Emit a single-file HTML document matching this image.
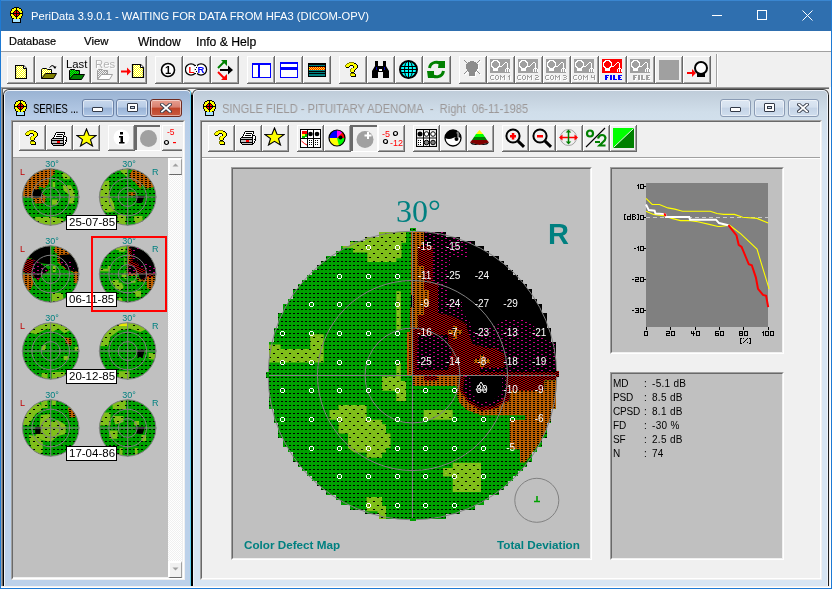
<!DOCTYPE html><html><head><meta charset="utf-8"><style>
*{margin:0;padding:0;box-sizing:border-box}
html,body{width:832px;height:589px;overflow:hidden;background:#f0f0f0;font-family:"Liberation Sans",sans-serif;position:relative}
.a{position:absolute}
.btn{position:absolute;width:28px;height:28px;background:#f0f0f0;border-left:1px solid #fff;border-top:1px solid #fff;box-shadow:inset -1px -1px 0 #a0a0a0, 1px 1px 0 #696969}
.btn svg{position:absolute;left:0;top:0}
.sbtn{position:absolute;width:27px;height:27px;background:#f0f0f0;border-left:1px solid #fff;border-top:1px solid #fff;box-shadow:inset -1px -1px 0 #a0a0a0, 1px 1px 0 #696969}
.t{position:absolute;white-space:nowrap;line-height:1}
svg,.t{will-change:transform}
</style></head><body><div class="a" style="left:0px;top:0px;width:832px;height:31px;background:#2f6faf;"></div><div class="a" style="left:0px;top:0px;width:832px;height:1px;background:#3a86d0;"></div><div class="a" style="left:0px;top:0px;width:1px;height:589px;background:#1e7ad4;"></div><div class="a" style="left:831px;top:0px;width:1px;height:589px;background:#1e7ad4;"></div><div class="a" style="left:0px;top:588px;width:832px;height:1px;background:#1e7ad4;"></div><div class="a" style="left:1px;top:31px;width:830px;height:20px;background:#ffffff;"></div><div class="a" style="left:1px;top:51px;width:830px;height:1px;background:#a0a0a0;"></div><div class="a" style="left:10px;top:7px"><svg width="13" height="16" viewBox="0 0 13 16" shape-rendering="crispEdges"><rect x="4" y="0" width="5" height="1" fill="#000"/><rect x="2" y="1" width="2" height="1" fill="#000"/><rect x="4" y="1" width="2" height="1" fill="#ffff00"/><rect x="6" y="1" width="1" height="1" fill="#000"/><rect x="7" y="1" width="2" height="1" fill="#ffff00"/><rect x="9" y="1" width="2" height="1" fill="#000"/><rect x="1" y="2" width="1" height="1" fill="#000"/><rect x="2" y="2" width="4" height="1" fill="#ffff00"/><rect x="6" y="2" width="1" height="1" fill="#000"/><rect x="7" y="2" width="4" height="1" fill="#ffff00"/><rect x="11" y="2" width="1" height="1" fill="#000"/><rect x="1" y="3" width="1" height="1" fill="#000"/><rect x="2" y="3" width="3" height="1" fill="#ffff00"/><rect x="5" y="3" width="3" height="1" fill="#000"/><rect x="8" y="3" width="3" height="1" fill="#ffff00"/><rect x="11" y="3" width="1" height="1" fill="#000"/><rect x="0" y="4" width="1" height="1" fill="#000"/><rect x="1" y="4" width="3" height="1" fill="#ffff00"/><rect x="4" y="4" width="1" height="1" fill="#000"/><rect x="5" y="4" width="1" height="1" fill="#ff0000"/><rect x="6" y="4" width="1" height="1" fill="#000"/><rect x="7" y="4" width="1" height="1" fill="#ff0000"/><rect x="8" y="4" width="1" height="1" fill="#000"/><rect x="9" y="4" width="3" height="1" fill="#ffff00"/><rect x="12" y="4" width="1" height="1" fill="#000"/><rect x="0" y="5" width="1" height="1" fill="#000"/><rect x="1" y="5" width="2" height="1" fill="#ffff00"/><rect x="3" y="5" width="1" height="1" fill="#000"/><rect x="4" y="5" width="2" height="1" fill="#ff0000"/><rect x="6" y="5" width="1" height="1" fill="#000"/><rect x="7" y="5" width="2" height="1" fill="#ff0000"/><rect x="9" y="5" width="1" height="1" fill="#000"/><rect x="10" y="5" width="2" height="1" fill="#ffff00"/><rect x="12" y="5" width="1" height="1" fill="#000"/><rect x="0" y="6" width="13" height="1" fill="#000"/><rect x="0" y="7" width="1" height="1" fill="#000"/><rect x="1" y="7" width="2" height="1" fill="#ffff00"/><rect x="3" y="7" width="1" height="1" fill="#000"/><rect x="4" y="7" width="2" height="1" fill="#ff0000"/><rect x="6" y="7" width="1" height="1" fill="#000"/><rect x="7" y="7" width="2" height="1" fill="#ff0000"/><rect x="9" y="7" width="1" height="1" fill="#000"/><rect x="10" y="7" width="2" height="1" fill="#ffff00"/><rect x="12" y="7" width="1" height="1" fill="#000"/><rect x="0" y="8" width="1" height="1" fill="#000"/><rect x="1" y="8" width="3" height="1" fill="#ffff00"/><rect x="4" y="8" width="1" height="1" fill="#000"/><rect x="5" y="8" width="1" height="1" fill="#ff0000"/><rect x="6" y="8" width="1" height="1" fill="#000"/><rect x="7" y="8" width="1" height="1" fill="#ff0000"/><rect x="8" y="8" width="1" height="1" fill="#000"/><rect x="9" y="8" width="3" height="1" fill="#ffff00"/><rect x="12" y="8" width="1" height="1" fill="#000"/><rect x="1" y="9" width="1" height="1" fill="#000"/><rect x="2" y="9" width="3" height="1" fill="#ffff00"/><rect x="5" y="9" width="3" height="1" fill="#000"/><rect x="8" y="9" width="3" height="1" fill="#ffff00"/><rect x="11" y="9" width="1" height="1" fill="#000"/><rect x="1" y="10" width="1" height="1" fill="#000"/><rect x="2" y="10" width="4" height="1" fill="#ffff00"/><rect x="6" y="10" width="1" height="1" fill="#000"/><rect x="7" y="10" width="4" height="1" fill="#ffff00"/><rect x="11" y="10" width="1" height="1" fill="#000"/><rect x="2" y="11" width="2" height="1" fill="#000"/><rect x="4" y="11" width="2" height="1" fill="#ffff00"/><rect x="6" y="11" width="1" height="1" fill="#000"/><rect x="7" y="11" width="2" height="1" fill="#ffff00"/><rect x="9" y="11" width="2" height="1" fill="#000"/><rect x="2" y="12" width="1" height="1" fill="#000"/><rect x="3" y="12" width="7" height="1" fill="#a8e4ff"/><rect x="10" y="12" width="1" height="1" fill="#000"/><rect x="2" y="13" width="1" height="1" fill="#000"/><rect x="3" y="13" width="7" height="1" fill="#a8e4ff"/><rect x="10" y="13" width="1" height="1" fill="#000"/><rect x="2" y="14" width="1" height="1" fill="#000"/><rect x="3" y="14" width="7" height="1" fill="#a8e4ff"/><rect x="10" y="14" width="1" height="1" fill="#000"/><rect x="2" y="15" width="9" height="1" fill="#000"/></svg></div><div class="t" style="left:31px;top:10.5px;font-size:11.2px;color:#fff;font-weight:normal;font-family:'Liberation Sans',sans-serif;">PeriData 3.9.0.1 - WAITING FOR DATA FROM HFA3 (DICOM-OPV)</div><div class="a" style="left:712px;top:15px;width:10px;height:1px;background:#fff;"></div><div class="a" style="left:757px;top:10px;width:10px;height:10px;border:1px solid #fff"></div><svg class="a" style="left:802px;top:10px" width="11" height="11"><path d="M0.5 0.5L10.5 10.5M10.5 0.5L0.5 10.5" stroke="#fff" stroke-width="1"/></svg><div class="t" style="left:9px;top:36.3px;font-size:11px;color:#000;font-weight:normal;font-family:'Liberation Sans',sans-serif;-webkit-text-stroke:0.2px #000">Database</div><div class="t" style="left:84px;top:36.3px;font-size:11.4px;color:#000;font-weight:normal;font-family:'Liberation Sans',sans-serif;-webkit-text-stroke:0.2px #000">View</div><div class="t" style="left:137.5px;top:36.3px;font-size:12px;color:#000;font-weight:normal;font-family:'Liberation Sans',sans-serif;-webkit-text-stroke:0.2px #000">Window</div><div class="t" style="left:195.5px;top:36.3px;font-size:12.2px;color:#000;font-weight:normal;font-family:'Liberation Sans',sans-serif;-webkit-text-stroke:0.2px #000">Info &amp; Help</div><div class="a" style="left:1px;top:52px;width:830px;height:36px;background:#f0f0f0;"></div><svg width="0" height="0" style="position:absolute">
<defs>
<pattern id="dy" width="2" height="2" patternUnits="userSpaceOnUse"><rect width="2" height="2" fill="#ffff00"/><rect width="1" height="1" fill="#fff"/><rect x="1" y="1" width="1" height="1" fill="#fff"/></pattern>
<pattern id="dg" width="2" height="2" patternUnits="userSpaceOnUse"><rect width="2" height="2" fill="#00ff00"/><rect width="1" height="1" fill="#008000"/><rect x="1" y="1" width="1" height="1" fill="#008000"/></pattern>
<pattern id="dgr" width="2" height="2" patternUnits="userSpaceOnUse"><rect width="2" height="2" fill="#f0f0f0"/><rect width="1" height="1" fill="#a0a0a0"/><rect x="1" y="1" width="1" height="1" fill="#a0a0a0"/></pattern>
<pattern id="dyr" width="2" height="2" patternUnits="userSpaceOnUse"><rect width="2" height="2" fill="#ffff00"/><rect width="1" height="1" fill="#ff0000"/><rect x="1" y="1" width="1" height="1" fill="#ff0000"/></pattern>
<pattern id="scr" width="2" height="2" patternUnits="userSpaceOnUse"><rect width="2" height="2" fill="#fff"/><rect width="1" height="1" fill="#f0f0f0"/><rect x="1" y="1" width="1" height="1" fill="#f0f0f0"/></pattern>
</defs></svg><div class="a" style="left:7px;top:56px;width:28px;height:28px;background:#f0f0f0;"><div class="a" style="left:0;top:0;width:28px;height:1px;background:#fff"></div><div class="a" style="left:0;top:0;width:1px;height:28px;background:#fff"></div><div class="a" style="left:26px;top:1px;width:1px;height:26px;background:#a0a0a0"></div><div class="a" style="left:1px;top:26px;width:26px;height:1px;background:#a0a0a0"></div><div class="a" style="left:27px;top:0;width:1px;height:28px;background:#696969"></div><div class="a" style="left:0;top:27px;width:28px;height:1px;background:#696969"></div></div><div class="a" style="left:35px;top:56px;width:28px;height:28px;background:#f0f0f0;"><div class="a" style="left:0;top:0;width:28px;height:1px;background:#fff"></div><div class="a" style="left:0;top:0;width:1px;height:28px;background:#fff"></div><div class="a" style="left:26px;top:1px;width:1px;height:26px;background:#a0a0a0"></div><div class="a" style="left:1px;top:26px;width:26px;height:1px;background:#a0a0a0"></div><div class="a" style="left:27px;top:0;width:1px;height:28px;background:#696969"></div><div class="a" style="left:0;top:27px;width:28px;height:1px;background:#696969"></div></div><div class="a" style="left:63px;top:56px;width:28px;height:28px;background:#f0f0f0;"><div class="a" style="left:0;top:0;width:28px;height:1px;background:#fff"></div><div class="a" style="left:0;top:0;width:1px;height:28px;background:#fff"></div><div class="a" style="left:26px;top:1px;width:1px;height:26px;background:#a0a0a0"></div><div class="a" style="left:1px;top:26px;width:26px;height:1px;background:#a0a0a0"></div><div class="a" style="left:27px;top:0;width:1px;height:28px;background:#696969"></div><div class="a" style="left:0;top:27px;width:28px;height:1px;background:#696969"></div></div><div class="a" style="left:91px;top:56px;width:28px;height:28px;background:#f0f0f0;"><div class="a" style="left:0;top:0;width:28px;height:1px;background:#fff"></div><div class="a" style="left:0;top:0;width:1px;height:28px;background:#fff"></div><div class="a" style="left:26px;top:1px;width:1px;height:26px;background:#a0a0a0"></div><div class="a" style="left:1px;top:26px;width:26px;height:1px;background:#a0a0a0"></div><div class="a" style="left:27px;top:0;width:1px;height:28px;background:#696969"></div><div class="a" style="left:0;top:27px;width:28px;height:1px;background:#696969"></div></div><div class="a" style="left:119px;top:56px;width:28px;height:28px;background:#f0f0f0;"><div class="a" style="left:0;top:0;width:28px;height:1px;background:#fff"></div><div class="a" style="left:0;top:0;width:1px;height:28px;background:#fff"></div><div class="a" style="left:26px;top:1px;width:1px;height:26px;background:#a0a0a0"></div><div class="a" style="left:1px;top:26px;width:26px;height:1px;background:#a0a0a0"></div><div class="a" style="left:27px;top:0;width:1px;height:28px;background:#696969"></div><div class="a" style="left:0;top:27px;width:28px;height:1px;background:#696969"></div></div><div class="a" style="left:155px;top:56px;width:28px;height:28px;background:#f0f0f0;"><div class="a" style="left:0;top:0;width:28px;height:1px;background:#fff"></div><div class="a" style="left:0;top:0;width:1px;height:28px;background:#fff"></div><div class="a" style="left:26px;top:1px;width:1px;height:26px;background:#a0a0a0"></div><div class="a" style="left:1px;top:26px;width:26px;height:1px;background:#a0a0a0"></div><div class="a" style="left:27px;top:0;width:1px;height:28px;background:#696969"></div><div class="a" style="left:0;top:27px;width:28px;height:1px;background:#696969"></div></div><div class="a" style="left:183px;top:56px;width:28px;height:28px;background:#f0f0f0;"><div class="a" style="left:0;top:0;width:28px;height:1px;background:#fff"></div><div class="a" style="left:0;top:0;width:1px;height:28px;background:#fff"></div><div class="a" style="left:26px;top:1px;width:1px;height:26px;background:#a0a0a0"></div><div class="a" style="left:1px;top:26px;width:26px;height:1px;background:#a0a0a0"></div><div class="a" style="left:27px;top:0;width:1px;height:28px;background:#696969"></div><div class="a" style="left:0;top:27px;width:28px;height:1px;background:#696969"></div></div><div class="a" style="left:211px;top:56px;width:28px;height:28px;background:#f0f0f0;"><div class="a" style="left:0;top:0;width:28px;height:1px;background:#fff"></div><div class="a" style="left:0;top:0;width:1px;height:28px;background:#fff"></div><div class="a" style="left:26px;top:1px;width:1px;height:26px;background:#a0a0a0"></div><div class="a" style="left:1px;top:26px;width:26px;height:1px;background:#a0a0a0"></div><div class="a" style="left:27px;top:0;width:1px;height:28px;background:#696969"></div><div class="a" style="left:0;top:27px;width:28px;height:1px;background:#696969"></div></div><div class="a" style="left:247px;top:56px;width:28px;height:28px;background:#f0f0f0;"><div class="a" style="left:0;top:0;width:28px;height:1px;background:#fff"></div><div class="a" style="left:0;top:0;width:1px;height:28px;background:#fff"></div><div class="a" style="left:26px;top:1px;width:1px;height:26px;background:#a0a0a0"></div><div class="a" style="left:1px;top:26px;width:26px;height:1px;background:#a0a0a0"></div><div class="a" style="left:27px;top:0;width:1px;height:28px;background:#696969"></div><div class="a" style="left:0;top:27px;width:28px;height:1px;background:#696969"></div></div><div class="a" style="left:275px;top:56px;width:28px;height:28px;background:#f0f0f0;"><div class="a" style="left:0;top:0;width:28px;height:1px;background:#fff"></div><div class="a" style="left:0;top:0;width:1px;height:28px;background:#fff"></div><div class="a" style="left:26px;top:1px;width:1px;height:26px;background:#a0a0a0"></div><div class="a" style="left:1px;top:26px;width:26px;height:1px;background:#a0a0a0"></div><div class="a" style="left:27px;top:0;width:1px;height:28px;background:#696969"></div><div class="a" style="left:0;top:27px;width:28px;height:1px;background:#696969"></div></div><div class="a" style="left:303px;top:56px;width:28px;height:28px;background:#f0f0f0;"><div class="a" style="left:0;top:0;width:28px;height:1px;background:#fff"></div><div class="a" style="left:0;top:0;width:1px;height:28px;background:#fff"></div><div class="a" style="left:26px;top:1px;width:1px;height:26px;background:#a0a0a0"></div><div class="a" style="left:1px;top:26px;width:26px;height:1px;background:#a0a0a0"></div><div class="a" style="left:27px;top:0;width:1px;height:28px;background:#696969"></div><div class="a" style="left:0;top:27px;width:28px;height:1px;background:#696969"></div></div><div class="a" style="left:339px;top:56px;width:28px;height:28px;background:#f0f0f0;"><div class="a" style="left:0;top:0;width:28px;height:1px;background:#fff"></div><div class="a" style="left:0;top:0;width:1px;height:28px;background:#fff"></div><div class="a" style="left:26px;top:1px;width:1px;height:26px;background:#a0a0a0"></div><div class="a" style="left:1px;top:26px;width:26px;height:1px;background:#a0a0a0"></div><div class="a" style="left:27px;top:0;width:1px;height:28px;background:#696969"></div><div class="a" style="left:0;top:27px;width:28px;height:1px;background:#696969"></div></div><div class="a" style="left:367px;top:56px;width:28px;height:28px;background:#f0f0f0;"><div class="a" style="left:0;top:0;width:28px;height:1px;background:#fff"></div><div class="a" style="left:0;top:0;width:1px;height:28px;background:#fff"></div><div class="a" style="left:26px;top:1px;width:1px;height:26px;background:#a0a0a0"></div><div class="a" style="left:1px;top:26px;width:26px;height:1px;background:#a0a0a0"></div><div class="a" style="left:27px;top:0;width:1px;height:28px;background:#696969"></div><div class="a" style="left:0;top:27px;width:28px;height:1px;background:#696969"></div></div><div class="a" style="left:395px;top:56px;width:28px;height:28px;background:#f0f0f0;"><div class="a" style="left:0;top:0;width:28px;height:1px;background:#fff"></div><div class="a" style="left:0;top:0;width:1px;height:28px;background:#fff"></div><div class="a" style="left:26px;top:1px;width:1px;height:26px;background:#a0a0a0"></div><div class="a" style="left:1px;top:26px;width:26px;height:1px;background:#a0a0a0"></div><div class="a" style="left:27px;top:0;width:1px;height:28px;background:#696969"></div><div class="a" style="left:0;top:27px;width:28px;height:1px;background:#696969"></div></div><div class="a" style="left:423px;top:56px;width:28px;height:28px;background:#f0f0f0;"><div class="a" style="left:0;top:0;width:28px;height:1px;background:#fff"></div><div class="a" style="left:0;top:0;width:1px;height:28px;background:#fff"></div><div class="a" style="left:26px;top:1px;width:1px;height:26px;background:#a0a0a0"></div><div class="a" style="left:1px;top:26px;width:26px;height:1px;background:#a0a0a0"></div><div class="a" style="left:27px;top:0;width:1px;height:28px;background:#696969"></div><div class="a" style="left:0;top:27px;width:28px;height:1px;background:#696969"></div></div><div class="a" style="left:459px;top:56px;width:28px;height:28px;background:#f0f0f0;"><div class="a" style="left:0;top:0;width:28px;height:1px;background:#fff"></div><div class="a" style="left:0;top:0;width:1px;height:28px;background:#fff"></div><div class="a" style="left:26px;top:1px;width:1px;height:26px;background:#a0a0a0"></div><div class="a" style="left:1px;top:26px;width:26px;height:1px;background:#a0a0a0"></div><div class="a" style="left:27px;top:0;width:1px;height:28px;background:#696969"></div><div class="a" style="left:0;top:27px;width:28px;height:1px;background:#696969"></div></div><div class="a" style="left:487px;top:56px;width:28px;height:28px;background:#f0f0f0;"><div class="a" style="left:0;top:0;width:28px;height:1px;background:#fff"></div><div class="a" style="left:0;top:0;width:1px;height:28px;background:#fff"></div><div class="a" style="left:26px;top:1px;width:1px;height:26px;background:#a0a0a0"></div><div class="a" style="left:1px;top:26px;width:26px;height:1px;background:#a0a0a0"></div><div class="a" style="left:27px;top:0;width:1px;height:28px;background:#696969"></div><div class="a" style="left:0;top:27px;width:28px;height:1px;background:#696969"></div></div><div class="a" style="left:515px;top:56px;width:28px;height:28px;background:#f0f0f0;"><div class="a" style="left:0;top:0;width:28px;height:1px;background:#fff"></div><div class="a" style="left:0;top:0;width:1px;height:28px;background:#fff"></div><div class="a" style="left:26px;top:1px;width:1px;height:26px;background:#a0a0a0"></div><div class="a" style="left:1px;top:26px;width:26px;height:1px;background:#a0a0a0"></div><div class="a" style="left:27px;top:0;width:1px;height:28px;background:#696969"></div><div class="a" style="left:0;top:27px;width:28px;height:1px;background:#696969"></div></div><div class="a" style="left:543px;top:56px;width:28px;height:28px;background:#f0f0f0;"><div class="a" style="left:0;top:0;width:28px;height:1px;background:#fff"></div><div class="a" style="left:0;top:0;width:1px;height:28px;background:#fff"></div><div class="a" style="left:26px;top:1px;width:1px;height:26px;background:#a0a0a0"></div><div class="a" style="left:1px;top:26px;width:26px;height:1px;background:#a0a0a0"></div><div class="a" style="left:27px;top:0;width:1px;height:28px;background:#696969"></div><div class="a" style="left:0;top:27px;width:28px;height:1px;background:#696969"></div></div><div class="a" style="left:571px;top:56px;width:28px;height:28px;background:#f0f0f0;"><div class="a" style="left:0;top:0;width:28px;height:1px;background:#fff"></div><div class="a" style="left:0;top:0;width:1px;height:28px;background:#fff"></div><div class="a" style="left:26px;top:1px;width:1px;height:26px;background:#a0a0a0"></div><div class="a" style="left:1px;top:26px;width:26px;height:1px;background:#a0a0a0"></div><div class="a" style="left:27px;top:0;width:1px;height:28px;background:#696969"></div><div class="a" style="left:0;top:27px;width:28px;height:1px;background:#696969"></div></div><div class="a" style="left:599px;top:56px;width:28px;height:28px;background:#f0f0f0;"><div class="a" style="left:0;top:0;width:28px;height:1px;background:#fff"></div><div class="a" style="left:0;top:0;width:1px;height:28px;background:#fff"></div><div class="a" style="left:26px;top:1px;width:1px;height:26px;background:#a0a0a0"></div><div class="a" style="left:1px;top:26px;width:26px;height:1px;background:#a0a0a0"></div><div class="a" style="left:27px;top:0;width:1px;height:28px;background:#696969"></div><div class="a" style="left:0;top:27px;width:28px;height:1px;background:#696969"></div></div><div class="a" style="left:627px;top:56px;width:28px;height:28px;background:#f0f0f0;"><div class="a" style="left:0;top:0;width:28px;height:1px;background:#fff"></div><div class="a" style="left:0;top:0;width:1px;height:28px;background:#fff"></div><div class="a" style="left:26px;top:1px;width:1px;height:26px;background:#a0a0a0"></div><div class="a" style="left:1px;top:26px;width:26px;height:1px;background:#a0a0a0"></div><div class="a" style="left:27px;top:0;width:1px;height:28px;background:#696969"></div><div class="a" style="left:0;top:27px;width:28px;height:1px;background:#696969"></div></div><div class="a" style="left:655px;top:56px;width:28px;height:28px;background:#f0f0f0;"><div class="a" style="left:0;top:0;width:28px;height:1px;background:#fff"></div><div class="a" style="left:0;top:0;width:1px;height:28px;background:#fff"></div><div class="a" style="left:26px;top:1px;width:1px;height:26px;background:#a0a0a0"></div><div class="a" style="left:1px;top:26px;width:26px;height:1px;background:#a0a0a0"></div><div class="a" style="left:27px;top:0;width:1px;height:28px;background:#696969"></div><div class="a" style="left:0;top:27px;width:28px;height:1px;background:#696969"></div></div><div class="a" style="left:683px;top:56px;width:28px;height:28px;background:#f0f0f0;"><div class="a" style="left:0;top:0;width:28px;height:1px;background:#fff"></div><div class="a" style="left:0;top:0;width:1px;height:28px;background:#fff"></div><div class="a" style="left:26px;top:1px;width:1px;height:26px;background:#a0a0a0"></div><div class="a" style="left:1px;top:26px;width:26px;height:1px;background:#a0a0a0"></div><div class="a" style="left:27px;top:0;width:1px;height:28px;background:#696969"></div><div class="a" style="left:0;top:27px;width:28px;height:1px;background:#696969"></div></div><div class="a" style="left:716px;top:54px;width:1px;height:33px;background:#a0a0a0;"></div><div class="a" style="left:717px;top:54px;width:1px;height:33px;background:#fff;"></div><svg class="a" style="left:15px;top:65px;" width="12" height="14" viewBox="0 0 12 14"><path d="M0.5 0.5h8l3 3v10h-11z" fill="url(#dy)" stroke="#000" stroke-width="1.2"/><path d="M8.5 0.5v3h3" fill="#fff" stroke="#000" stroke-width="1"/></svg><svg class="a" style="left:40px;top:64px;" width="18" height="16" viewBox="0 0 18 16"><path d="M1.5 14.5V5.5L2.5 4.5H6.5L7.5 5.5H11.5V9.5" fill="url(#dy)" stroke="#000"/><path d="M1.5 14.5L5.5 9.5H16.5L13.5 14.5Z" fill="#808000" stroke="#000"/><path d="M9.5 3.5Q12 0 14.5 2.5" fill="none" stroke="#000"/><path d="M13 2.5h3.5l-1.5 2.5z" fill="#000"/></svg><div class="t" style="left:65.5px;top:58.8px;font-size:11.3px;color:#000;font-weight:normal;font-family:'Liberation Sans',sans-serif;">Last</div><svg class="a" style="left:68px;top:69px;" width="17" height="12" viewBox="0 0 17 12"><path d="M1.5 10.5V1.5L2.5 0.5H6.5L7.5 1.5H11.5V5.5" fill="url(#dg)" stroke="#000"/><path d="M1.5 10.5L5.5 5.5H16.5L13.5 10.5Z" fill="#008000" stroke="#000"/></svg><div class="t" style="left:95px;top:58.8px;font-size:11.3px;color:#b4b4b4;font-weight:normal;font-family:'Liberation Sans',sans-serif;text-shadow:1px 1px 0 #fff">Res</div><svg class="a" style="left:96px;top:69px;" width="17" height="12" viewBox="0 0 17 12"><path d="M1.5 10.5V1.5L2.5 0.5H6.5L7.5 1.5H11.5V5.5" fill="url(#dgr)" stroke="#a0a0a0"/><path d="M1.5 10.5L5.5 5.5H16.5L13.5 10.5Z" fill="#fff" stroke="#a0a0a0"/></svg><svg class="a" style="left:121px;top:64px;" width="24" height="15" viewBox="0 0 24 15"><path d="M0 7.5h7" stroke="#ff0000" stroke-width="2"/><path d="M6 3.5l4 4-4 4z" fill="#ff0000"/><path d="M11.5 0.5h8l3 3v10h-11z" fill="url(#dy)" stroke="#000" stroke-width="1.2"/><path d="M19.5 0.5v3h3" fill="#fff" stroke="#000" stroke-width="1"/></svg><svg class="a" style="left:160px;top:62px;" width="16" height="16" viewBox="0 0 16 16"><circle cx="8" cy="8" r="6.5" fill="#fff" stroke="#000" stroke-width="1.6"/><text x="8" y="12.3" font-family="Liberation Sans" font-weight="bold" font-size="11" text-anchor="middle" fill="#000">1</text></svg><svg class="a" style="left:185px;top:62px;" width="23" height="16" viewBox="0 0 23 16"><circle cx="6" cy="7.5" r="5.6" fill="#fff" stroke="#000" stroke-width="1.3"/><circle cx="16" cy="7.5" r="5.6" fill="#fff" stroke="#000" stroke-width="1.3"/><rect x="10" y="3" width="2" height="9" fill="#fff"/><path d="M10.5 3v1M11.5 5v1M10.5 7v1M11.5 9v1M10.5 11v1" stroke="#000" stroke-width="1"/><text x="6.3" y="10.6" font-family="Liberation Sans" font-weight="bold" font-size="9.5" text-anchor="middle" fill="#ff0000">L</text><text x="16" y="10.6" font-family="Liberation Sans" font-weight="bold" font-size="9.5" text-anchor="middle" fill="#0000ff">R</text></svg><svg class="a" style="left:216px;top:59px;" width="18" height="22" viewBox="0 0 18 22"><path d="M2 9L9 2" stroke="#008000" stroke-width="2"/><path d="M5 1h6v6z" fill="#008000"/><path d="M2 13L9 20" stroke="#ff0000" stroke-width="2"/><path d="M5 21h6v-6z" fill="#ff0000"/><path d="M4 11h10" stroke="#000" stroke-width="2"/><path d="M12 6.5l5 4.5-5 4.5z" fill="#000"/></svg><svg class="a" style="left:252px;top:63px;shape-rendering="crispEdges"" width="19" height="15" viewBox="0 0 19 15"><rect x="0.5" y="0.5" width="6" height="14" fill="#fff" stroke="#0000ff"/><rect x="0" y="0" width="7" height="2" fill="#0000ff"/><rect x="7.5" y="0.5" width="11" height="14" fill="#fff" stroke="#0000ff"/><rect x="7" y="0" width="12" height="2" fill="#0000ff"/></svg><svg class="a" style="left:280px;top:62px;shape-rendering="crispEdges"" width="18" height="16" viewBox="0 0 18 16"><rect x="0.5" y="0.5" width="17" height="5" fill="#fff" stroke="#0000ff"/><rect x="0" y="0" width="18" height="2" fill="#0000ff"/><rect x="0.5" y="6.5" width="17" height="9" fill="#fff" stroke="#0000ff"/><rect x="0" y="6" width="18" height="2" fill="#0000ff"/></svg><svg class="a" style="left:308px;top:63px;shape-rendering="crispEdges"" width="18" height="14" viewBox="0 0 18 14"><rect x="0" y="0" width="18" height="14" fill="#000"/><rect x="1" y="2" width="16" height="11" fill="#008080"/><rect x="1" y="4" width="16" height="3" fill="url(#dyr)"/><rect x="1" y="8" width="16" height="1" fill="#000"/><rect x="1" y="10" width="16" height="1" fill="#000"/><rect x="1" y="3" width="16" height="1" fill="#000"/></svg><svg class="a" style="left:372px;top:61px;shape-rendering="crispEdges"" width="17" height="17" viewBox="0 0 17 17"><path d="M3 0h3v5h5v-5h3v5l3 5v7h-6v-6h-5v6h-6v-7l3-5z" fill="#000"/><rect x="4" y="6" width="1" height="3" fill="#0000c0"/><rect x="12" y="6" width="1" height="3" fill="#0000c0"/><rect x="7" y="8" width="3" height="2" fill="#fff"/></svg><svg class="a" style="left:399px;top:60px;" width="19" height="19" viewBox="0 0 19 19"><circle cx="9.5" cy="9.5" r="8.5" fill="#00ffff" stroke="#000" stroke-width="2"/><path d="M2 6.5h15M1 9.5h17M2 12.5h15M9.5 1v17" stroke="#000" stroke-width="1"/><ellipse cx="9.5" cy="9.5" rx="4" ry="8.5" fill="none" stroke="#000" stroke-width="1"/></svg><svg class="a" style="left:426px;top:60px;" width="21" height="19" viewBox="0 0 21 19"><path d="M3.5 8A7 7 0 0 1 16 5" fill="none" stroke="#008000" stroke-width="3"/><path d="M13 1h6v7h-7z" fill="#008000"/><path d="M17.5 11A7 7 0 0 1 5 14" fill="none" stroke="#008000" stroke-width="3"/><path d="M1 11h7v7h-6z" fill="#008000"/></svg><svg class="a" style="left:465px;top:61px;shape-rendering:crispEdges" width="17" height="17" viewBox="0 0 17 17"><rect x="0" y="0" width="1" height="1" fill="#ffffff"/><rect x="15" y="0" width="1" height="1" fill="#ffffff"/><rect x="1" y="1" width="1" height="1" fill="#ffffff"/><rect x="6" y="1" width="4" height="1" fill="#ffffff"/><rect x="14" y="1" width="1" height="1" fill="#ffffff"/><rect x="2" y="2" width="1" height="1" fill="#ffffff"/><rect x="4" y="2" width="8" height="1" fill="#ffffff"/><rect x="13" y="2" width="1" height="1" fill="#ffffff"/><rect x="3" y="3" width="10" height="1" fill="#ffffff"/><rect x="2" y="4" width="12" height="1" fill="#ffffff"/><rect x="2" y="5" width="12" height="1" fill="#ffffff"/><rect x="2" y="6" width="12" height="1" fill="#ffffff"/><rect x="2" y="7" width="12" height="1" fill="#ffffff"/><rect x="2" y="8" width="12" height="1" fill="#ffffff"/><rect x="3" y="9" width="10" height="1" fill="#ffffff"/><rect x="3" y="10" width="10" height="1" fill="#ffffff"/><rect x="2" y="11" width="1" height="1" fill="#ffffff"/><rect x="4" y="11" width="8" height="1" fill="#ffffff"/><rect x="13" y="11" width="1" height="1" fill="#ffffff"/><rect x="1" y="12" width="1" height="1" fill="#ffffff"/><rect x="5" y="12" width="6" height="1" fill="#ffffff"/><rect x="14" y="12" width="1" height="1" fill="#ffffff"/><rect x="0" y="13" width="1" height="1" fill="#ffffff"/><rect x="5" y="13" width="6" height="1" fill="#ffffff"/><rect x="15" y="13" width="1" height="1" fill="#ffffff"/><rect x="5" y="14" width="6" height="1" fill="#ffffff"/><rect x="5" y="15" width="6" height="1" fill="#ffffff"/></svg><svg class="a" style="left:464px;top:60px;shape-rendering:crispEdges" width="16" height="16" viewBox="0 0 16 16"><rect x="0" y="0" width="1" height="1" fill="#8c8c8c"/><rect x="15" y="0" width="1" height="1" fill="#8c8c8c"/><rect x="1" y="1" width="1" height="1" fill="#8c8c8c"/><rect x="6" y="1" width="4" height="1" fill="#8c8c8c"/><rect x="14" y="1" width="1" height="1" fill="#8c8c8c"/><rect x="2" y="2" width="1" height="1" fill="#8c8c8c"/><rect x="4" y="2" width="8" height="1" fill="#8c8c8c"/><rect x="13" y="2" width="1" height="1" fill="#8c8c8c"/><rect x="3" y="3" width="10" height="1" fill="#8c8c8c"/><rect x="2" y="4" width="12" height="1" fill="#8c8c8c"/><rect x="2" y="5" width="12" height="1" fill="#8c8c8c"/><rect x="2" y="6" width="12" height="1" fill="#8c8c8c"/><rect x="2" y="7" width="12" height="1" fill="#8c8c8c"/><rect x="2" y="8" width="12" height="1" fill="#8c8c8c"/><rect x="3" y="9" width="10" height="1" fill="#8c8c8c"/><rect x="3" y="10" width="10" height="1" fill="#8c8c8c"/><rect x="2" y="11" width="1" height="1" fill="#8c8c8c"/><rect x="4" y="11" width="8" height="1" fill="#8c8c8c"/><rect x="13" y="11" width="1" height="1" fill="#8c8c8c"/><rect x="1" y="12" width="1" height="1" fill="#8c8c8c"/><rect x="5" y="12" width="6" height="1" fill="#8c8c8c"/><rect x="14" y="12" width="1" height="1" fill="#8c8c8c"/><rect x="0" y="13" width="1" height="1" fill="#8c8c8c"/><rect x="5" y="13" width="6" height="1" fill="#8c8c8c"/><rect x="15" y="13" width="1" height="1" fill="#8c8c8c"/><rect x="5" y="14" width="6" height="1" fill="#8c8c8c"/><rect x="5" y="15" width="6" height="1" fill="#8c8c8c"/></svg><svg class="a" style="left:490px;top:59px;shape-rendering:crispEdges" width="20" height="14" viewBox="0 0 20 14"><rect x="0" y="0" width="20" height="1" fill="#a0a0a0"/><rect x="0" y="1" width="3" height="1" fill="#a0a0a0"/><rect x="3" y="1" width="5" height="1" fill="#ffffff"/><rect x="8" y="1" width="12" height="1" fill="#a0a0a0"/><rect x="0" y="2" width="2" height="1" fill="#a0a0a0"/><rect x="2" y="2" width="2" height="1" fill="#ffffff"/><rect x="4" y="2" width="3" height="1" fill="#a0a0a0"/><rect x="7" y="2" width="2" height="1" fill="#ffffff"/><rect x="9" y="2" width="11" height="1" fill="#a0a0a0"/><rect x="0" y="3" width="1" height="1" fill="#a0a0a0"/><rect x="1" y="3" width="2" height="1" fill="#ffffff"/><rect x="3" y="3" width="5" height="1" fill="#a0a0a0"/><rect x="8" y="3" width="2" height="1" fill="#ffffff"/><rect x="10" y="3" width="5" height="1" fill="#a0a0a0"/><rect x="15" y="3" width="2" height="1" fill="#ffffff"/><rect x="17" y="3" width="3" height="1" fill="#a0a0a0"/><rect x="0" y="4" width="1" height="1" fill="#a0a0a0"/><rect x="1" y="4" width="1" height="1" fill="#ffffff"/><rect x="2" y="4" width="7" height="1" fill="#a0a0a0"/><rect x="9" y="4" width="1" height="1" fill="#ffffff"/><rect x="10" y="4" width="4" height="1" fill="#a0a0a0"/><rect x="14" y="4" width="1" height="1" fill="#ffffff"/><rect x="15" y="4" width="2" height="1" fill="#a0a0a0"/><rect x="17" y="4" width="1" height="1" fill="#ffffff"/><rect x="18" y="4" width="2" height="1" fill="#a0a0a0"/><rect x="0" y="5" width="1" height="1" fill="#a0a0a0"/><rect x="1" y="5" width="1" height="1" fill="#ffffff"/><rect x="2" y="5" width="7" height="1" fill="#a0a0a0"/><rect x="9" y="5" width="1" height="1" fill="#ffffff"/><rect x="10" y="5" width="3" height="1" fill="#a0a0a0"/><rect x="13" y="5" width="1" height="1" fill="#ffffff"/><rect x="14" y="5" width="3" height="1" fill="#a0a0a0"/><rect x="17" y="5" width="1" height="1" fill="#ffffff"/><rect x="18" y="5" width="2" height="1" fill="#a0a0a0"/><rect x="0" y="6" width="1" height="1" fill="#a0a0a0"/><rect x="1" y="6" width="1" height="1" fill="#ffffff"/><rect x="2" y="6" width="7" height="1" fill="#a0a0a0"/><rect x="9" y="6" width="1" height="1" fill="#ffffff"/><rect x="10" y="6" width="2" height="1" fill="#a0a0a0"/><rect x="12" y="6" width="1" height="1" fill="#ffffff"/><rect x="13" y="6" width="4" height="1" fill="#a0a0a0"/><rect x="17" y="6" width="1" height="1" fill="#ffffff"/><rect x="18" y="6" width="2" height="1" fill="#a0a0a0"/><rect x="0" y="7" width="1" height="1" fill="#a0a0a0"/><rect x="1" y="7" width="2" height="1" fill="#ffffff"/><rect x="3" y="7" width="5" height="1" fill="#a0a0a0"/><rect x="8" y="7" width="4" height="1" fill="#ffffff"/><rect x="12" y="7" width="5" height="1" fill="#a0a0a0"/><rect x="17" y="7" width="1" height="1" fill="#ffffff"/><rect x="18" y="7" width="2" height="1" fill="#a0a0a0"/><rect x="0" y="8" width="2" height="1" fill="#a0a0a0"/><rect x="2" y="8" width="2" height="1" fill="#ffffff"/><rect x="4" y="8" width="3" height="1" fill="#a0a0a0"/><rect x="7" y="8" width="2" height="1" fill="#ffffff"/><rect x="9" y="8" width="8" height="1" fill="#a0a0a0"/><rect x="17" y="8" width="1" height="1" fill="#ffffff"/><rect x="18" y="8" width="2" height="1" fill="#a0a0a0"/><rect x="0" y="9" width="3" height="1" fill="#a0a0a0"/><rect x="3" y="9" width="5" height="1" fill="#ffffff"/><rect x="8" y="9" width="8" height="1" fill="#a0a0a0"/><rect x="16" y="9" width="3" height="1" fill="#ffffff"/><rect x="19" y="9" width="1" height="1" fill="#a0a0a0"/><rect x="0" y="10" width="3" height="1" fill="#a0a0a0"/><rect x="3" y="10" width="5" height="1" fill="#ffffff"/><rect x="8" y="10" width="7" height="1" fill="#a0a0a0"/><rect x="15" y="10" width="1" height="1" fill="#ffffff"/><rect x="16" y="10" width="1" height="1" fill="#a0a0a0"/><rect x="17" y="10" width="1" height="1" fill="#ffffff"/><rect x="18" y="10" width="1" height="1" fill="#a0a0a0"/><rect x="19" y="10" width="1" height="1" fill="#ffffff"/><rect x="0" y="11" width="3" height="1" fill="#a0a0a0"/><rect x="3" y="11" width="5" height="1" fill="#ffffff"/><rect x="8" y="11" width="7" height="1" fill="#a0a0a0"/><rect x="15" y="11" width="1" height="1" fill="#ffffff"/><rect x="16" y="11" width="1" height="1" fill="#a0a0a0"/><rect x="17" y="11" width="1" height="1" fill="#ffffff"/><rect x="18" y="11" width="1" height="1" fill="#a0a0a0"/><rect x="19" y="11" width="1" height="1" fill="#ffffff"/><rect x="0" y="12" width="15" height="1" fill="#a0a0a0"/><rect x="15" y="12" width="1" height="1" fill="#ffffff"/><rect x="16" y="12" width="1" height="1" fill="#a0a0a0"/><rect x="17" y="12" width="1" height="1" fill="#ffffff"/><rect x="18" y="12" width="1" height="1" fill="#a0a0a0"/><rect x="19" y="12" width="1" height="1" fill="#ffffff"/><rect x="0" y="13" width="20" height="1" fill="#a0a0a0"/></svg><svg class="a" style="left:491px;top:76px;shape-rendering:crispEdges" width="21" height="5" viewBox="0 0 21 5"><rect x="1" y="0" width="3" height="1" fill="#ffffff"/><rect x="6" y="0" width="2" height="1" fill="#ffffff"/><rect x="10" y="0" width="1" height="1" fill="#ffffff"/><rect x="14" y="0" width="1" height="1" fill="#ffffff"/><rect x="19" y="0" width="1" height="1" fill="#ffffff"/><rect x="0" y="1" width="1" height="1" fill="#ffffff"/><rect x="5" y="1" width="1" height="1" fill="#ffffff"/><rect x="8" y="1" width="1" height="1" fill="#ffffff"/><rect x="10" y="1" width="2" height="1" fill="#ffffff"/><rect x="13" y="1" width="2" height="1" fill="#ffffff"/><rect x="18" y="1" width="2" height="1" fill="#ffffff"/><rect x="0" y="2" width="1" height="1" fill="#ffffff"/><rect x="5" y="2" width="1" height="1" fill="#ffffff"/><rect x="8" y="2" width="1" height="1" fill="#ffffff"/><rect x="10" y="2" width="1" height="1" fill="#ffffff"/><rect x="12" y="2" width="1" height="1" fill="#ffffff"/><rect x="14" y="2" width="1" height="1" fill="#ffffff"/><rect x="19" y="2" width="1" height="1" fill="#ffffff"/><rect x="0" y="3" width="1" height="1" fill="#ffffff"/><rect x="5" y="3" width="1" height="1" fill="#ffffff"/><rect x="8" y="3" width="1" height="1" fill="#ffffff"/><rect x="10" y="3" width="1" height="1" fill="#ffffff"/><rect x="14" y="3" width="1" height="1" fill="#ffffff"/><rect x="19" y="3" width="1" height="1" fill="#ffffff"/><rect x="1" y="4" width="3" height="1" fill="#ffffff"/><rect x="6" y="4" width="2" height="1" fill="#ffffff"/><rect x="10" y="4" width="1" height="1" fill="#ffffff"/><rect x="14" y="4" width="1" height="1" fill="#ffffff"/><rect x="19" y="4" width="1" height="1" fill="#ffffff"/></svg><svg class="a" style="left:490px;top:75px;shape-rendering:crispEdges" width="21" height="5" viewBox="0 0 21 5"><rect x="1" y="0" width="3" height="1" fill="#a0a0a0"/><rect x="6" y="0" width="2" height="1" fill="#a0a0a0"/><rect x="10" y="0" width="1" height="1" fill="#a0a0a0"/><rect x="14" y="0" width="1" height="1" fill="#a0a0a0"/><rect x="19" y="0" width="1" height="1" fill="#a0a0a0"/><rect x="0" y="1" width="1" height="1" fill="#a0a0a0"/><rect x="5" y="1" width="1" height="1" fill="#a0a0a0"/><rect x="8" y="1" width="1" height="1" fill="#a0a0a0"/><rect x="10" y="1" width="2" height="1" fill="#a0a0a0"/><rect x="13" y="1" width="2" height="1" fill="#a0a0a0"/><rect x="18" y="1" width="2" height="1" fill="#a0a0a0"/><rect x="0" y="2" width="1" height="1" fill="#a0a0a0"/><rect x="5" y="2" width="1" height="1" fill="#a0a0a0"/><rect x="8" y="2" width="1" height="1" fill="#a0a0a0"/><rect x="10" y="2" width="1" height="1" fill="#a0a0a0"/><rect x="12" y="2" width="1" height="1" fill="#a0a0a0"/><rect x="14" y="2" width="1" height="1" fill="#a0a0a0"/><rect x="19" y="2" width="1" height="1" fill="#a0a0a0"/><rect x="0" y="3" width="1" height="1" fill="#a0a0a0"/><rect x="5" y="3" width="1" height="1" fill="#a0a0a0"/><rect x="8" y="3" width="1" height="1" fill="#a0a0a0"/><rect x="10" y="3" width="1" height="1" fill="#a0a0a0"/><rect x="14" y="3" width="1" height="1" fill="#a0a0a0"/><rect x="19" y="3" width="1" height="1" fill="#a0a0a0"/><rect x="1" y="4" width="3" height="1" fill="#a0a0a0"/><rect x="6" y="4" width="2" height="1" fill="#a0a0a0"/><rect x="10" y="4" width="1" height="1" fill="#a0a0a0"/><rect x="14" y="4" width="1" height="1" fill="#a0a0a0"/><rect x="19" y="4" width="1" height="1" fill="#a0a0a0"/></svg><svg class="a" style="left:518px;top:59px;shape-rendering:crispEdges" width="20" height="14" viewBox="0 0 20 14"><rect x="0" y="0" width="20" height="1" fill="#a0a0a0"/><rect x="0" y="1" width="3" height="1" fill="#a0a0a0"/><rect x="3" y="1" width="5" height="1" fill="#ffffff"/><rect x="8" y="1" width="12" height="1" fill="#a0a0a0"/><rect x="0" y="2" width="2" height="1" fill="#a0a0a0"/><rect x="2" y="2" width="2" height="1" fill="#ffffff"/><rect x="4" y="2" width="3" height="1" fill="#a0a0a0"/><rect x="7" y="2" width="2" height="1" fill="#ffffff"/><rect x="9" y="2" width="11" height="1" fill="#a0a0a0"/><rect x="0" y="3" width="1" height="1" fill="#a0a0a0"/><rect x="1" y="3" width="2" height="1" fill="#ffffff"/><rect x="3" y="3" width="5" height="1" fill="#a0a0a0"/><rect x="8" y="3" width="2" height="1" fill="#ffffff"/><rect x="10" y="3" width="5" height="1" fill="#a0a0a0"/><rect x="15" y="3" width="2" height="1" fill="#ffffff"/><rect x="17" y="3" width="3" height="1" fill="#a0a0a0"/><rect x="0" y="4" width="1" height="1" fill="#a0a0a0"/><rect x="1" y="4" width="1" height="1" fill="#ffffff"/><rect x="2" y="4" width="7" height="1" fill="#a0a0a0"/><rect x="9" y="4" width="1" height="1" fill="#ffffff"/><rect x="10" y="4" width="4" height="1" fill="#a0a0a0"/><rect x="14" y="4" width="1" height="1" fill="#ffffff"/><rect x="15" y="4" width="2" height="1" fill="#a0a0a0"/><rect x="17" y="4" width="1" height="1" fill="#ffffff"/><rect x="18" y="4" width="2" height="1" fill="#a0a0a0"/><rect x="0" y="5" width="1" height="1" fill="#a0a0a0"/><rect x="1" y="5" width="1" height="1" fill="#ffffff"/><rect x="2" y="5" width="7" height="1" fill="#a0a0a0"/><rect x="9" y="5" width="1" height="1" fill="#ffffff"/><rect x="10" y="5" width="3" height="1" fill="#a0a0a0"/><rect x="13" y="5" width="1" height="1" fill="#ffffff"/><rect x="14" y="5" width="3" height="1" fill="#a0a0a0"/><rect x="17" y="5" width="1" height="1" fill="#ffffff"/><rect x="18" y="5" width="2" height="1" fill="#a0a0a0"/><rect x="0" y="6" width="1" height="1" fill="#a0a0a0"/><rect x="1" y="6" width="1" height="1" fill="#ffffff"/><rect x="2" y="6" width="7" height="1" fill="#a0a0a0"/><rect x="9" y="6" width="1" height="1" fill="#ffffff"/><rect x="10" y="6" width="2" height="1" fill="#a0a0a0"/><rect x="12" y="6" width="1" height="1" fill="#ffffff"/><rect x="13" y="6" width="4" height="1" fill="#a0a0a0"/><rect x="17" y="6" width="1" height="1" fill="#ffffff"/><rect x="18" y="6" width="2" height="1" fill="#a0a0a0"/><rect x="0" y="7" width="1" height="1" fill="#a0a0a0"/><rect x="1" y="7" width="2" height="1" fill="#ffffff"/><rect x="3" y="7" width="5" height="1" fill="#a0a0a0"/><rect x="8" y="7" width="4" height="1" fill="#ffffff"/><rect x="12" y="7" width="5" height="1" fill="#a0a0a0"/><rect x="17" y="7" width="1" height="1" fill="#ffffff"/><rect x="18" y="7" width="2" height="1" fill="#a0a0a0"/><rect x="0" y="8" width="2" height="1" fill="#a0a0a0"/><rect x="2" y="8" width="2" height="1" fill="#ffffff"/><rect x="4" y="8" width="3" height="1" fill="#a0a0a0"/><rect x="7" y="8" width="2" height="1" fill="#ffffff"/><rect x="9" y="8" width="8" height="1" fill="#a0a0a0"/><rect x="17" y="8" width="1" height="1" fill="#ffffff"/><rect x="18" y="8" width="2" height="1" fill="#a0a0a0"/><rect x="0" y="9" width="3" height="1" fill="#a0a0a0"/><rect x="3" y="9" width="5" height="1" fill="#ffffff"/><rect x="8" y="9" width="8" height="1" fill="#a0a0a0"/><rect x="16" y="9" width="3" height="1" fill="#ffffff"/><rect x="19" y="9" width="1" height="1" fill="#a0a0a0"/><rect x="0" y="10" width="3" height="1" fill="#a0a0a0"/><rect x="3" y="10" width="5" height="1" fill="#ffffff"/><rect x="8" y="10" width="7" height="1" fill="#a0a0a0"/><rect x="15" y="10" width="1" height="1" fill="#ffffff"/><rect x="16" y="10" width="1" height="1" fill="#a0a0a0"/><rect x="17" y="10" width="1" height="1" fill="#ffffff"/><rect x="18" y="10" width="1" height="1" fill="#a0a0a0"/><rect x="19" y="10" width="1" height="1" fill="#ffffff"/><rect x="0" y="11" width="3" height="1" fill="#a0a0a0"/><rect x="3" y="11" width="5" height="1" fill="#ffffff"/><rect x="8" y="11" width="7" height="1" fill="#a0a0a0"/><rect x="15" y="11" width="1" height="1" fill="#ffffff"/><rect x="16" y="11" width="1" height="1" fill="#a0a0a0"/><rect x="17" y="11" width="1" height="1" fill="#ffffff"/><rect x="18" y="11" width="1" height="1" fill="#a0a0a0"/><rect x="19" y="11" width="1" height="1" fill="#ffffff"/><rect x="0" y="12" width="15" height="1" fill="#a0a0a0"/><rect x="15" y="12" width="1" height="1" fill="#ffffff"/><rect x="16" y="12" width="1" height="1" fill="#a0a0a0"/><rect x="17" y="12" width="1" height="1" fill="#ffffff"/><rect x="18" y="12" width="1" height="1" fill="#a0a0a0"/><rect x="19" y="12" width="1" height="1" fill="#ffffff"/><rect x="0" y="13" width="20" height="1" fill="#a0a0a0"/></svg><svg class="a" style="left:518px;top:76px;shape-rendering:crispEdges" width="23" height="5" viewBox="0 0 23 5"><rect x="1" y="0" width="3" height="1" fill="#ffffff"/><rect x="6" y="0" width="2" height="1" fill="#ffffff"/><rect x="10" y="0" width="1" height="1" fill="#ffffff"/><rect x="14" y="0" width="1" height="1" fill="#ffffff"/><rect x="18" y="0" width="3" height="1" fill="#ffffff"/><rect x="0" y="1" width="1" height="1" fill="#ffffff"/><rect x="5" y="1" width="1" height="1" fill="#ffffff"/><rect x="8" y="1" width="1" height="1" fill="#ffffff"/><rect x="10" y="1" width="2" height="1" fill="#ffffff"/><rect x="13" y="1" width="2" height="1" fill="#ffffff"/><rect x="21" y="1" width="1" height="1" fill="#ffffff"/><rect x="0" y="2" width="1" height="1" fill="#ffffff"/><rect x="5" y="2" width="1" height="1" fill="#ffffff"/><rect x="8" y="2" width="1" height="1" fill="#ffffff"/><rect x="10" y="2" width="1" height="1" fill="#ffffff"/><rect x="12" y="2" width="1" height="1" fill="#ffffff"/><rect x="14" y="2" width="1" height="1" fill="#ffffff"/><rect x="19" y="2" width="2" height="1" fill="#ffffff"/><rect x="0" y="3" width="1" height="1" fill="#ffffff"/><rect x="5" y="3" width="1" height="1" fill="#ffffff"/><rect x="8" y="3" width="1" height="1" fill="#ffffff"/><rect x="10" y="3" width="1" height="1" fill="#ffffff"/><rect x="14" y="3" width="1" height="1" fill="#ffffff"/><rect x="18" y="3" width="1" height="1" fill="#ffffff"/><rect x="1" y="4" width="3" height="1" fill="#ffffff"/><rect x="6" y="4" width="2" height="1" fill="#ffffff"/><rect x="10" y="4" width="1" height="1" fill="#ffffff"/><rect x="14" y="4" width="1" height="1" fill="#ffffff"/><rect x="18" y="4" width="4" height="1" fill="#ffffff"/></svg><svg class="a" style="left:517px;top:75px;shape-rendering:crispEdges" width="23" height="5" viewBox="0 0 23 5"><rect x="1" y="0" width="3" height="1" fill="#a0a0a0"/><rect x="6" y="0" width="2" height="1" fill="#a0a0a0"/><rect x="10" y="0" width="1" height="1" fill="#a0a0a0"/><rect x="14" y="0" width="1" height="1" fill="#a0a0a0"/><rect x="18" y="0" width="3" height="1" fill="#a0a0a0"/><rect x="0" y="1" width="1" height="1" fill="#a0a0a0"/><rect x="5" y="1" width="1" height="1" fill="#a0a0a0"/><rect x="8" y="1" width="1" height="1" fill="#a0a0a0"/><rect x="10" y="1" width="2" height="1" fill="#a0a0a0"/><rect x="13" y="1" width="2" height="1" fill="#a0a0a0"/><rect x="21" y="1" width="1" height="1" fill="#a0a0a0"/><rect x="0" y="2" width="1" height="1" fill="#a0a0a0"/><rect x="5" y="2" width="1" height="1" fill="#a0a0a0"/><rect x="8" y="2" width="1" height="1" fill="#a0a0a0"/><rect x="10" y="2" width="1" height="1" fill="#a0a0a0"/><rect x="12" y="2" width="1" height="1" fill="#a0a0a0"/><rect x="14" y="2" width="1" height="1" fill="#a0a0a0"/><rect x="19" y="2" width="2" height="1" fill="#a0a0a0"/><rect x="0" y="3" width="1" height="1" fill="#a0a0a0"/><rect x="5" y="3" width="1" height="1" fill="#a0a0a0"/><rect x="8" y="3" width="1" height="1" fill="#a0a0a0"/><rect x="10" y="3" width="1" height="1" fill="#a0a0a0"/><rect x="14" y="3" width="1" height="1" fill="#a0a0a0"/><rect x="18" y="3" width="1" height="1" fill="#a0a0a0"/><rect x="1" y="4" width="3" height="1" fill="#a0a0a0"/><rect x="6" y="4" width="2" height="1" fill="#a0a0a0"/><rect x="10" y="4" width="1" height="1" fill="#a0a0a0"/><rect x="14" y="4" width="1" height="1" fill="#a0a0a0"/><rect x="18" y="4" width="4" height="1" fill="#a0a0a0"/></svg><svg class="a" style="left:546px;top:59px;shape-rendering:crispEdges" width="20" height="14" viewBox="0 0 20 14"><rect x="0" y="0" width="20" height="1" fill="#a0a0a0"/><rect x="0" y="1" width="3" height="1" fill="#a0a0a0"/><rect x="3" y="1" width="5" height="1" fill="#ffffff"/><rect x="8" y="1" width="12" height="1" fill="#a0a0a0"/><rect x="0" y="2" width="2" height="1" fill="#a0a0a0"/><rect x="2" y="2" width="2" height="1" fill="#ffffff"/><rect x="4" y="2" width="3" height="1" fill="#a0a0a0"/><rect x="7" y="2" width="2" height="1" fill="#ffffff"/><rect x="9" y="2" width="11" height="1" fill="#a0a0a0"/><rect x="0" y="3" width="1" height="1" fill="#a0a0a0"/><rect x="1" y="3" width="2" height="1" fill="#ffffff"/><rect x="3" y="3" width="5" height="1" fill="#a0a0a0"/><rect x="8" y="3" width="2" height="1" fill="#ffffff"/><rect x="10" y="3" width="5" height="1" fill="#a0a0a0"/><rect x="15" y="3" width="2" height="1" fill="#ffffff"/><rect x="17" y="3" width="3" height="1" fill="#a0a0a0"/><rect x="0" y="4" width="1" height="1" fill="#a0a0a0"/><rect x="1" y="4" width="1" height="1" fill="#ffffff"/><rect x="2" y="4" width="7" height="1" fill="#a0a0a0"/><rect x="9" y="4" width="1" height="1" fill="#ffffff"/><rect x="10" y="4" width="4" height="1" fill="#a0a0a0"/><rect x="14" y="4" width="1" height="1" fill="#ffffff"/><rect x="15" y="4" width="2" height="1" fill="#a0a0a0"/><rect x="17" y="4" width="1" height="1" fill="#ffffff"/><rect x="18" y="4" width="2" height="1" fill="#a0a0a0"/><rect x="0" y="5" width="1" height="1" fill="#a0a0a0"/><rect x="1" y="5" width="1" height="1" fill="#ffffff"/><rect x="2" y="5" width="7" height="1" fill="#a0a0a0"/><rect x="9" y="5" width="1" height="1" fill="#ffffff"/><rect x="10" y="5" width="3" height="1" fill="#a0a0a0"/><rect x="13" y="5" width="1" height="1" fill="#ffffff"/><rect x="14" y="5" width="3" height="1" fill="#a0a0a0"/><rect x="17" y="5" width="1" height="1" fill="#ffffff"/><rect x="18" y="5" width="2" height="1" fill="#a0a0a0"/><rect x="0" y="6" width="1" height="1" fill="#a0a0a0"/><rect x="1" y="6" width="1" height="1" fill="#ffffff"/><rect x="2" y="6" width="7" height="1" fill="#a0a0a0"/><rect x="9" y="6" width="1" height="1" fill="#ffffff"/><rect x="10" y="6" width="2" height="1" fill="#a0a0a0"/><rect x="12" y="6" width="1" height="1" fill="#ffffff"/><rect x="13" y="6" width="4" height="1" fill="#a0a0a0"/><rect x="17" y="6" width="1" height="1" fill="#ffffff"/><rect x="18" y="6" width="2" height="1" fill="#a0a0a0"/><rect x="0" y="7" width="1" height="1" fill="#a0a0a0"/><rect x="1" y="7" width="2" height="1" fill="#ffffff"/><rect x="3" y="7" width="5" height="1" fill="#a0a0a0"/><rect x="8" y="7" width="4" height="1" fill="#ffffff"/><rect x="12" y="7" width="5" height="1" fill="#a0a0a0"/><rect x="17" y="7" width="1" height="1" fill="#ffffff"/><rect x="18" y="7" width="2" height="1" fill="#a0a0a0"/><rect x="0" y="8" width="2" height="1" fill="#a0a0a0"/><rect x="2" y="8" width="2" height="1" fill="#ffffff"/><rect x="4" y="8" width="3" height="1" fill="#a0a0a0"/><rect x="7" y="8" width="2" height="1" fill="#ffffff"/><rect x="9" y="8" width="8" height="1" fill="#a0a0a0"/><rect x="17" y="8" width="1" height="1" fill="#ffffff"/><rect x="18" y="8" width="2" height="1" fill="#a0a0a0"/><rect x="0" y="9" width="3" height="1" fill="#a0a0a0"/><rect x="3" y="9" width="5" height="1" fill="#ffffff"/><rect x="8" y="9" width="8" height="1" fill="#a0a0a0"/><rect x="16" y="9" width="3" height="1" fill="#ffffff"/><rect x="19" y="9" width="1" height="1" fill="#a0a0a0"/><rect x="0" y="10" width="3" height="1" fill="#a0a0a0"/><rect x="3" y="10" width="5" height="1" fill="#ffffff"/><rect x="8" y="10" width="7" height="1" fill="#a0a0a0"/><rect x="15" y="10" width="1" height="1" fill="#ffffff"/><rect x="16" y="10" width="1" height="1" fill="#a0a0a0"/><rect x="17" y="10" width="1" height="1" fill="#ffffff"/><rect x="18" y="10" width="1" height="1" fill="#a0a0a0"/><rect x="19" y="10" width="1" height="1" fill="#ffffff"/><rect x="0" y="11" width="3" height="1" fill="#a0a0a0"/><rect x="3" y="11" width="5" height="1" fill="#ffffff"/><rect x="8" y="11" width="7" height="1" fill="#a0a0a0"/><rect x="15" y="11" width="1" height="1" fill="#ffffff"/><rect x="16" y="11" width="1" height="1" fill="#a0a0a0"/><rect x="17" y="11" width="1" height="1" fill="#ffffff"/><rect x="18" y="11" width="1" height="1" fill="#a0a0a0"/><rect x="19" y="11" width="1" height="1" fill="#ffffff"/><rect x="0" y="12" width="15" height="1" fill="#a0a0a0"/><rect x="15" y="12" width="1" height="1" fill="#ffffff"/><rect x="16" y="12" width="1" height="1" fill="#a0a0a0"/><rect x="17" y="12" width="1" height="1" fill="#ffffff"/><rect x="18" y="12" width="1" height="1" fill="#a0a0a0"/><rect x="19" y="12" width="1" height="1" fill="#ffffff"/><rect x="0" y="13" width="20" height="1" fill="#a0a0a0"/></svg><svg class="a" style="left:546px;top:76px;shape-rendering:crispEdges" width="23" height="5" viewBox="0 0 23 5"><rect x="1" y="0" width="3" height="1" fill="#ffffff"/><rect x="6" y="0" width="2" height="1" fill="#ffffff"/><rect x="10" y="0" width="1" height="1" fill="#ffffff"/><rect x="14" y="0" width="1" height="1" fill="#ffffff"/><rect x="18" y="0" width="3" height="1" fill="#ffffff"/><rect x="0" y="1" width="1" height="1" fill="#ffffff"/><rect x="5" y="1" width="1" height="1" fill="#ffffff"/><rect x="8" y="1" width="1" height="1" fill="#ffffff"/><rect x="10" y="1" width="2" height="1" fill="#ffffff"/><rect x="13" y="1" width="2" height="1" fill="#ffffff"/><rect x="21" y="1" width="1" height="1" fill="#ffffff"/><rect x="0" y="2" width="1" height="1" fill="#ffffff"/><rect x="5" y="2" width="1" height="1" fill="#ffffff"/><rect x="8" y="2" width="1" height="1" fill="#ffffff"/><rect x="10" y="2" width="1" height="1" fill="#ffffff"/><rect x="12" y="2" width="1" height="1" fill="#ffffff"/><rect x="14" y="2" width="1" height="1" fill="#ffffff"/><rect x="19" y="2" width="2" height="1" fill="#ffffff"/><rect x="0" y="3" width="1" height="1" fill="#ffffff"/><rect x="5" y="3" width="1" height="1" fill="#ffffff"/><rect x="8" y="3" width="1" height="1" fill="#ffffff"/><rect x="10" y="3" width="1" height="1" fill="#ffffff"/><rect x="14" y="3" width="1" height="1" fill="#ffffff"/><rect x="21" y="3" width="1" height="1" fill="#ffffff"/><rect x="1" y="4" width="3" height="1" fill="#ffffff"/><rect x="6" y="4" width="2" height="1" fill="#ffffff"/><rect x="10" y="4" width="1" height="1" fill="#ffffff"/><rect x="14" y="4" width="1" height="1" fill="#ffffff"/><rect x="18" y="4" width="3" height="1" fill="#ffffff"/></svg><svg class="a" style="left:545px;top:75px;shape-rendering:crispEdges" width="23" height="5" viewBox="0 0 23 5"><rect x="1" y="0" width="3" height="1" fill="#a0a0a0"/><rect x="6" y="0" width="2" height="1" fill="#a0a0a0"/><rect x="10" y="0" width="1" height="1" fill="#a0a0a0"/><rect x="14" y="0" width="1" height="1" fill="#a0a0a0"/><rect x="18" y="0" width="3" height="1" fill="#a0a0a0"/><rect x="0" y="1" width="1" height="1" fill="#a0a0a0"/><rect x="5" y="1" width="1" height="1" fill="#a0a0a0"/><rect x="8" y="1" width="1" height="1" fill="#a0a0a0"/><rect x="10" y="1" width="2" height="1" fill="#a0a0a0"/><rect x="13" y="1" width="2" height="1" fill="#a0a0a0"/><rect x="21" y="1" width="1" height="1" fill="#a0a0a0"/><rect x="0" y="2" width="1" height="1" fill="#a0a0a0"/><rect x="5" y="2" width="1" height="1" fill="#a0a0a0"/><rect x="8" y="2" width="1" height="1" fill="#a0a0a0"/><rect x="10" y="2" width="1" height="1" fill="#a0a0a0"/><rect x="12" y="2" width="1" height="1" fill="#a0a0a0"/><rect x="14" y="2" width="1" height="1" fill="#a0a0a0"/><rect x="19" y="2" width="2" height="1" fill="#a0a0a0"/><rect x="0" y="3" width="1" height="1" fill="#a0a0a0"/><rect x="5" y="3" width="1" height="1" fill="#a0a0a0"/><rect x="8" y="3" width="1" height="1" fill="#a0a0a0"/><rect x="10" y="3" width="1" height="1" fill="#a0a0a0"/><rect x="14" y="3" width="1" height="1" fill="#a0a0a0"/><rect x="21" y="3" width="1" height="1" fill="#a0a0a0"/><rect x="1" y="4" width="3" height="1" fill="#a0a0a0"/><rect x="6" y="4" width="2" height="1" fill="#a0a0a0"/><rect x="10" y="4" width="1" height="1" fill="#a0a0a0"/><rect x="14" y="4" width="1" height="1" fill="#a0a0a0"/><rect x="18" y="4" width="3" height="1" fill="#a0a0a0"/></svg><svg class="a" style="left:574px;top:59px;shape-rendering:crispEdges" width="20" height="14" viewBox="0 0 20 14"><rect x="0" y="0" width="20" height="1" fill="#a0a0a0"/><rect x="0" y="1" width="3" height="1" fill="#a0a0a0"/><rect x="3" y="1" width="5" height="1" fill="#ffffff"/><rect x="8" y="1" width="12" height="1" fill="#a0a0a0"/><rect x="0" y="2" width="2" height="1" fill="#a0a0a0"/><rect x="2" y="2" width="2" height="1" fill="#ffffff"/><rect x="4" y="2" width="3" height="1" fill="#a0a0a0"/><rect x="7" y="2" width="2" height="1" fill="#ffffff"/><rect x="9" y="2" width="11" height="1" fill="#a0a0a0"/><rect x="0" y="3" width="1" height="1" fill="#a0a0a0"/><rect x="1" y="3" width="2" height="1" fill="#ffffff"/><rect x="3" y="3" width="5" height="1" fill="#a0a0a0"/><rect x="8" y="3" width="2" height="1" fill="#ffffff"/><rect x="10" y="3" width="5" height="1" fill="#a0a0a0"/><rect x="15" y="3" width="2" height="1" fill="#ffffff"/><rect x="17" y="3" width="3" height="1" fill="#a0a0a0"/><rect x="0" y="4" width="1" height="1" fill="#a0a0a0"/><rect x="1" y="4" width="1" height="1" fill="#ffffff"/><rect x="2" y="4" width="7" height="1" fill="#a0a0a0"/><rect x="9" y="4" width="1" height="1" fill="#ffffff"/><rect x="10" y="4" width="4" height="1" fill="#a0a0a0"/><rect x="14" y="4" width="1" height="1" fill="#ffffff"/><rect x="15" y="4" width="2" height="1" fill="#a0a0a0"/><rect x="17" y="4" width="1" height="1" fill="#ffffff"/><rect x="18" y="4" width="2" height="1" fill="#a0a0a0"/><rect x="0" y="5" width="1" height="1" fill="#a0a0a0"/><rect x="1" y="5" width="1" height="1" fill="#ffffff"/><rect x="2" y="5" width="7" height="1" fill="#a0a0a0"/><rect x="9" y="5" width="1" height="1" fill="#ffffff"/><rect x="10" y="5" width="3" height="1" fill="#a0a0a0"/><rect x="13" y="5" width="1" height="1" fill="#ffffff"/><rect x="14" y="5" width="3" height="1" fill="#a0a0a0"/><rect x="17" y="5" width="1" height="1" fill="#ffffff"/><rect x="18" y="5" width="2" height="1" fill="#a0a0a0"/><rect x="0" y="6" width="1" height="1" fill="#a0a0a0"/><rect x="1" y="6" width="1" height="1" fill="#ffffff"/><rect x="2" y="6" width="7" height="1" fill="#a0a0a0"/><rect x="9" y="6" width="1" height="1" fill="#ffffff"/><rect x="10" y="6" width="2" height="1" fill="#a0a0a0"/><rect x="12" y="6" width="1" height="1" fill="#ffffff"/><rect x="13" y="6" width="4" height="1" fill="#a0a0a0"/><rect x="17" y="6" width="1" height="1" fill="#ffffff"/><rect x="18" y="6" width="2" height="1" fill="#a0a0a0"/><rect x="0" y="7" width="1" height="1" fill="#a0a0a0"/><rect x="1" y="7" width="2" height="1" fill="#ffffff"/><rect x="3" y="7" width="5" height="1" fill="#a0a0a0"/><rect x="8" y="7" width="4" height="1" fill="#ffffff"/><rect x="12" y="7" width="5" height="1" fill="#a0a0a0"/><rect x="17" y="7" width="1" height="1" fill="#ffffff"/><rect x="18" y="7" width="2" height="1" fill="#a0a0a0"/><rect x="0" y="8" width="2" height="1" fill="#a0a0a0"/><rect x="2" y="8" width="2" height="1" fill="#ffffff"/><rect x="4" y="8" width="3" height="1" fill="#a0a0a0"/><rect x="7" y="8" width="2" height="1" fill="#ffffff"/><rect x="9" y="8" width="8" height="1" fill="#a0a0a0"/><rect x="17" y="8" width="1" height="1" fill="#ffffff"/><rect x="18" y="8" width="2" height="1" fill="#a0a0a0"/><rect x="0" y="9" width="3" height="1" fill="#a0a0a0"/><rect x="3" y="9" width="5" height="1" fill="#ffffff"/><rect x="8" y="9" width="8" height="1" fill="#a0a0a0"/><rect x="16" y="9" width="3" height="1" fill="#ffffff"/><rect x="19" y="9" width="1" height="1" fill="#a0a0a0"/><rect x="0" y="10" width="3" height="1" fill="#a0a0a0"/><rect x="3" y="10" width="5" height="1" fill="#ffffff"/><rect x="8" y="10" width="7" height="1" fill="#a0a0a0"/><rect x="15" y="10" width="1" height="1" fill="#ffffff"/><rect x="16" y="10" width="1" height="1" fill="#a0a0a0"/><rect x="17" y="10" width="1" height="1" fill="#ffffff"/><rect x="18" y="10" width="1" height="1" fill="#a0a0a0"/><rect x="19" y="10" width="1" height="1" fill="#ffffff"/><rect x="0" y="11" width="3" height="1" fill="#a0a0a0"/><rect x="3" y="11" width="5" height="1" fill="#ffffff"/><rect x="8" y="11" width="7" height="1" fill="#a0a0a0"/><rect x="15" y="11" width="1" height="1" fill="#ffffff"/><rect x="16" y="11" width="1" height="1" fill="#a0a0a0"/><rect x="17" y="11" width="1" height="1" fill="#ffffff"/><rect x="18" y="11" width="1" height="1" fill="#a0a0a0"/><rect x="19" y="11" width="1" height="1" fill="#ffffff"/><rect x="0" y="12" width="15" height="1" fill="#a0a0a0"/><rect x="15" y="12" width="1" height="1" fill="#ffffff"/><rect x="16" y="12" width="1" height="1" fill="#a0a0a0"/><rect x="17" y="12" width="1" height="1" fill="#ffffff"/><rect x="18" y="12" width="1" height="1" fill="#a0a0a0"/><rect x="19" y="12" width="1" height="1" fill="#ffffff"/><rect x="0" y="13" width="20" height="1" fill="#a0a0a0"/></svg><svg class="a" style="left:574px;top:76px;shape-rendering:crispEdges" width="23" height="5" viewBox="0 0 23 5"><rect x="1" y="0" width="3" height="1" fill="#ffffff"/><rect x="6" y="0" width="2" height="1" fill="#ffffff"/><rect x="10" y="0" width="1" height="1" fill="#ffffff"/><rect x="14" y="0" width="1" height="1" fill="#ffffff"/><rect x="18" y="0" width="1" height="1" fill="#ffffff"/><rect x="21" y="0" width="1" height="1" fill="#ffffff"/><rect x="0" y="1" width="1" height="1" fill="#ffffff"/><rect x="5" y="1" width="1" height="1" fill="#ffffff"/><rect x="8" y="1" width="1" height="1" fill="#ffffff"/><rect x="10" y="1" width="2" height="1" fill="#ffffff"/><rect x="13" y="1" width="2" height="1" fill="#ffffff"/><rect x="18" y="1" width="1" height="1" fill="#ffffff"/><rect x="21" y="1" width="1" height="1" fill="#ffffff"/><rect x="0" y="2" width="1" height="1" fill="#ffffff"/><rect x="5" y="2" width="1" height="1" fill="#ffffff"/><rect x="8" y="2" width="1" height="1" fill="#ffffff"/><rect x="10" y="2" width="1" height="1" fill="#ffffff"/><rect x="12" y="2" width="1" height="1" fill="#ffffff"/><rect x="14" y="2" width="1" height="1" fill="#ffffff"/><rect x="18" y="2" width="4" height="1" fill="#ffffff"/><rect x="0" y="3" width="1" height="1" fill="#ffffff"/><rect x="5" y="3" width="1" height="1" fill="#ffffff"/><rect x="8" y="3" width="1" height="1" fill="#ffffff"/><rect x="10" y="3" width="1" height="1" fill="#ffffff"/><rect x="14" y="3" width="1" height="1" fill="#ffffff"/><rect x="21" y="3" width="1" height="1" fill="#ffffff"/><rect x="1" y="4" width="3" height="1" fill="#ffffff"/><rect x="6" y="4" width="2" height="1" fill="#ffffff"/><rect x="10" y="4" width="1" height="1" fill="#ffffff"/><rect x="14" y="4" width="1" height="1" fill="#ffffff"/><rect x="21" y="4" width="1" height="1" fill="#ffffff"/></svg><svg class="a" style="left:573px;top:75px;shape-rendering:crispEdges" width="23" height="5" viewBox="0 0 23 5"><rect x="1" y="0" width="3" height="1" fill="#a0a0a0"/><rect x="6" y="0" width="2" height="1" fill="#a0a0a0"/><rect x="10" y="0" width="1" height="1" fill="#a0a0a0"/><rect x="14" y="0" width="1" height="1" fill="#a0a0a0"/><rect x="18" y="0" width="1" height="1" fill="#a0a0a0"/><rect x="21" y="0" width="1" height="1" fill="#a0a0a0"/><rect x="0" y="1" width="1" height="1" fill="#a0a0a0"/><rect x="5" y="1" width="1" height="1" fill="#a0a0a0"/><rect x="8" y="1" width="1" height="1" fill="#a0a0a0"/><rect x="10" y="1" width="2" height="1" fill="#a0a0a0"/><rect x="13" y="1" width="2" height="1" fill="#a0a0a0"/><rect x="18" y="1" width="1" height="1" fill="#a0a0a0"/><rect x="21" y="1" width="1" height="1" fill="#a0a0a0"/><rect x="0" y="2" width="1" height="1" fill="#a0a0a0"/><rect x="5" y="2" width="1" height="1" fill="#a0a0a0"/><rect x="8" y="2" width="1" height="1" fill="#a0a0a0"/><rect x="10" y="2" width="1" height="1" fill="#a0a0a0"/><rect x="12" y="2" width="1" height="1" fill="#a0a0a0"/><rect x="14" y="2" width="1" height="1" fill="#a0a0a0"/><rect x="18" y="2" width="4" height="1" fill="#a0a0a0"/><rect x="0" y="3" width="1" height="1" fill="#a0a0a0"/><rect x="5" y="3" width="1" height="1" fill="#a0a0a0"/><rect x="8" y="3" width="1" height="1" fill="#a0a0a0"/><rect x="10" y="3" width="1" height="1" fill="#a0a0a0"/><rect x="14" y="3" width="1" height="1" fill="#a0a0a0"/><rect x="21" y="3" width="1" height="1" fill="#a0a0a0"/><rect x="1" y="4" width="3" height="1" fill="#a0a0a0"/><rect x="6" y="4" width="2" height="1" fill="#a0a0a0"/><rect x="10" y="4" width="1" height="1" fill="#a0a0a0"/><rect x="14" y="4" width="1" height="1" fill="#a0a0a0"/><rect x="21" y="4" width="1" height="1" fill="#a0a0a0"/></svg><svg class="a" style="left:602px;top:59px;shape-rendering:crispEdges" width="20" height="14" viewBox="0 0 20 14"><rect x="0" y="0" width="20" height="1" fill="#ff0000"/><rect x="0" y="1" width="3" height="1" fill="#ff0000"/><rect x="3" y="1" width="5" height="1" fill="#ffffff"/><rect x="8" y="1" width="12" height="1" fill="#ff0000"/><rect x="0" y="2" width="2" height="1" fill="#ff0000"/><rect x="2" y="2" width="2" height="1" fill="#ffffff"/><rect x="4" y="2" width="3" height="1" fill="#ff0000"/><rect x="7" y="2" width="2" height="1" fill="#ffffff"/><rect x="9" y="2" width="11" height="1" fill="#ff0000"/><rect x="0" y="3" width="1" height="1" fill="#ff0000"/><rect x="1" y="3" width="2" height="1" fill="#ffffff"/><rect x="3" y="3" width="5" height="1" fill="#ff0000"/><rect x="8" y="3" width="2" height="1" fill="#ffffff"/><rect x="10" y="3" width="5" height="1" fill="#ff0000"/><rect x="15" y="3" width="2" height="1" fill="#ffffff"/><rect x="17" y="3" width="3" height="1" fill="#ff0000"/><rect x="0" y="4" width="1" height="1" fill="#ff0000"/><rect x="1" y="4" width="1" height="1" fill="#ffffff"/><rect x="2" y="4" width="7" height="1" fill="#ff0000"/><rect x="9" y="4" width="1" height="1" fill="#ffffff"/><rect x="10" y="4" width="4" height="1" fill="#ff0000"/><rect x="14" y="4" width="1" height="1" fill="#ffffff"/><rect x="15" y="4" width="2" height="1" fill="#ff0000"/><rect x="17" y="4" width="1" height="1" fill="#ffffff"/><rect x="18" y="4" width="2" height="1" fill="#ff0000"/><rect x="0" y="5" width="1" height="1" fill="#ff0000"/><rect x="1" y="5" width="1" height="1" fill="#ffffff"/><rect x="2" y="5" width="7" height="1" fill="#ff0000"/><rect x="9" y="5" width="1" height="1" fill="#ffffff"/><rect x="10" y="5" width="3" height="1" fill="#ff0000"/><rect x="13" y="5" width="1" height="1" fill="#ffffff"/><rect x="14" y="5" width="3" height="1" fill="#ff0000"/><rect x="17" y="5" width="1" height="1" fill="#ffffff"/><rect x="18" y="5" width="2" height="1" fill="#ff0000"/><rect x="0" y="6" width="1" height="1" fill="#ff0000"/><rect x="1" y="6" width="1" height="1" fill="#ffffff"/><rect x="2" y="6" width="7" height="1" fill="#ff0000"/><rect x="9" y="6" width="1" height="1" fill="#ffffff"/><rect x="10" y="6" width="2" height="1" fill="#ff0000"/><rect x="12" y="6" width="1" height="1" fill="#ffffff"/><rect x="13" y="6" width="4" height="1" fill="#ff0000"/><rect x="17" y="6" width="1" height="1" fill="#ffffff"/><rect x="18" y="6" width="2" height="1" fill="#ff0000"/><rect x="0" y="7" width="1" height="1" fill="#ff0000"/><rect x="1" y="7" width="2" height="1" fill="#ffffff"/><rect x="3" y="7" width="5" height="1" fill="#ff0000"/><rect x="8" y="7" width="4" height="1" fill="#ffffff"/><rect x="12" y="7" width="5" height="1" fill="#ff0000"/><rect x="17" y="7" width="1" height="1" fill="#ffffff"/><rect x="18" y="7" width="2" height="1" fill="#ff0000"/><rect x="0" y="8" width="2" height="1" fill="#ff0000"/><rect x="2" y="8" width="2" height="1" fill="#ffffff"/><rect x="4" y="8" width="3" height="1" fill="#ff0000"/><rect x="7" y="8" width="2" height="1" fill="#ffffff"/><rect x="9" y="8" width="8" height="1" fill="#ff0000"/><rect x="17" y="8" width="1" height="1" fill="#ffffff"/><rect x="18" y="8" width="2" height="1" fill="#ff0000"/><rect x="0" y="9" width="3" height="1" fill="#ff0000"/><rect x="3" y="9" width="5" height="1" fill="#ffffff"/><rect x="8" y="9" width="8" height="1" fill="#ff0000"/><rect x="16" y="9" width="3" height="1" fill="#ffffff"/><rect x="19" y="9" width="1" height="1" fill="#ff0000"/><rect x="0" y="10" width="3" height="1" fill="#ff0000"/><rect x="3" y="10" width="5" height="1" fill="#ffffff"/><rect x="8" y="10" width="7" height="1" fill="#ff0000"/><rect x="15" y="10" width="1" height="1" fill="#ffffff"/><rect x="16" y="10" width="1" height="1" fill="#ff0000"/><rect x="17" y="10" width="1" height="1" fill="#ffffff"/><rect x="18" y="10" width="1" height="1" fill="#ff0000"/><rect x="19" y="10" width="1" height="1" fill="#ffffff"/><rect x="0" y="11" width="3" height="1" fill="#ff0000"/><rect x="3" y="11" width="5" height="1" fill="#ffffff"/><rect x="8" y="11" width="7" height="1" fill="#ff0000"/><rect x="15" y="11" width="1" height="1" fill="#ffffff"/><rect x="16" y="11" width="1" height="1" fill="#ff0000"/><rect x="17" y="11" width="1" height="1" fill="#ffffff"/><rect x="18" y="11" width="1" height="1" fill="#ff0000"/><rect x="19" y="11" width="1" height="1" fill="#ffffff"/><rect x="0" y="12" width="15" height="1" fill="#ff0000"/><rect x="15" y="12" width="1" height="1" fill="#ffffff"/><rect x="16" y="12" width="1" height="1" fill="#ff0000"/><rect x="17" y="12" width="1" height="1" fill="#ffffff"/><rect x="18" y="12" width="1" height="1" fill="#ff0000"/><rect x="19" y="12" width="1" height="1" fill="#ffffff"/><rect x="0" y="13" width="20" height="1" fill="#ff0000"/></svg><svg class="a" style="left:605px;top:75px;shape-rendering:crispEdges" width="18" height="5" viewBox="0 0 18 5"><rect x="0" y="0" width="4" height="1" fill="#0000ff"/><rect x="5" y="0" width="2" height="1" fill="#0000ff"/><rect x="8" y="0" width="2" height="1" fill="#0000ff"/><rect x="13" y="0" width="4" height="1" fill="#0000ff"/><rect x="0" y="1" width="2" height="1" fill="#0000ff"/><rect x="5" y="1" width="2" height="1" fill="#0000ff"/><rect x="8" y="1" width="2" height="1" fill="#0000ff"/><rect x="13" y="1" width="2" height="1" fill="#0000ff"/><rect x="0" y="2" width="3" height="1" fill="#0000ff"/><rect x="5" y="2" width="2" height="1" fill="#0000ff"/><rect x="8" y="2" width="2" height="1" fill="#0000ff"/><rect x="13" y="2" width="3" height="1" fill="#0000ff"/><rect x="0" y="3" width="2" height="1" fill="#0000ff"/><rect x="5" y="3" width="2" height="1" fill="#0000ff"/><rect x="8" y="3" width="2" height="1" fill="#0000ff"/><rect x="13" y="3" width="2" height="1" fill="#0000ff"/><rect x="0" y="4" width="2" height="1" fill="#0000ff"/><rect x="5" y="4" width="2" height="1" fill="#0000ff"/><rect x="8" y="4" width="4" height="1" fill="#0000ff"/><rect x="13" y="4" width="4" height="1" fill="#0000ff"/></svg><svg class="a" style="left:630px;top:59px;shape-rendering:crispEdges" width="20" height="14" viewBox="0 0 20 14"><rect x="0" y="0" width="20" height="1" fill="#a0a0a0"/><rect x="0" y="1" width="3" height="1" fill="#a0a0a0"/><rect x="3" y="1" width="5" height="1" fill="#ffffff"/><rect x="8" y="1" width="12" height="1" fill="#a0a0a0"/><rect x="0" y="2" width="2" height="1" fill="#a0a0a0"/><rect x="2" y="2" width="2" height="1" fill="#ffffff"/><rect x="4" y="2" width="3" height="1" fill="#a0a0a0"/><rect x="7" y="2" width="2" height="1" fill="#ffffff"/><rect x="9" y="2" width="11" height="1" fill="#a0a0a0"/><rect x="0" y="3" width="1" height="1" fill="#a0a0a0"/><rect x="1" y="3" width="2" height="1" fill="#ffffff"/><rect x="3" y="3" width="5" height="1" fill="#a0a0a0"/><rect x="8" y="3" width="2" height="1" fill="#ffffff"/><rect x="10" y="3" width="5" height="1" fill="#a0a0a0"/><rect x="15" y="3" width="2" height="1" fill="#ffffff"/><rect x="17" y="3" width="3" height="1" fill="#a0a0a0"/><rect x="0" y="4" width="1" height="1" fill="#a0a0a0"/><rect x="1" y="4" width="1" height="1" fill="#ffffff"/><rect x="2" y="4" width="7" height="1" fill="#a0a0a0"/><rect x="9" y="4" width="1" height="1" fill="#ffffff"/><rect x="10" y="4" width="4" height="1" fill="#a0a0a0"/><rect x="14" y="4" width="1" height="1" fill="#ffffff"/><rect x="15" y="4" width="2" height="1" fill="#a0a0a0"/><rect x="17" y="4" width="1" height="1" fill="#ffffff"/><rect x="18" y="4" width="2" height="1" fill="#a0a0a0"/><rect x="0" y="5" width="1" height="1" fill="#a0a0a0"/><rect x="1" y="5" width="1" height="1" fill="#ffffff"/><rect x="2" y="5" width="7" height="1" fill="#a0a0a0"/><rect x="9" y="5" width="1" height="1" fill="#ffffff"/><rect x="10" y="5" width="3" height="1" fill="#a0a0a0"/><rect x="13" y="5" width="1" height="1" fill="#ffffff"/><rect x="14" y="5" width="3" height="1" fill="#a0a0a0"/><rect x="17" y="5" width="1" height="1" fill="#ffffff"/><rect x="18" y="5" width="2" height="1" fill="#a0a0a0"/><rect x="0" y="6" width="1" height="1" fill="#a0a0a0"/><rect x="1" y="6" width="1" height="1" fill="#ffffff"/><rect x="2" y="6" width="7" height="1" fill="#a0a0a0"/><rect x="9" y="6" width="1" height="1" fill="#ffffff"/><rect x="10" y="6" width="2" height="1" fill="#a0a0a0"/><rect x="12" y="6" width="1" height="1" fill="#ffffff"/><rect x="13" y="6" width="4" height="1" fill="#a0a0a0"/><rect x="17" y="6" width="1" height="1" fill="#ffffff"/><rect x="18" y="6" width="2" height="1" fill="#a0a0a0"/><rect x="0" y="7" width="1" height="1" fill="#a0a0a0"/><rect x="1" y="7" width="2" height="1" fill="#ffffff"/><rect x="3" y="7" width="5" height="1" fill="#a0a0a0"/><rect x="8" y="7" width="4" height="1" fill="#ffffff"/><rect x="12" y="7" width="5" height="1" fill="#a0a0a0"/><rect x="17" y="7" width="1" height="1" fill="#ffffff"/><rect x="18" y="7" width="2" height="1" fill="#a0a0a0"/><rect x="0" y="8" width="2" height="1" fill="#a0a0a0"/><rect x="2" y="8" width="2" height="1" fill="#ffffff"/><rect x="4" y="8" width="3" height="1" fill="#a0a0a0"/><rect x="7" y="8" width="2" height="1" fill="#ffffff"/><rect x="9" y="8" width="8" height="1" fill="#a0a0a0"/><rect x="17" y="8" width="1" height="1" fill="#ffffff"/><rect x="18" y="8" width="2" height="1" fill="#a0a0a0"/><rect x="0" y="9" width="3" height="1" fill="#a0a0a0"/><rect x="3" y="9" width="5" height="1" fill="#ffffff"/><rect x="8" y="9" width="8" height="1" fill="#a0a0a0"/><rect x="16" y="9" width="3" height="1" fill="#ffffff"/><rect x="19" y="9" width="1" height="1" fill="#a0a0a0"/><rect x="0" y="10" width="3" height="1" fill="#a0a0a0"/><rect x="3" y="10" width="5" height="1" fill="#ffffff"/><rect x="8" y="10" width="7" height="1" fill="#a0a0a0"/><rect x="15" y="10" width="1" height="1" fill="#ffffff"/><rect x="16" y="10" width="1" height="1" fill="#a0a0a0"/><rect x="17" y="10" width="1" height="1" fill="#ffffff"/><rect x="18" y="10" width="1" height="1" fill="#a0a0a0"/><rect x="19" y="10" width="1" height="1" fill="#ffffff"/><rect x="0" y="11" width="3" height="1" fill="#a0a0a0"/><rect x="3" y="11" width="5" height="1" fill="#ffffff"/><rect x="8" y="11" width="7" height="1" fill="#a0a0a0"/><rect x="15" y="11" width="1" height="1" fill="#ffffff"/><rect x="16" y="11" width="1" height="1" fill="#a0a0a0"/><rect x="17" y="11" width="1" height="1" fill="#ffffff"/><rect x="18" y="11" width="1" height="1" fill="#a0a0a0"/><rect x="19" y="11" width="1" height="1" fill="#ffffff"/><rect x="0" y="12" width="15" height="1" fill="#a0a0a0"/><rect x="15" y="12" width="1" height="1" fill="#ffffff"/><rect x="16" y="12" width="1" height="1" fill="#a0a0a0"/><rect x="17" y="12" width="1" height="1" fill="#ffffff"/><rect x="18" y="12" width="1" height="1" fill="#a0a0a0"/><rect x="19" y="12" width="1" height="1" fill="#ffffff"/><rect x="0" y="13" width="20" height="1" fill="#a0a0a0"/></svg><svg class="a" style="left:634px;top:76px;shape-rendering:crispEdges" width="18" height="5" viewBox="0 0 18 5"><rect x="0" y="0" width="4" height="1" fill="#ffffff"/><rect x="5" y="0" width="2" height="1" fill="#ffffff"/><rect x="8" y="0" width="2" height="1" fill="#ffffff"/><rect x="13" y="0" width="4" height="1" fill="#ffffff"/><rect x="0" y="1" width="2" height="1" fill="#ffffff"/><rect x="5" y="1" width="2" height="1" fill="#ffffff"/><rect x="8" y="1" width="2" height="1" fill="#ffffff"/><rect x="13" y="1" width="2" height="1" fill="#ffffff"/><rect x="0" y="2" width="3" height="1" fill="#ffffff"/><rect x="5" y="2" width="2" height="1" fill="#ffffff"/><rect x="8" y="2" width="2" height="1" fill="#ffffff"/><rect x="13" y="2" width="3" height="1" fill="#ffffff"/><rect x="0" y="3" width="2" height="1" fill="#ffffff"/><rect x="5" y="3" width="2" height="1" fill="#ffffff"/><rect x="8" y="3" width="2" height="1" fill="#ffffff"/><rect x="13" y="3" width="2" height="1" fill="#ffffff"/><rect x="0" y="4" width="2" height="1" fill="#ffffff"/><rect x="5" y="4" width="2" height="1" fill="#ffffff"/><rect x="8" y="4" width="4" height="1" fill="#ffffff"/><rect x="13" y="4" width="4" height="1" fill="#ffffff"/></svg><svg class="a" style="left:633px;top:75px;shape-rendering:crispEdges" width="18" height="5" viewBox="0 0 18 5"><rect x="0" y="0" width="4" height="1" fill="#a0a0a0"/><rect x="5" y="0" width="2" height="1" fill="#a0a0a0"/><rect x="8" y="0" width="2" height="1" fill="#a0a0a0"/><rect x="13" y="0" width="4" height="1" fill="#a0a0a0"/><rect x="0" y="1" width="2" height="1" fill="#a0a0a0"/><rect x="5" y="1" width="2" height="1" fill="#a0a0a0"/><rect x="8" y="1" width="2" height="1" fill="#a0a0a0"/><rect x="13" y="1" width="2" height="1" fill="#a0a0a0"/><rect x="0" y="2" width="3" height="1" fill="#a0a0a0"/><rect x="5" y="2" width="2" height="1" fill="#a0a0a0"/><rect x="8" y="2" width="2" height="1" fill="#a0a0a0"/><rect x="13" y="2" width="3" height="1" fill="#a0a0a0"/><rect x="0" y="3" width="2" height="1" fill="#a0a0a0"/><rect x="5" y="3" width="2" height="1" fill="#a0a0a0"/><rect x="8" y="3" width="2" height="1" fill="#a0a0a0"/><rect x="13" y="3" width="2" height="1" fill="#a0a0a0"/><rect x="0" y="4" width="2" height="1" fill="#a0a0a0"/><rect x="5" y="4" width="2" height="1" fill="#a0a0a0"/><rect x="8" y="4" width="4" height="1" fill="#a0a0a0"/><rect x="13" y="4" width="4" height="1" fill="#a0a0a0"/></svg><div class="a" style="left:659px;top:60px;width:20px;height:20px;background:#a0a0a0;"></div><svg class="a" style="left:687px;top:60px;" width="22" height="20" viewBox="0 0 22 20"><path d="M0 13h6" stroke="#ff0000" stroke-width="2"/><path d="M5 9l4 4-4 4z" fill="#ff0000"/><circle cx="14" cy="8" r="6" fill="#fff" stroke="#000" stroke-width="2"/><rect x="10" y="13" width="8" height="4" fill="#000"/></svg><div class="a" style="left:1px;top:87px;width:830px;height:1px;background:#a0a0a0;"></div><div class="a" style="left:1px;top:88px;width:830px;height:1px;background:#696969;"></div><div class="a" style="left:1px;top:87px;width:1px;height:501px;background:#a0a0a0;"></div><div class="a" style="left:2px;top:88px;width:1px;height:500px;background:#696969;"></div><div class="a" style="left:1px;top:586px;width:830px;height:1px;background:#f0f0f0;"></div><div class="a" style="left:1px;top:587px;width:830px;height:1px;background:#ffffff;"></div><div class="a" style="left:829px;top:87px;width:1px;height:500px;background:#f0f0f0;"></div><div class="a" style="left:830px;top:87px;width:1px;height:501px;background:#ffffff;"></div><div class="a" style="left:3px;top:89px;width:189px;height:497px;overflow:hidden"><div class="a" style="left:0;top:0;width:189px;height:507px;background:#404040;border-radius:6px 6px 0 0"></div><div class="a" style="left:1px;top:1px;width:187px;height:507px;background:#eef3fa;border-radius:5px 5px 0 0"></div><div class="a" style="left:2px;top:2px;width:185px;height:507px;background:linear-gradient(180deg,#9ab3d3 0px,#b8cde8 26px,#bcd1ea 60px,#bcd1ea 500px);border-radius:4px 4px 0 0"></div></div><div class="a" style="left:11px;top:120px;width:174px;height:460px;background:#f0f0f0;border-top:1px solid #a0a0a0;border-left:1px solid #a0a0a0;border-right:1px solid #f0f0f0;border-bottom:1px solid #f0f0f0"></div><div class="a" style="left:12px;top:121px;width:172px;height:458px;border-top:1px solid #696969;border-left:1px solid #696969;border-right:1px solid #fff;border-bottom:1px solid #fff"></div><div class="a" style="left:192px;top:89px;width:637px;height:497px;overflow:hidden"><div class="a" style="left:0;top:0;width:637px;height:507px;background:#404040;border-radius:6px 6px 0 0"></div><div class="a" style="left:1px;top:1px;width:635px;height:507px;background:#eef3fa;border-radius:5px 5px 0 0"></div><div class="a" style="left:2px;top:2px;width:633px;height:507px;background:linear-gradient(180deg,#bfccd9 0px,#d0deea 21px,#d7e5f3 60px,#d7e5f3 500px);border-radius:4px 4px 0 0"></div></div><div class="a" style="left:200px;top:120px;width:622px;height:460px;background:#f0f0f0;border-top:1px solid #a0a0a0;border-left:1px solid #a0a0a0;border-right:1px solid #f0f0f0;border-bottom:1px solid #f0f0f0"></div><div class="a" style="left:201px;top:121px;width:620px;height:458px;border-top:1px solid #696969;border-left:1px solid #696969;border-right:1px solid #fff;border-bottom:1px solid #fff"></div><div class="a" style="left:190px;top:91px;width:1px;height:495px;background:#60d0f0;"></div><div class="a" style="left:191px;top:95px;width:2px;height:491px;background:#000;"></div><div class="a" style="left:3px;top:95px;width:1px;height:491px;background:#000;"></div><div class="a" style="left:828px;top:95px;width:1px;height:491px;background:#202020;"></div><div class="a" style="left:14px;top:100px"><svg width="13" height="16" viewBox="0 0 13 16" shape-rendering="crispEdges"><rect x="4" y="0" width="5" height="1" fill="#000"/><rect x="2" y="1" width="2" height="1" fill="#000"/><rect x="4" y="1" width="2" height="1" fill="#ffff00"/><rect x="6" y="1" width="1" height="1" fill="#000"/><rect x="7" y="1" width="2" height="1" fill="#ffff00"/><rect x="9" y="1" width="2" height="1" fill="#000"/><rect x="1" y="2" width="1" height="1" fill="#000"/><rect x="2" y="2" width="4" height="1" fill="#ffff00"/><rect x="6" y="2" width="1" height="1" fill="#000"/><rect x="7" y="2" width="4" height="1" fill="#ffff00"/><rect x="11" y="2" width="1" height="1" fill="#000"/><rect x="1" y="3" width="1" height="1" fill="#000"/><rect x="2" y="3" width="3" height="1" fill="#ffff00"/><rect x="5" y="3" width="3" height="1" fill="#000"/><rect x="8" y="3" width="3" height="1" fill="#ffff00"/><rect x="11" y="3" width="1" height="1" fill="#000"/><rect x="0" y="4" width="1" height="1" fill="#000"/><rect x="1" y="4" width="3" height="1" fill="#ffff00"/><rect x="4" y="4" width="1" height="1" fill="#000"/><rect x="5" y="4" width="1" height="1" fill="#ff0000"/><rect x="6" y="4" width="1" height="1" fill="#000"/><rect x="7" y="4" width="1" height="1" fill="#ff0000"/><rect x="8" y="4" width="1" height="1" fill="#000"/><rect x="9" y="4" width="3" height="1" fill="#ffff00"/><rect x="12" y="4" width="1" height="1" fill="#000"/><rect x="0" y="5" width="1" height="1" fill="#000"/><rect x="1" y="5" width="2" height="1" fill="#ffff00"/><rect x="3" y="5" width="1" height="1" fill="#000"/><rect x="4" y="5" width="2" height="1" fill="#ff0000"/><rect x="6" y="5" width="1" height="1" fill="#000"/><rect x="7" y="5" width="2" height="1" fill="#ff0000"/><rect x="9" y="5" width="1" height="1" fill="#000"/><rect x="10" y="5" width="2" height="1" fill="#ffff00"/><rect x="12" y="5" width="1" height="1" fill="#000"/><rect x="0" y="6" width="13" height="1" fill="#000"/><rect x="0" y="7" width="1" height="1" fill="#000"/><rect x="1" y="7" width="2" height="1" fill="#ffff00"/><rect x="3" y="7" width="1" height="1" fill="#000"/><rect x="4" y="7" width="2" height="1" fill="#ff0000"/><rect x="6" y="7" width="1" height="1" fill="#000"/><rect x="7" y="7" width="2" height="1" fill="#ff0000"/><rect x="9" y="7" width="1" height="1" fill="#000"/><rect x="10" y="7" width="2" height="1" fill="#ffff00"/><rect x="12" y="7" width="1" height="1" fill="#000"/><rect x="0" y="8" width="1" height="1" fill="#000"/><rect x="1" y="8" width="3" height="1" fill="#ffff00"/><rect x="4" y="8" width="1" height="1" fill="#000"/><rect x="5" y="8" width="1" height="1" fill="#ff0000"/><rect x="6" y="8" width="1" height="1" fill="#000"/><rect x="7" y="8" width="1" height="1" fill="#ff0000"/><rect x="8" y="8" width="1" height="1" fill="#000"/><rect x="9" y="8" width="3" height="1" fill="#ffff00"/><rect x="12" y="8" width="1" height="1" fill="#000"/><rect x="1" y="9" width="1" height="1" fill="#000"/><rect x="2" y="9" width="3" height="1" fill="#ffff00"/><rect x="5" y="9" width="3" height="1" fill="#000"/><rect x="8" y="9" width="3" height="1" fill="#ffff00"/><rect x="11" y="9" width="1" height="1" fill="#000"/><rect x="1" y="10" width="1" height="1" fill="#000"/><rect x="2" y="10" width="4" height="1" fill="#ffff00"/><rect x="6" y="10" width="1" height="1" fill="#000"/><rect x="7" y="10" width="4" height="1" fill="#ffff00"/><rect x="11" y="10" width="1" height="1" fill="#000"/><rect x="2" y="11" width="2" height="1" fill="#000"/><rect x="4" y="11" width="2" height="1" fill="#ffff00"/><rect x="6" y="11" width="1" height="1" fill="#000"/><rect x="7" y="11" width="2" height="1" fill="#ffff00"/><rect x="9" y="11" width="2" height="1" fill="#000"/><rect x="2" y="12" width="1" height="1" fill="#000"/><rect x="3" y="12" width="7" height="1" fill="#a8e4ff"/><rect x="10" y="12" width="1" height="1" fill="#000"/><rect x="2" y="13" width="1" height="1" fill="#000"/><rect x="3" y="13" width="7" height="1" fill="#a8e4ff"/><rect x="10" y="13" width="1" height="1" fill="#000"/><rect x="2" y="14" width="1" height="1" fill="#000"/><rect x="3" y="14" width="7" height="1" fill="#a8e4ff"/><rect x="10" y="14" width="1" height="1" fill="#000"/><rect x="2" y="15" width="9" height="1" fill="#000"/></svg></div><div class="t" style="left:33px;top:103px;font-size:12px;color:#000;font-weight:normal;font-family:'Liberation Sans',sans-serif;transform:scaleX(0.79);transform-origin:0 0">SERIES ...</div><div class="a" style="left:82px;top:99px;width:32px;height:18px;background:linear-gradient(180deg,#c8d8ec 0%,#b8cce6 45%,#98b2d6 50%,#b0c8e6 100%);border:1px solid #6c82a6;border-radius:3px;box-shadow:inset 0 0 0 1px rgba(255,255,255,0.5)"></div><div class="a" style="left:92.0px;top:107.0px;width:11px;height:5px;background:#fff;border:1px solid #333a48;border-radius:1px"></div><div class="a" style="left:116px;top:99px;width:32px;height:18px;background:linear-gradient(180deg,#c8d8ec 0%,#b8cce6 45%,#98b2d6 50%,#b0c8e6 100%);border:1px solid #6c82a6;border-radius:3px;box-shadow:inset 0 0 0 1px rgba(255,255,255,0.5)"></div><div class="a" style="left:126.5px;top:103.0px;width:11px;height:9px;background:#fff;border:1px solid #333a48;border-radius:1px"></div><div class="a" style="left:129.5px;top:106.0px;width:5px;height:3px;background:#cfdae8;border:1px solid #333a48"></div><div class="a" style="left:150px;top:99px;width:32px;height:18px;background:linear-gradient(180deg,#e8a090 0%,#d88070 45%,#c04428 50%,#c85a40 100%);border:1px solid #6e2a20;border-radius:3px;box-shadow:inset 0 0 0 1px rgba(255,255,255,0.5)"></div><svg class="a" style="left:160px;top:103px;" width="12" height="10" viewBox="0 0 12 10"><path d="M2 1.5L10 8.5M10 1.5L2 8.5" stroke="#333a48" stroke-width="3.6" stroke-linecap="square"/><path d="M2 1.5L10 8.5M10 1.5L2 8.5" stroke="#fff" stroke-width="1.8" stroke-linecap="square"/></svg><div class="a" style="left:203px;top:100px"><svg width="13" height="16" viewBox="0 0 13 16" shape-rendering="crispEdges"><rect x="4" y="0" width="5" height="1" fill="#000"/><rect x="2" y="1" width="2" height="1" fill="#000"/><rect x="4" y="1" width="2" height="1" fill="#ffff00"/><rect x="6" y="1" width="1" height="1" fill="#000"/><rect x="7" y="1" width="2" height="1" fill="#ffff00"/><rect x="9" y="1" width="2" height="1" fill="#000"/><rect x="1" y="2" width="1" height="1" fill="#000"/><rect x="2" y="2" width="4" height="1" fill="#ffff00"/><rect x="6" y="2" width="1" height="1" fill="#000"/><rect x="7" y="2" width="4" height="1" fill="#ffff00"/><rect x="11" y="2" width="1" height="1" fill="#000"/><rect x="1" y="3" width="1" height="1" fill="#000"/><rect x="2" y="3" width="3" height="1" fill="#ffff00"/><rect x="5" y="3" width="3" height="1" fill="#000"/><rect x="8" y="3" width="3" height="1" fill="#ffff00"/><rect x="11" y="3" width="1" height="1" fill="#000"/><rect x="0" y="4" width="1" height="1" fill="#000"/><rect x="1" y="4" width="3" height="1" fill="#ffff00"/><rect x="4" y="4" width="1" height="1" fill="#000"/><rect x="5" y="4" width="1" height="1" fill="#ff0000"/><rect x="6" y="4" width="1" height="1" fill="#000"/><rect x="7" y="4" width="1" height="1" fill="#ff0000"/><rect x="8" y="4" width="1" height="1" fill="#000"/><rect x="9" y="4" width="3" height="1" fill="#ffff00"/><rect x="12" y="4" width="1" height="1" fill="#000"/><rect x="0" y="5" width="1" height="1" fill="#000"/><rect x="1" y="5" width="2" height="1" fill="#ffff00"/><rect x="3" y="5" width="1" height="1" fill="#000"/><rect x="4" y="5" width="2" height="1" fill="#ff0000"/><rect x="6" y="5" width="1" height="1" fill="#000"/><rect x="7" y="5" width="2" height="1" fill="#ff0000"/><rect x="9" y="5" width="1" height="1" fill="#000"/><rect x="10" y="5" width="2" height="1" fill="#ffff00"/><rect x="12" y="5" width="1" height="1" fill="#000"/><rect x="0" y="6" width="13" height="1" fill="#000"/><rect x="0" y="7" width="1" height="1" fill="#000"/><rect x="1" y="7" width="2" height="1" fill="#ffff00"/><rect x="3" y="7" width="1" height="1" fill="#000"/><rect x="4" y="7" width="2" height="1" fill="#ff0000"/><rect x="6" y="7" width="1" height="1" fill="#000"/><rect x="7" y="7" width="2" height="1" fill="#ff0000"/><rect x="9" y="7" width="1" height="1" fill="#000"/><rect x="10" y="7" width="2" height="1" fill="#ffff00"/><rect x="12" y="7" width="1" height="1" fill="#000"/><rect x="0" y="8" width="1" height="1" fill="#000"/><rect x="1" y="8" width="3" height="1" fill="#ffff00"/><rect x="4" y="8" width="1" height="1" fill="#000"/><rect x="5" y="8" width="1" height="1" fill="#ff0000"/><rect x="6" y="8" width="1" height="1" fill="#000"/><rect x="7" y="8" width="1" height="1" fill="#ff0000"/><rect x="8" y="8" width="1" height="1" fill="#000"/><rect x="9" y="8" width="3" height="1" fill="#ffff00"/><rect x="12" y="8" width="1" height="1" fill="#000"/><rect x="1" y="9" width="1" height="1" fill="#000"/><rect x="2" y="9" width="3" height="1" fill="#ffff00"/><rect x="5" y="9" width="3" height="1" fill="#000"/><rect x="8" y="9" width="3" height="1" fill="#ffff00"/><rect x="11" y="9" width="1" height="1" fill="#000"/><rect x="1" y="10" width="1" height="1" fill="#000"/><rect x="2" y="10" width="4" height="1" fill="#ffff00"/><rect x="6" y="10" width="1" height="1" fill="#000"/><rect x="7" y="10" width="4" height="1" fill="#ffff00"/><rect x="11" y="10" width="1" height="1" fill="#000"/><rect x="2" y="11" width="2" height="1" fill="#000"/><rect x="4" y="11" width="2" height="1" fill="#ffff00"/><rect x="6" y="11" width="1" height="1" fill="#000"/><rect x="7" y="11" width="2" height="1" fill="#ffff00"/><rect x="9" y="11" width="2" height="1" fill="#000"/><rect x="2" y="12" width="1" height="1" fill="#000"/><rect x="3" y="12" width="7" height="1" fill="#a8e4ff"/><rect x="10" y="12" width="1" height="1" fill="#000"/><rect x="2" y="13" width="1" height="1" fill="#000"/><rect x="3" y="13" width="7" height="1" fill="#a8e4ff"/><rect x="10" y="13" width="1" height="1" fill="#000"/><rect x="2" y="14" width="1" height="1" fill="#000"/><rect x="3" y="14" width="7" height="1" fill="#a8e4ff"/><rect x="10" y="14" width="1" height="1" fill="#000"/><rect x="2" y="15" width="9" height="1" fill="#000"/></svg></div><div class="t" style="left:222.3px;top:103px;font-size:12px;color:#9c9898;font-weight:normal;font-family:'Liberation Sans',sans-serif;transform:scaleX(0.93);transform-origin:0 0">SINGLE FIELD - PITUITARY ADENOMA&nbsp; - &nbsp;Right&nbsp; 06-11-1985</div><div class="a" style="left:720px;top:99px;width:31px;height:18px;background:linear-gradient(180deg,#dde7f3 0%,#d4e0ee 45%,#c4d3e6 50%,#d0deee 100%);border:1px solid #8a9bb4;border-radius:3px;box-shadow:inset 0 0 0 1px rgba(255,255,255,0.5)"></div><div class="a" style="left:729.5px;top:107.0px;width:11px;height:5px;background:#fff;border:1px solid #333a48;border-radius:1px"></div><div class="a" style="left:754px;top:99px;width:31px;height:18px;background:linear-gradient(180deg,#dde7f3 0%,#d4e0ee 45%,#c4d3e6 50%,#d0deee 100%);border:1px solid #8a9bb4;border-radius:3px;box-shadow:inset 0 0 0 1px rgba(255,255,255,0.5)"></div><div class="a" style="left:764.0px;top:103.0px;width:11px;height:9px;background:#fff;border:1px solid #333a48;border-radius:1px"></div><div class="a" style="left:767.0px;top:106.0px;width:5px;height:3px;background:#cfdae8;border:1px solid #333a48"></div><div class="a" style="left:788px;top:99px;width:31px;height:18px;background:linear-gradient(180deg,#dde7f3 0%,#d4e0ee 45%,#c4d3e6 50%,#d0deee 100%);border:1px solid #8a9bb4;border-radius:3px;box-shadow:inset 0 0 0 1px rgba(255,255,255,0.5)"></div><svg class="a" style="left:797px;top:103px;" width="12" height="10" viewBox="0 0 12 10"><path d="M2 1.5L10 8.5M10 1.5L2 8.5" stroke="#333a48" stroke-width="3.6" stroke-linecap="square"/><path d="M2 1.5L10 8.5M10 1.5L2 8.5" stroke="#fff" stroke-width="1.8" stroke-linecap="square"/></svg><svg class="a" style="left:345px;top:62px;shape-rendering:crispEdges" width="13" height="15" viewBox="0 0 13 15"><rect x="4" y="0" width="5" height="1" fill="#808000"/><rect x="2" y="1" width="2" height="1" fill="#808000"/><rect x="4" y="1" width="5" height="1" fill="#ffff00"/><rect x="9" y="1" width="2" height="1" fill="#000"/><rect x="1" y="2" width="1" height="1" fill="#808000"/><rect x="2" y="2" width="9" height="1" fill="#ffff00"/><rect x="11" y="2" width="1" height="1" fill="#000"/><rect x="0" y="3" width="1" height="1" fill="#808000"/><rect x="1" y="3" width="4" height="1" fill="#ffff00"/><rect x="5" y="3" width="3" height="1" fill="#000"/><rect x="8" y="3" width="4" height="1" fill="#ffff00"/><rect x="12" y="3" width="1" height="1" fill="#000"/><rect x="0" y="4" width="1" height="1" fill="#808000"/><rect x="1" y="4" width="3" height="1" fill="#ffff00"/><rect x="4" y="4" width="1" height="1" fill="#000"/><rect x="8" y="4" width="1" height="1" fill="#000"/><rect x="9" y="4" width="3" height="1" fill="#ffff00"/><rect x="12" y="4" width="1" height="1" fill="#000"/><rect x="1" y="5" width="3" height="1" fill="#000"/><rect x="8" y="5" width="1" height="1" fill="#000"/><rect x="9" y="5" width="3" height="1" fill="#ffff00"/><rect x="12" y="5" width="1" height="1" fill="#000"/><rect x="6" y="6" width="1" height="1" fill="#808000"/><rect x="7" y="6" width="4" height="1" fill="#ffff00"/><rect x="11" y="6" width="1" height="1" fill="#000"/><rect x="5" y="7" width="1" height="1" fill="#808000"/><rect x="6" y="7" width="4" height="1" fill="#ffff00"/><rect x="10" y="7" width="1" height="1" fill="#000"/><rect x="5" y="8" width="1" height="1" fill="#808000"/><rect x="6" y="8" width="3" height="1" fill="#ffff00"/><rect x="9" y="8" width="1" height="1" fill="#000"/><rect x="5" y="9" width="1" height="1" fill="#808000"/><rect x="6" y="9" width="3" height="1" fill="#ffff00"/><rect x="9" y="9" width="1" height="1" fill="#000"/><rect x="6" y="10" width="3" height="1" fill="#000"/><rect x="5" y="11" width="4" height="1" fill="#808000"/><rect x="9" y="11" width="1" height="1" fill="#000"/><rect x="5" y="12" width="1" height="1" fill="#808000"/><rect x="6" y="12" width="4" height="1" fill="#ffff00"/><rect x="10" y="12" width="1" height="1" fill="#000"/><rect x="5" y="13" width="1" height="1" fill="#808000"/><rect x="6" y="13" width="4" height="1" fill="#ffff00"/><rect x="10" y="13" width="1" height="1" fill="#000"/><rect x="6" y="14" width="5" height="1" fill="#000"/></svg><div class="a" style="left:13px;top:122px;width:170px;height:35px;background:#f0f0f0;"></div><div class="a" style="left:13px;top:157px;width:170px;height:1px;background:#a0a0a0;"></div><div class="a" style="left:19px;top:125px;width:27px;height:26px;background:#f0f0f0;"><div class="a" style="left:0;top:0;width:27px;height:1px;background:#fff"></div><div class="a" style="left:0;top:0;width:1px;height:26px;background:#fff"></div><div class="a" style="left:25px;top:1px;width:1px;height:24px;background:#a0a0a0"></div><div class="a" style="left:1px;top:24px;width:25px;height:1px;background:#a0a0a0"></div><div class="a" style="left:26px;top:0;width:1px;height:26px;background:#696969"></div><div class="a" style="left:0;top:25px;width:27px;height:1px;background:#696969"></div></div><div class="a" style="left:46px;top:125px;width:27px;height:26px;background:#f0f0f0;"><div class="a" style="left:0;top:0;width:27px;height:1px;background:#fff"></div><div class="a" style="left:0;top:0;width:1px;height:26px;background:#fff"></div><div class="a" style="left:25px;top:1px;width:1px;height:24px;background:#a0a0a0"></div><div class="a" style="left:1px;top:24px;width:25px;height:1px;background:#a0a0a0"></div><div class="a" style="left:26px;top:0;width:1px;height:26px;background:#696969"></div><div class="a" style="left:0;top:25px;width:27px;height:1px;background:#696969"></div></div><div class="a" style="left:73px;top:125px;width:27px;height:26px;background:#f0f0f0;"><div class="a" style="left:0;top:0;width:27px;height:1px;background:#fff"></div><div class="a" style="left:0;top:0;width:1px;height:26px;background:#fff"></div><div class="a" style="left:25px;top:1px;width:1px;height:24px;background:#a0a0a0"></div><div class="a" style="left:1px;top:24px;width:25px;height:1px;background:#a0a0a0"></div><div class="a" style="left:26px;top:0;width:1px;height:26px;background:#696969"></div><div class="a" style="left:0;top:25px;width:27px;height:1px;background:#696969"></div></div><div class="a" style="left:108px;top:125px;width:27px;height:26px;background:#f0f0f0;"><div class="a" style="left:0;top:0;width:27px;height:1px;background:#fff"></div><div class="a" style="left:0;top:0;width:1px;height:26px;background:#fff"></div><div class="a" style="left:25px;top:1px;width:1px;height:24px;background:#a0a0a0"></div><div class="a" style="left:1px;top:24px;width:25px;height:1px;background:#a0a0a0"></div><div class="a" style="left:26px;top:0;width:1px;height:26px;background:#696969"></div><div class="a" style="left:0;top:25px;width:27px;height:1px;background:#696969"></div></div><div class="a" style="left:135px;top:125px;width:26px;height:26px;background:#f0f0f0"><div class="a" style="left:0;top:0;width:26px;height:2px;background:#696969"></div><div class="a" style="left:0;top:0;width:2px;height:26px;background:#696969"></div><div class="a" style="left:25px;top:0;width:1px;height:26px;background:#fff"></div><div class="a" style="left:0;top:25px;width:26px;height:1px;background:#fff"></div></div><div class="a" style="left:162px;top:125px;width:20px;height:26px;overflow:hidden"><div class="a" style="left:0px;top:0px;width:27px;height:26px;background:#f0f0f0;"><div class="a" style="left:0;top:0;width:27px;height:1px;background:#fff"></div><div class="a" style="left:0;top:0;width:1px;height:26px;background:#fff"></div><div class="a" style="left:25px;top:1px;width:1px;height:24px;background:#a0a0a0"></div><div class="a" style="left:1px;top:24px;width:25px;height:1px;background:#a0a0a0"></div><div class="a" style="left:26px;top:0;width:1px;height:26px;background:#696969"></div><div class="a" style="left:0;top:25px;width:27px;height:1px;background:#696969"></div></div></div><svg class="a" style="left:25px;top:130px;shape-rendering:crispEdges" width="13" height="15" viewBox="0 0 13 15"><rect x="4" y="0" width="5" height="1" fill="#808000"/><rect x="2" y="1" width="2" height="1" fill="#808000"/><rect x="4" y="1" width="5" height="1" fill="#ffff00"/><rect x="9" y="1" width="2" height="1" fill="#000"/><rect x="1" y="2" width="1" height="1" fill="#808000"/><rect x="2" y="2" width="9" height="1" fill="#ffff00"/><rect x="11" y="2" width="1" height="1" fill="#000"/><rect x="0" y="3" width="1" height="1" fill="#808000"/><rect x="1" y="3" width="4" height="1" fill="#ffff00"/><rect x="5" y="3" width="3" height="1" fill="#000"/><rect x="8" y="3" width="4" height="1" fill="#ffff00"/><rect x="12" y="3" width="1" height="1" fill="#000"/><rect x="0" y="4" width="1" height="1" fill="#808000"/><rect x="1" y="4" width="3" height="1" fill="#ffff00"/><rect x="4" y="4" width="1" height="1" fill="#000"/><rect x="8" y="4" width="1" height="1" fill="#000"/><rect x="9" y="4" width="3" height="1" fill="#ffff00"/><rect x="12" y="4" width="1" height="1" fill="#000"/><rect x="1" y="5" width="3" height="1" fill="#000"/><rect x="8" y="5" width="1" height="1" fill="#000"/><rect x="9" y="5" width="3" height="1" fill="#ffff00"/><rect x="12" y="5" width="1" height="1" fill="#000"/><rect x="6" y="6" width="1" height="1" fill="#808000"/><rect x="7" y="6" width="4" height="1" fill="#ffff00"/><rect x="11" y="6" width="1" height="1" fill="#000"/><rect x="5" y="7" width="1" height="1" fill="#808000"/><rect x="6" y="7" width="4" height="1" fill="#ffff00"/><rect x="10" y="7" width="1" height="1" fill="#000"/><rect x="5" y="8" width="1" height="1" fill="#808000"/><rect x="6" y="8" width="3" height="1" fill="#ffff00"/><rect x="9" y="8" width="1" height="1" fill="#000"/><rect x="5" y="9" width="1" height="1" fill="#808000"/><rect x="6" y="9" width="3" height="1" fill="#ffff00"/><rect x="9" y="9" width="1" height="1" fill="#000"/><rect x="6" y="10" width="3" height="1" fill="#000"/><rect x="5" y="11" width="4" height="1" fill="#808000"/><rect x="9" y="11" width="1" height="1" fill="#000"/><rect x="5" y="12" width="1" height="1" fill="#808000"/><rect x="6" y="12" width="4" height="1" fill="#ffff00"/><rect x="10" y="12" width="1" height="1" fill="#000"/><rect x="5" y="13" width="1" height="1" fill="#808000"/><rect x="6" y="13" width="4" height="1" fill="#ffff00"/><rect x="10" y="13" width="1" height="1" fill="#000"/><rect x="6" y="14" width="5" height="1" fill="#000"/></svg><svg class="a" style="left:51px;top:132px;shape-rendering:crispEdges" width="16" height="14" viewBox="0 0 16 14"><rect x="5" y="0" width="9" height="1" fill="#000"/><rect x="4" y="1" width="1" height="1" fill="#000"/><rect x="5" y="1" width="8" height="1" fill="#fff"/><rect x="13" y="1" width="1" height="1" fill="#000"/><rect x="4" y="2" width="1" height="1" fill="#000"/><rect x="5" y="2" width="1" height="1" fill="#fff"/><rect x="6" y="2" width="6" height="1" fill="#000"/><rect x="12" y="2" width="1" height="1" fill="#fff"/><rect x="13" y="2" width="1" height="1" fill="#000"/><rect x="3" y="3" width="1" height="1" fill="#000"/><rect x="4" y="3" width="8" height="1" fill="#fff"/><rect x="12" y="3" width="1" height="1" fill="#000"/><rect x="3" y="4" width="1" height="1" fill="#000"/><rect x="4" y="4" width="1" height="1" fill="#fff"/><rect x="5" y="4" width="6" height="1" fill="#000"/><rect x="11" y="4" width="1" height="1" fill="#fff"/><rect x="12" y="4" width="3" height="1" fill="#000"/><rect x="2" y="5" width="1" height="1" fill="#000"/><rect x="3" y="5" width="9" height="1" fill="#fff"/><rect x="12" y="5" width="1" height="1" fill="#000"/><rect x="13" y="5" width="2" height="1" fill="#fff"/><rect x="15" y="5" width="1" height="1" fill="#000"/><rect x="1" y="6" width="12" height="1" fill="#000"/><rect x="13" y="6" width="2" height="1" fill="#fff"/><rect x="15" y="6" width="1" height="1" fill="#000"/><rect x="0" y="7" width="1" height="1" fill="#000"/><rect x="1" y="7" width="11" height="1" fill="#c0c0c0"/><rect x="12" y="7" width="1" height="1" fill="#000"/><rect x="13" y="7" width="2" height="1" fill="#fff"/><rect x="15" y="7" width="1" height="1" fill="#000"/><rect x="0" y="8" width="13" height="1" fill="#000"/><rect x="13" y="8" width="1" height="1" fill="#fff"/><rect x="14" y="8" width="2" height="1" fill="#000"/><rect x="0" y="9" width="1" height="1" fill="#000"/><rect x="1" y="9" width="5" height="1" fill="#c0c0c0"/><rect x="6" y="9" width="3" height="1" fill="#ff0000"/><rect x="9" y="9" width="3" height="1" fill="#c0c0c0"/><rect x="12" y="9" width="1" height="1" fill="#000"/><rect x="13" y="9" width="2" height="1" fill="#fff"/><rect x="15" y="9" width="1" height="1" fill="#000"/><rect x="0" y="10" width="1" height="1" fill="#000"/><rect x="1" y="10" width="5" height="1" fill="#c0c0c0"/><rect x="6" y="10" width="3" height="1" fill="#ff0000"/><rect x="9" y="10" width="3" height="1" fill="#c0c0c0"/><rect x="12" y="10" width="1" height="1" fill="#000"/><rect x="13" y="10" width="1" height="1" fill="#fff"/><rect x="14" y="10" width="1" height="1" fill="#000"/><rect x="0" y="11" width="13" height="1" fill="#000"/><rect x="13" y="11" width="1" height="1" fill="#fff"/><rect x="14" y="11" width="1" height="1" fill="#000"/><rect x="1" y="12" width="1" height="1" fill="#000"/><rect x="2" y="12" width="10" height="1" fill="#c0c0c0"/><rect x="12" y="12" width="2" height="1" fill="#000"/><rect x="2" y="13" width="11" height="1" fill="#000"/></svg><svg class="a" style="left:76px;top:128px;" width="21" height="19" viewBox="0 0 21 19"><path d="M10.5 1L13 7.3L20 7.5L14.5 11.6L16.5 18L10.5 14.3L4.5 18L6.5 11.6L1 7.5L8 7.3z" fill="#ffff00" stroke="#000" stroke-width="1.1"/></svg><svg class="a" style="left:113px;top:129px;" width="17" height="17" viewBox="0 0 17 17"><circle cx="8.5" cy="8.5" r="8" fill="#fff"/><rect x="7" y="3" width="3" height="2.5" fill="#000"/><path d="M6 7h4v6h1.5v1.5h-5.5v-1.5h1.5v-4.5h-1.5z" fill="#000"/></svg><svg class="a" style="left:139px;top:129px;" width="19" height="19" viewBox="0 0 19 19"><circle cx="9.5" cy="9.5" r="8.5" fill="#a0a0a0"/></svg><div class="t" style="left:167px;top:128px;font-size:8.5px;color:#ff0000;font-weight:normal;font-family:'Liberation Sans',sans-serif;">-5</div><svg class="a" style="left:163px;top:139px;" width="18" height="8" viewBox="0 0 18 8"><circle cx="3.5" cy="3.5" r="2" fill="none" stroke="#000" stroke-width="1.2"/><rect x="10" y="3" width="3" height="1.2" fill="#ff0000"/></svg><div class="a" style="left:13px;top:158px;width:155px;height:419px;background:#c0c0c0;"></div><svg class="a" style="left:168px;top:158px;" width="14" height="419" viewBox="0 0 14 419"><rect width="14" height="419" fill="url(#scr)"/></svg><div class="a" style="left:168px;top:158px;width:14px;height:17px;background:#f0f0f0;border-left:2px solid #fff;border-top:2px solid #fff;border-right:1px solid #a0a0a0;border-bottom:1px solid #696969"></div><div class="a" style="left:168px;top:561px;width:14px;height:17px;background:#f0f0f0;border-left:2px solid #fff;border-top:2px solid #fff;border-right:1px solid #a0a0a0;border-bottom:1px solid #696969"></div><svg class="a" style="left:172px;top:163px;" width="7" height="4" viewBox="0 0 7 4"><path d="M3.5 0.5L6.5 3.5H0.5z" fill="#a0a0a0"/></svg><svg class="a" style="left:172px;top:567px;" width="7" height="4" viewBox="0 0 7 4"><path d="M3.5 3.5L6.5 0.5H0.5z" fill="#a0a0a0"/></svg><div class="a" style="left:182px;top:122px;width:1px;height:456px;background:#f0f0f0;"></div><div class="a" style="left:202px;top:122px;width:618px;height:35px;background:#f0f0f0;"></div><div class="a" style="left:202px;top:157px;width:618px;height:1px;background:#a0a0a0;"></div><div class="a" style="left:202px;top:158px;width:618px;height:1px;background:#ffffff;"></div><div class="a" style="left:208px;top:125px;width:27px;height:27px;background:#f0f0f0;"><div class="a" style="left:0;top:0;width:27px;height:1px;background:#fff"></div><div class="a" style="left:0;top:0;width:1px;height:27px;background:#fff"></div><div class="a" style="left:25px;top:1px;width:1px;height:25px;background:#a0a0a0"></div><div class="a" style="left:1px;top:25px;width:25px;height:1px;background:#a0a0a0"></div><div class="a" style="left:26px;top:0;width:1px;height:27px;background:#696969"></div><div class="a" style="left:0;top:26px;width:27px;height:1px;background:#696969"></div></div><div class="a" style="left:235px;top:125px;width:27px;height:27px;background:#f0f0f0;"><div class="a" style="left:0;top:0;width:27px;height:1px;background:#fff"></div><div class="a" style="left:0;top:0;width:1px;height:27px;background:#fff"></div><div class="a" style="left:25px;top:1px;width:1px;height:25px;background:#a0a0a0"></div><div class="a" style="left:1px;top:25px;width:25px;height:1px;background:#a0a0a0"></div><div class="a" style="left:26px;top:0;width:1px;height:27px;background:#696969"></div><div class="a" style="left:0;top:26px;width:27px;height:1px;background:#696969"></div></div><div class="a" style="left:262px;top:125px;width:27px;height:27px;background:#f0f0f0;"><div class="a" style="left:0;top:0;width:27px;height:1px;background:#fff"></div><div class="a" style="left:0;top:0;width:1px;height:27px;background:#fff"></div><div class="a" style="left:25px;top:1px;width:1px;height:25px;background:#a0a0a0"></div><div class="a" style="left:1px;top:25px;width:25px;height:1px;background:#a0a0a0"></div><div class="a" style="left:26px;top:0;width:1px;height:27px;background:#696969"></div><div class="a" style="left:0;top:26px;width:27px;height:1px;background:#696969"></div></div><div class="a" style="left:297px;top:125px;width:27px;height:27px;background:#f0f0f0;"><div class="a" style="left:0;top:0;width:27px;height:1px;background:#fff"></div><div class="a" style="left:0;top:0;width:1px;height:27px;background:#fff"></div><div class="a" style="left:25px;top:1px;width:1px;height:25px;background:#a0a0a0"></div><div class="a" style="left:1px;top:25px;width:25px;height:1px;background:#a0a0a0"></div><div class="a" style="left:26px;top:0;width:1px;height:27px;background:#696969"></div><div class="a" style="left:0;top:26px;width:27px;height:1px;background:#696969"></div></div><div class="a" style="left:324px;top:125px;width:27px;height:27px;background:#f0f0f0;"><div class="a" style="left:0;top:0;width:27px;height:1px;background:#fff"></div><div class="a" style="left:0;top:0;width:1px;height:27px;background:#fff"></div><div class="a" style="left:25px;top:1px;width:1px;height:25px;background:#a0a0a0"></div><div class="a" style="left:1px;top:25px;width:25px;height:1px;background:#a0a0a0"></div><div class="a" style="left:26px;top:0;width:1px;height:27px;background:#696969"></div><div class="a" style="left:0;top:26px;width:27px;height:1px;background:#696969"></div></div><div class="a" style="left:351px;top:125px;width:27px;height:27px;background:#f0f0f0"><div class="a" style="left:0;top:0;width:27px;height:2px;background:#696969"></div><div class="a" style="left:0;top:0;width:2px;height:27px;background:#696969"></div><div class="a" style="left:26px;top:0;width:1px;height:27px;background:#fff"></div><div class="a" style="left:0;top:26px;width:27px;height:1px;background:#fff"></div></div><div class="a" style="left:378px;top:125px;width:27px;height:27px;background:#f0f0f0;"><div class="a" style="left:0;top:0;width:27px;height:1px;background:#fff"></div><div class="a" style="left:0;top:0;width:1px;height:27px;background:#fff"></div><div class="a" style="left:25px;top:1px;width:1px;height:25px;background:#a0a0a0"></div><div class="a" style="left:1px;top:25px;width:25px;height:1px;background:#a0a0a0"></div><div class="a" style="left:26px;top:0;width:1px;height:27px;background:#696969"></div><div class="a" style="left:0;top:26px;width:27px;height:1px;background:#696969"></div></div><div class="a" style="left:413px;top:125px;width:27px;height:27px;background:#f0f0f0;"><div class="a" style="left:0;top:0;width:27px;height:1px;background:#fff"></div><div class="a" style="left:0;top:0;width:1px;height:27px;background:#fff"></div><div class="a" style="left:25px;top:1px;width:1px;height:25px;background:#a0a0a0"></div><div class="a" style="left:1px;top:25px;width:25px;height:1px;background:#a0a0a0"></div><div class="a" style="left:26px;top:0;width:1px;height:27px;background:#696969"></div><div class="a" style="left:0;top:26px;width:27px;height:1px;background:#696969"></div></div><div class="a" style="left:440px;top:125px;width:27px;height:27px;background:#f0f0f0;"><div class="a" style="left:0;top:0;width:27px;height:1px;background:#fff"></div><div class="a" style="left:0;top:0;width:1px;height:27px;background:#fff"></div><div class="a" style="left:25px;top:1px;width:1px;height:25px;background:#a0a0a0"></div><div class="a" style="left:1px;top:25px;width:25px;height:1px;background:#a0a0a0"></div><div class="a" style="left:26px;top:0;width:1px;height:27px;background:#696969"></div><div class="a" style="left:0;top:26px;width:27px;height:1px;background:#696969"></div></div><div class="a" style="left:467px;top:125px;width:27px;height:27px;background:#f0f0f0;"><div class="a" style="left:0;top:0;width:27px;height:1px;background:#fff"></div><div class="a" style="left:0;top:0;width:1px;height:27px;background:#fff"></div><div class="a" style="left:25px;top:1px;width:1px;height:25px;background:#a0a0a0"></div><div class="a" style="left:1px;top:25px;width:25px;height:1px;background:#a0a0a0"></div><div class="a" style="left:26px;top:0;width:1px;height:27px;background:#696969"></div><div class="a" style="left:0;top:26px;width:27px;height:1px;background:#696969"></div></div><div class="a" style="left:502px;top:125px;width:27px;height:27px;background:#f0f0f0;"><div class="a" style="left:0;top:0;width:27px;height:1px;background:#fff"></div><div class="a" style="left:0;top:0;width:1px;height:27px;background:#fff"></div><div class="a" style="left:25px;top:1px;width:1px;height:25px;background:#a0a0a0"></div><div class="a" style="left:1px;top:25px;width:25px;height:1px;background:#a0a0a0"></div><div class="a" style="left:26px;top:0;width:1px;height:27px;background:#696969"></div><div class="a" style="left:0;top:26px;width:27px;height:1px;background:#696969"></div></div><div class="a" style="left:529px;top:125px;width:27px;height:27px;background:#f0f0f0;"><div class="a" style="left:0;top:0;width:27px;height:1px;background:#fff"></div><div class="a" style="left:0;top:0;width:1px;height:27px;background:#fff"></div><div class="a" style="left:25px;top:1px;width:1px;height:25px;background:#a0a0a0"></div><div class="a" style="left:1px;top:25px;width:25px;height:1px;background:#a0a0a0"></div><div class="a" style="left:26px;top:0;width:1px;height:27px;background:#696969"></div><div class="a" style="left:0;top:26px;width:27px;height:1px;background:#696969"></div></div><div class="a" style="left:556px;top:125px;width:27px;height:27px;background:#f0f0f0;"><div class="a" style="left:0;top:0;width:27px;height:1px;background:#fff"></div><div class="a" style="left:0;top:0;width:1px;height:27px;background:#fff"></div><div class="a" style="left:25px;top:1px;width:1px;height:25px;background:#a0a0a0"></div><div class="a" style="left:1px;top:25px;width:25px;height:1px;background:#a0a0a0"></div><div class="a" style="left:26px;top:0;width:1px;height:27px;background:#696969"></div><div class="a" style="left:0;top:26px;width:27px;height:1px;background:#696969"></div></div><div class="a" style="left:583px;top:125px;width:27px;height:27px;background:#f0f0f0;"><div class="a" style="left:0;top:0;width:27px;height:1px;background:#fff"></div><div class="a" style="left:0;top:0;width:1px;height:27px;background:#fff"></div><div class="a" style="left:25px;top:1px;width:1px;height:25px;background:#a0a0a0"></div><div class="a" style="left:1px;top:25px;width:25px;height:1px;background:#a0a0a0"></div><div class="a" style="left:26px;top:0;width:1px;height:27px;background:#696969"></div><div class="a" style="left:0;top:26px;width:27px;height:1px;background:#696969"></div></div><div class="a" style="left:610px;top:125px;width:27px;height:27px;background:#f0f0f0;"><div class="a" style="left:0;top:0;width:27px;height:1px;background:#fff"></div><div class="a" style="left:0;top:0;width:1px;height:27px;background:#fff"></div><div class="a" style="left:25px;top:1px;width:1px;height:25px;background:#a0a0a0"></div><div class="a" style="left:1px;top:25px;width:25px;height:1px;background:#a0a0a0"></div><div class="a" style="left:26px;top:0;width:1px;height:27px;background:#696969"></div><div class="a" style="left:0;top:26px;width:27px;height:1px;background:#696969"></div></div><svg class="a" style="left:214px;top:130px;shape-rendering:crispEdges" width="13" height="15" viewBox="0 0 13 15"><rect x="4" y="0" width="5" height="1" fill="#808000"/><rect x="2" y="1" width="2" height="1" fill="#808000"/><rect x="4" y="1" width="5" height="1" fill="#ffff00"/><rect x="9" y="1" width="2" height="1" fill="#000"/><rect x="1" y="2" width="1" height="1" fill="#808000"/><rect x="2" y="2" width="9" height="1" fill="#ffff00"/><rect x="11" y="2" width="1" height="1" fill="#000"/><rect x="0" y="3" width="1" height="1" fill="#808000"/><rect x="1" y="3" width="4" height="1" fill="#ffff00"/><rect x="5" y="3" width="3" height="1" fill="#000"/><rect x="8" y="3" width="4" height="1" fill="#ffff00"/><rect x="12" y="3" width="1" height="1" fill="#000"/><rect x="0" y="4" width="1" height="1" fill="#808000"/><rect x="1" y="4" width="3" height="1" fill="#ffff00"/><rect x="4" y="4" width="1" height="1" fill="#000"/><rect x="8" y="4" width="1" height="1" fill="#000"/><rect x="9" y="4" width="3" height="1" fill="#ffff00"/><rect x="12" y="4" width="1" height="1" fill="#000"/><rect x="1" y="5" width="3" height="1" fill="#000"/><rect x="8" y="5" width="1" height="1" fill="#000"/><rect x="9" y="5" width="3" height="1" fill="#ffff00"/><rect x="12" y="5" width="1" height="1" fill="#000"/><rect x="6" y="6" width="1" height="1" fill="#808000"/><rect x="7" y="6" width="4" height="1" fill="#ffff00"/><rect x="11" y="6" width="1" height="1" fill="#000"/><rect x="5" y="7" width="1" height="1" fill="#808000"/><rect x="6" y="7" width="4" height="1" fill="#ffff00"/><rect x="10" y="7" width="1" height="1" fill="#000"/><rect x="5" y="8" width="1" height="1" fill="#808000"/><rect x="6" y="8" width="3" height="1" fill="#ffff00"/><rect x="9" y="8" width="1" height="1" fill="#000"/><rect x="5" y="9" width="1" height="1" fill="#808000"/><rect x="6" y="9" width="3" height="1" fill="#ffff00"/><rect x="9" y="9" width="1" height="1" fill="#000"/><rect x="6" y="10" width="3" height="1" fill="#000"/><rect x="5" y="11" width="4" height="1" fill="#808000"/><rect x="9" y="11" width="1" height="1" fill="#000"/><rect x="5" y="12" width="1" height="1" fill="#808000"/><rect x="6" y="12" width="4" height="1" fill="#ffff00"/><rect x="10" y="12" width="1" height="1" fill="#000"/><rect x="5" y="13" width="1" height="1" fill="#808000"/><rect x="6" y="13" width="4" height="1" fill="#ffff00"/><rect x="10" y="13" width="1" height="1" fill="#000"/><rect x="6" y="14" width="5" height="1" fill="#000"/></svg><svg class="a" style="left:240px;top:131px;shape-rendering:crispEdges" width="16" height="14" viewBox="0 0 16 14"><rect x="5" y="0" width="9" height="1" fill="#000"/><rect x="4" y="1" width="1" height="1" fill="#000"/><rect x="5" y="1" width="8" height="1" fill="#fff"/><rect x="13" y="1" width="1" height="1" fill="#000"/><rect x="4" y="2" width="1" height="1" fill="#000"/><rect x="5" y="2" width="1" height="1" fill="#fff"/><rect x="6" y="2" width="6" height="1" fill="#000"/><rect x="12" y="2" width="1" height="1" fill="#fff"/><rect x="13" y="2" width="1" height="1" fill="#000"/><rect x="3" y="3" width="1" height="1" fill="#000"/><rect x="4" y="3" width="8" height="1" fill="#fff"/><rect x="12" y="3" width="1" height="1" fill="#000"/><rect x="3" y="4" width="1" height="1" fill="#000"/><rect x="4" y="4" width="1" height="1" fill="#fff"/><rect x="5" y="4" width="6" height="1" fill="#000"/><rect x="11" y="4" width="1" height="1" fill="#fff"/><rect x="12" y="4" width="3" height="1" fill="#000"/><rect x="2" y="5" width="1" height="1" fill="#000"/><rect x="3" y="5" width="9" height="1" fill="#fff"/><rect x="12" y="5" width="1" height="1" fill="#000"/><rect x="13" y="5" width="2" height="1" fill="#fff"/><rect x="15" y="5" width="1" height="1" fill="#000"/><rect x="1" y="6" width="12" height="1" fill="#000"/><rect x="13" y="6" width="2" height="1" fill="#fff"/><rect x="15" y="6" width="1" height="1" fill="#000"/><rect x="0" y="7" width="1" height="1" fill="#000"/><rect x="1" y="7" width="11" height="1" fill="#c0c0c0"/><rect x="12" y="7" width="1" height="1" fill="#000"/><rect x="13" y="7" width="2" height="1" fill="#fff"/><rect x="15" y="7" width="1" height="1" fill="#000"/><rect x="0" y="8" width="13" height="1" fill="#000"/><rect x="13" y="8" width="1" height="1" fill="#fff"/><rect x="14" y="8" width="2" height="1" fill="#000"/><rect x="0" y="9" width="1" height="1" fill="#000"/><rect x="1" y="9" width="5" height="1" fill="#c0c0c0"/><rect x="6" y="9" width="3" height="1" fill="#ff0000"/><rect x="9" y="9" width="3" height="1" fill="#c0c0c0"/><rect x="12" y="9" width="1" height="1" fill="#000"/><rect x="13" y="9" width="2" height="1" fill="#fff"/><rect x="15" y="9" width="1" height="1" fill="#000"/><rect x="0" y="10" width="1" height="1" fill="#000"/><rect x="1" y="10" width="5" height="1" fill="#c0c0c0"/><rect x="6" y="10" width="3" height="1" fill="#ff0000"/><rect x="9" y="10" width="3" height="1" fill="#c0c0c0"/><rect x="12" y="10" width="1" height="1" fill="#000"/><rect x="13" y="10" width="1" height="1" fill="#fff"/><rect x="14" y="10" width="1" height="1" fill="#000"/><rect x="0" y="11" width="13" height="1" fill="#000"/><rect x="13" y="11" width="1" height="1" fill="#fff"/><rect x="14" y="11" width="1" height="1" fill="#000"/><rect x="1" y="12" width="1" height="1" fill="#000"/><rect x="2" y="12" width="10" height="1" fill="#c0c0c0"/><rect x="12" y="12" width="2" height="1" fill="#000"/><rect x="2" y="13" width="11" height="1" fill="#000"/></svg><svg class="a" style="left:264px;top:127px;" width="21" height="19" viewBox="0 0 21 19"><path d="M10.5 1L13 7.3L20 7.5L14.5 11.6L16.5 18L10.5 14.3L4.5 18L6.5 11.6L1 7.5L8 7.3z" fill="#ffff00" stroke="#000" stroke-width="1.1"/></svg><svg class="a" style="left:300px;top:129px;shape-rendering="crispEdges"" width="21" height="19" viewBox="0 0 21 19"><rect x="0.5" y="0.5" width="20" height="18" fill="#fff" stroke="#000"/><path d="M7.5 0v19M13.5 0v19M0 9.5h21" stroke="#000"/><rect x="2" y="2" width="5" height="3" fill="#ff0000"/><rect x="2" y="5" width="3" height="2" fill="#ffff00"/><rect x="5" y="5" width="2" height="3" fill="#00c000"/><rect x="2" y="7" width="3" height="2" fill="#00c000"/><circle cx="10.5" cy="5" r="2.3" fill="#000"/><circle cx="17" cy="5" r="2.3" fill="#000"/><path d="M1.5 12q3 3 5.5 4" stroke="#ff0000" fill="none"/><path d="M9 11.5h4M9 13.5h4M9 15.5h4M15 11.5h4M15 13.5h4M15 15.5h4" stroke="#000" stroke-dasharray="1 1"/></svg><svg class="a" style="left:328px;top:129px;" width="18" height="18" viewBox="0 0 18 18"><circle cx="9" cy="9" r="8" fill="#ffff00"/><path d="M9 9L1 9A8 8 0 0 1 9 1z" fill="#0000ff"/><path d="M9 9L9 1A8 8 0 0 1 14.6 3.3z" fill="#ff00ff"/><path d="M9 9L14.6 3.3A8 8 0 0 1 17 9z" fill="#ff0000"/><path d="M9 9L17 9A8 8 0 0 1 11 16.7z" fill="#00ff00"/><circle cx="12.5" cy="8.5" r="2" fill="#000"/><circle cx="9" cy="9" r="8" fill="none" stroke="#000" stroke-width="1.2"/></svg><svg class="a" style="left:356px;top:130px;" width="19" height="19" viewBox="0 0 19 19"><circle cx="9" cy="9.5" r="8.5" fill="#a0a0a0"/><path d="M12 2v7M8.5 5.5h7" stroke="#fff" stroke-width="2"/></svg><div class="t" style="left:382px;top:130px;font-size:9px;color:#ff0000;font-weight:normal;font-family:'Liberation Sans',sans-serif;">-5</div><div class="t" style="left:390px;top:139px;font-size:9px;color:#ff0000;font-weight:normal;font-family:'Liberation Sans',sans-serif;">-12</div><svg class="a" style="left:382px;top:130px;" width="18" height="15" viewBox="0 0 18 15"><circle cx="13.5" cy="3.5" r="2" fill="none" stroke="#000" stroke-width="1.2"/><circle cx="3.5" cy="11.5" r="2" fill="none" stroke="#000" stroke-width="1.2"/></svg><svg class="a" style="left:416px;top:129px;shape-rendering="crispEdges"" width="21" height="18" viewBox="0 0 21 18"><rect x="0.5" y="0.5" width="20" height="17" fill="#fff" stroke="#000" stroke-width="1.2"/><path d="M7.5 0v18M13.5 0v18M0 9h21" stroke="#000"/><circle cx="4" cy="5" r="2.5" fill="#000"/><circle cx="10.5" cy="5" r="2.3" fill="none" stroke="#000"/><circle cx="17" cy="5" r="2.3" fill="none" stroke="#000"/><circle cx="10.5" cy="13.5" r="2.3" fill="#808080" stroke="#000"/><circle cx="17" cy="13.5" r="2.3" fill="#808080" stroke="#000"/><path d="M2 11.5h4M2 13.5h4M2 15.5h4" stroke="#000" stroke-dasharray="1 1"/></svg><svg class="a" style="left:444px;top:129px;" width="18" height="18" viewBox="0 0 18 18"><circle cx="9" cy="9" r="8" fill="#fff" stroke="#000" stroke-width="1.3"/><path d="M1 9A8 8 0 0 1 17 9q-4-2-8 0t-8 0z" fill="#000"/><path d="M13 3q2 2 1 5" stroke="#808080" stroke-width="2" fill="none"/><circle cx="12.5" cy="10" r="2" fill="#000"/></svg><svg class="a" style="left:470px;top:130px;" width="19" height="15" viewBox="0 0 19 15"><path d="M9.5 0L13 4H6z" fill="#ffff00"/><path d="M6 4H13L15 7H4z" fill="#00ff00"/><path d="M4 7H15L17 10H2z" fill="#008000"/><path d="M2 10H17L19 12.5L9.5 15L0 12.5z" fill="#800000"/><path d="M0 12.5L9.5 15L19 12.5L17 14.5L9.5 15.5L2 14.5z" fill="#000"/></svg><svg class="a" style="left:505px;top:128px;" width="21" height="21" viewBox="0 0 21 21"><circle cx="8" cy="8" r="6.6" fill="#f0f0f0" stroke="#000" stroke-width="2"/><path d="M12.8 12.8L19 18.8" stroke="#000" stroke-width="3"/><rect x="5" y="7" width="6" height="2.5" fill="#ff0000"/><rect x="6.8" y="5" width="2.5" height="6.5" fill="#ff0000"/></svg><svg class="a" style="left:532px;top:128px;" width="21" height="21" viewBox="0 0 21 21"><circle cx="8" cy="8" r="6.6" fill="#f0f0f0" stroke="#000" stroke-width="2"/><path d="M12.8 12.8L19 18.8" stroke="#000" stroke-width="3"/><rect x="5" y="7" width="6" height="2.5" fill="#ff0000"/></svg><svg class="a" style="left:559px;top:129px;" width="20" height="18" viewBox="0 0 20 18"><circle cx="9.5" cy="8.5" r="8" fill="none" stroke="#a0a0a0"/><path d="M1 8.5h17" stroke="#ff0000" stroke-width="1.5"/><path d="M0 8.5l3.5-3v6zM19 8.5l-3.5-3v6z" fill="#ff0000"/><path d="M9.5 2v12" stroke="#008000" stroke-width="1.5"/><path d="M9.5 0.5l-2.8 3h5.6zM9.5 15.5l-2.8-3h5.6z" fill="#008000"/></svg><svg class="a" style="left:585px;top:127px;" width="22" height="22" viewBox="0 0 22 22"><circle cx="5" cy="6.5" r="3" fill="none" stroke="#008000" stroke-width="2.2"/><path d="M1 20L20 1" stroke="#000" stroke-width="1.1"/><rect x="10" y="14" width="5" height="2" fill="#008000"/><path d="M13 11.5q1-3.5 4-3.5t3.5 3q0 2-3 4.5l-3 3h6" fill="none" stroke="#008000" stroke-width="2.2"/></svg><svg class="a" style="left:613px;top:128px;shape-rendering="crispEdges"" width="21" height="20" viewBox="0 0 21 20"><rect width="21" height="20" fill="#00ff00"/><path d="M21 0V20H0z" fill="#008000"/><path d="M0.5 19.5L20.5 0.5" stroke="#fff" stroke-width="0.9"/></svg><div class="a" style="left:231px;top:167px;width:361px;height:393px;background:#c0c0c0;border-top:1px solid #a0a0a0;border-left:1px solid #a0a0a0;border-right:1px solid #fff;border-bottom:1px solid #fff"></div><div class="a" style="left:232px;top:168px;width:359px;height:391px;border-top:1px solid #696969;border-left:1px solid #696969;border-right:1px solid #f0f0f0;border-bottom:1px solid #f0f0f0"></div><div class="a" style="left:610px;top:167px;width:174px;height:187px;background:#c0c0c0;border-top:1px solid #a0a0a0;border-left:1px solid #a0a0a0;border-right:1px solid #fff;border-bottom:1px solid #fff"></div><div class="a" style="left:611px;top:168px;width:172px;height:185px;border-top:1px solid #696969;border-left:1px solid #696969;border-right:1px solid #f0f0f0;border-bottom:1px solid #f0f0f0"></div><div class="a" style="left:610px;top:372px;width:174px;height:188px;background:#c0c0c0;border-top:1px solid #a0a0a0;border-left:1px solid #a0a0a0;border-right:1px solid #fff;border-bottom:1px solid #fff"></div><div class="a" style="left:611px;top:373px;width:172px;height:186px;border-top:1px solid #696969;border-left:1px solid #696969;border-right:1px solid #f0f0f0;border-bottom:1px solid #f0f0f0"></div><svg class="a" style="left:233px;top:169px" width="357" height="388" viewBox="233 169 357 388"><defs>
<pattern id="pDG" width="4" height="4" patternUnits="userSpaceOnUse"><rect width="4" height="4" fill="#00a000"/><rect x="1" y="1" width="2" height="1" fill="#000"/></pattern>
<pattern id="pLG" width="8" height="8" patternUnits="userSpaceOnUse"><rect width="8" height="8" fill="#80be1a"/><rect x="1" y="1" width="2" height="1" fill="#000"/><rect x="5" y="5" width="2" height="1" fill="#000"/></pattern>
<pattern id="pOR" width="4" height="2" patternUnits="userSpaceOnUse"><rect width="4" height="2" fill="#b85e00"/><rect x="1" y="1" width="2" height="1" fill="#000"/></pattern>
<pattern id="pRD" width="4" height="2" patternUnits="userSpaceOnUse"><rect width="4" height="2" fill="#000"/><rect x="3" y="0" width="2" height="1" fill="#b80000"/><rect x="-1" y="0" width="2" height="1" fill="#b80000"/><rect x="1" y="1" width="2" height="1" fill="#b80000"/></pattern>
<pattern id="pMB" width="8" height="4" patternUnits="userSpaceOnUse"><rect width="8" height="4" fill="#000"/><rect x="1" y="0" width="2" height="1" fill="#c00080"/><rect x="5" y="2" width="2" height="1" fill="#c00080"/></pattern>
<clipPath id="circ"><path d="M446 232 L446 237 L460 237 L460 241 L475 241 L475 246 L484 246 L484 251 L489 251 L489 256 L499 256 L499 261 L504 261 L504 265 L508 265 L508 270 L513 270 L513 275 L518 275 L518 280 L523 280 L523 284 L527 284 L527 289 L532 289 L532 294 L532 294 L532 299 L537 299 L537 304 L542 304 L542 308 L542 308 L542 313 L547 313 L547 318 L547 318 L547 323 L547 323 L547 328 L551 328 L551 332 L551 332 L551 337 L551 337 L551 342 L556 342 L556 347 L556 347 L556 352 L556 352 L556 356 L556 356 L556 361 L556 361 L556 366 L556 366 L556 371 L556 371 L556 376 L556 376 L556 380 L556 380 L556 385 L556 385 L556 390 L556 390 L556 395 L556 395 L556 399 L556 399 L556 404 L556 404 L556 409 L551 409 L551 414 L551 414 L551 419 L551 419 L551 423 L547 423 L547 428 L547 428 L547 433 L547 433 L547 438 L542 438 L542 443 L542 443 L542 447 L537 447 L537 452 L532 452 L532 457 L532 457 L532 462 L527 462 L527 467 L523 467 L523 471 L518 471 L518 476 L513 476 L513 481 L508 481 L508 486 L504 486 L504 490 L499 490 L499 495 L489 495 L489 500 L484 500 L484 505 L475 505 L475 510 L460 510 L460 514 L446 514 L446 519 L379 519 L379 514 L365 514 L365 510 L350 510 L350 505 L341 505 L341 500 L336 500 L336 495 L326 495 L326 490 L321 490 L321 486 L317 486 L317 481 L312 481 L312 476 L307 476 L307 471 L302 471 L302 467 L298 467 L298 462 L293 462 L293 457 L293 457 L293 452 L288 452 L288 447 L283 447 L283 443 L283 443 L283 438 L278 438 L278 433 L278 433 L278 428 L278 428 L278 423 L274 423 L274 419 L274 419 L274 414 L274 414 L274 409 L269 409 L269 404 L269 404 L269 399 L269 399 L269 395 L269 395 L269 390 L269 390 L269 385 L269 385 L269 380 L269 380 L269 376 L269 376 L269 371 L269 371 L269 366 L269 366 L269 361 L269 361 L269 356 L269 356 L269 352 L269 352 L269 347 L269 347 L269 342 L274 342 L274 337 L274 337 L274 332 L274 332 L274 328 L278 328 L278 323 L278 323 L278 318 L278 318 L278 313 L283 313 L283 308 L283 308 L283 304 L288 304 L288 299 L293 299 L293 294 L293 294 L293 289 L298 289 L298 284 L302 284 L302 280 L307 280 L307 275 L312 275 L312 270 L317 270 L317 265 L321 265 L321 261 L326 261 L326 256 L336 256 L336 251 L341 251 L341 246 L350 246 L350 241 L365 241 L365 237 L379 237 L379 232Z"/></clipPath></defs><g clip-path="url(#circ)"><rect x="260" y="220" width="310" height="310" fill="url(#pDG)"/><path d="M342.7 248.0 L342.7 242.0 L362.1 242.0 L362.1 237.0 L376.9 237.0 L376.9 222.0 L406.0 222.0 L406.0 242.8 L401.5 242.8 L401.5 258.3 L396.3 258.3 L396.3 262.1 L367.3 262.1 L367.3 252.5 L353.1 252.5 L353.1 248.0Z" fill="url(#pLG)"/><path d="M396.3 291.2 L400.8 291.2 L400.8 329.7 L396.3 329.7Z" fill="url(#pLG)"/><path d="M396.3 363.2 L400.8 363.2 L400.8 377.0 L396.3 377.0Z" fill="url(#pLG)"/><path d="M260.0 344.5 L280.5 344.5 L280.5 349.0 L310.2 349.0 L310.2 334.2 L323.7 334.2 L323.7 362.6 L260.0 362.6Z" fill="url(#pLG)"/><path d="M329.5 410.1 L338.5 410.1 L338.5 405.0 L366.6 405.0 L366.6 419.8 L382.1 419.8 L382.1 424.3 L386.0 424.3 L386.0 433.4 L390.5 433.4 L390.5 448.0 L386.0 448.0 L386.0 452.5 L382.1 452.5 L382.1 457.7 L366.6 457.7 L366.6 452.5 L354.4 452.5 L348.0 448.0 L348.0 433.4 L338.5 433.4 L338.5 419.8 L329.5 419.8Z" fill="url(#pLG)"/><path d="M382.1 376.6 L400.8 376.6 L400.8 381.1 L406.0 381.1 L406.0 401.1 L396.3 401.1 L396.3 390.8 L382.1 390.8Z" fill="url(#pLG)"/><path d="M423.7 410.1 L452.7 410.1 L452.7 419.8 L423.7 419.8Z" fill="url(#pLG)"/><path d="M443.1 468.0 L452.7 468.0 L452.7 462.8 L481.0 462.8 L481.0 491.9 L452.7 491.9 L452.7 476.4 L443.1 476.4Z" fill="url(#pLG)"/><path d="M366.6 497.0 L382.1 497.0 L382.1 506.0 L386.0 506.0 L386.0 530.0 L377.6 530.0 L377.6 511.2 L366.6 511.2Z" fill="url(#pLG)"/><path d="M411.0 220.0 L600.0 220.0 L600.0 376.0 L411.0 376.0Z" fill="#000"/><path d="M469.5 376.0 L505.8 376.0 L504.5 390.8 L499.4 397.2 L490.3 401.7 L480.0 403.7 L477.3 398.5 L472.1 390.8 L469.5 381.7Z" fill="#000"/><path d="M424.0 220.0 L485.0 220.0 L485.0 243.0 L467.0 243.0 L467.0 257.0 L450.0 257.0 L450.0 265.0 L448.0 265.0 L448.0 300.0 L462.0 300.0 L462.0 310.0 L465.7 316.4 L469.8 322.5 L472.8 328.6 L476.0 334.0 L482.0 328.0 L490.0 328.0 L497.0 325.0 L504.0 319.0 L523.0 319.0 L534.0 326.0 L537.0 333.0 L547.0 341.0 L555.0 344.0 L600.0 344.0 L600.0 376.0 L472.0 376.0 L472.0 343.0 L468.7 333.7 L465.7 323.5 L460.6 320.5 L450.4 315.4 L438.0 313.0 L438.0 283.0 L433.0 283.0 L433.0 246.0 L424.0 246.0Z" fill="url(#pMB)"/><path d="M418.0 246.0 L433.0 246.0 L433.0 283.0 L438.0 283.0 L438.0 313.0 L450.4 315.4 L460.6 320.5 L465.7 323.5 L468.7 333.7 L472.8 343.9 L480.0 346.0 L480.0 376.0 L412.0 376.0 L412.0 246.0Z" fill="url(#pRD)"/><path d="M480.0 346.0 L487.0 348.0 L495.5 348.0 L504.5 354.0 L504.5 368.0 L480.0 368.0Z" fill="url(#pRD)"/><path d="M459.0 372.0 L600.0 372.0 L600.0 380.5 L544.5 380.5 L544.5 391.0 L509.7 391.0 L509.7 401.0 L499.4 405.0 L490.3 409.0 L485.0 411.4 L485.0 403.7 L477.3 398.5 L472.1 391.0 L472.1 376.0 L459.0 376.0Z" fill="url(#pRD)"/><path d="M418.0 335.0 L448.0 335.0 L448.0 343.0 L452.0 352.0 L448.0 370.0 L417.0 370.0 L417.0 354.0Z" fill="url(#pMB)"/><path d="M411.0 220.0 L424.0 220.0 L424.0 246.0 L418.0 246.0 L418.0 266.0 L424.0 266.0 L424.0 290.0 L429.0 290.0 L429.0 307.0 L424.0 307.0 L424.0 315.0 L418.0 315.0 L418.0 328.0 L413.0 328.0 L413.0 376.0 L407.0 376.0 L407.0 332.0 L410.0 332.0 L410.0 307.0 L414.0 307.0 L414.0 295.0 L411.0 295.0Z" fill="url(#pOR)"/><path d="M412.7 376.0 L461.8 376.0 L461.8 390.8 L469.5 399.8 L477.3 403.7 L482.4 407.5 L485.0 411.4 L485.0 415.3 L481.1 415.3 L466.9 410.1 L459.2 402.4 L456.6 393.4 L456.6 386.0 L412.7 386.0Z" fill="url(#pOR)"/><path d="M509.7 390.8 L544.5 390.8 L544.5 380.5 L600.0 380.5 L600.0 400.0 L554.8 408.8 L549.7 423.0 L541.9 439.8 L525.2 462.6 L520.0 462.6 L520.0 449.0 L509.7 449.0 L509.7 415.3 L480.0 415.3 L480.0 408.8 L490.3 408.8 L499.4 405.0 L509.7 401.1Z" fill="url(#pOR)"/><path d="M424.0 376.0 L437.0 376.0 L437.0 380.5 L424.0 380.5Z" fill="url(#pRD)"/><path d="M459.8 375.0 L509.5 375.0 L509.5 398.0 L496.7 408.0 L481.4 411.0 L468.7 403.0 L459.8 390.4Z" fill="url(#pRD)"/><path d="M465.0 375.0 L506.0 375.0 L506.0 396.0 L494.0 406.0 L480.0 407.0 L469.0 400.0 L463.0 390.0Z" fill="url(#pMB)"/><path d="M470.0 375.0 L502.0 375.0 L502.0 394.0 L491.6 401.0 L479.0 401.0 L471.0 393.0Z" fill="#000"/><path d="M509.7 415.3 L525.2 415.3 L525.2 419.8 L509.7 419.8Z" fill="url(#pDG)"/><path d="M453 326h4v4h5v4h-5v5h-4v-5h-5v-4h5z" fill="url(#pOR)"/><path d="M480 355h4v4h6v4h-6v4h-4v-4h-6v-4h6z" fill="url(#pOR)"/></g><circle cx="412.5" cy="375.5" r="47.5" fill="none" stroke="#808080" stroke-width="1"/><circle cx="412.5" cy="375.5" r="95" fill="none" stroke="#808080" stroke-width="1"/><circle cx="412.5" cy="375.5" r="144.3" fill="none" stroke="#808080" stroke-width="1"/><path d="M412.5 229V521M267 375.5H558" stroke="#808080" stroke-width="1"/><rect x="410" y="228" width="6" height="3" fill="url(#pDG)"/><rect x="410" y="518" width="6" height="3" fill="url(#pDG)"/><rect x="266" y="372" width="3" height="6" fill="url(#pDG)"/><rect x="556" y="371" width="3" height="6" fill="url(#pRD)"/><path d="M367 245h3v1h-3zM367 249h3v1h-3zM366 246h1v3h-1zM370 246h1v3h-1z" fill="#fff" shape-rendering="crispEdges"/><path d="M396 245h3v1h-3zM396 249h3v1h-3zM395 246h1v3h-1zM399 246h1v3h-1z" fill="#fff" shape-rendering="crispEdges"/><text x="424.5" y="250.0" font-family="Liberation Sans" font-size="10" fill="#fff" text-anchor="middle">-15</text><text x="453.2" y="250.0" font-family="Liberation Sans" font-size="10" fill="#fff" text-anchor="middle">-15</text><path d="M338 274h3v1h-3zM338 278h3v1h-3zM337 275h1v3h-1zM341 275h1v3h-1z" fill="#fff" shape-rendering="crispEdges"/><path d="M367 274h3v1h-3zM367 278h3v1h-3zM366 275h1v3h-1zM370 275h1v3h-1z" fill="#fff" shape-rendering="crispEdges"/><path d="M396 274h3v1h-3zM396 278h3v1h-3zM395 275h1v3h-1zM399 275h1v3h-1z" fill="#fff" shape-rendering="crispEdges"/><text x="424.5" y="278.6" font-family="Liberation Sans" font-size="10" fill="#fff" text-anchor="middle">-11</text><text x="453.2" y="278.6" font-family="Liberation Sans" font-size="10" fill="#fff" text-anchor="middle">-25</text><text x="481.9" y="278.6" font-family="Liberation Sans" font-size="10" fill="#fff" text-anchor="middle">-24</text><path d="M310 302h3v1h-3zM310 306h3v1h-3zM309 303h1v3h-1zM313 303h1v3h-1z" fill="#fff" shape-rendering="crispEdges"/><path d="M338 302h3v1h-3zM338 306h3v1h-3zM337 303h1v3h-1zM341 303h1v3h-1z" fill="#fff" shape-rendering="crispEdges"/><path d="M367 302h3v1h-3zM367 306h3v1h-3zM366 303h1v3h-1zM370 303h1v3h-1z" fill="#fff" shape-rendering="crispEdges"/><path d="M396 302h3v1h-3zM396 306h3v1h-3zM395 303h1v3h-1zM399 303h1v3h-1z" fill="#fff" shape-rendering="crispEdges"/><text x="424.5" y="307.3" font-family="Liberation Sans" font-size="10" fill="#fff" text-anchor="middle">-9</text><text x="453.2" y="307.3" font-family="Liberation Sans" font-size="10" fill="#fff" text-anchor="middle">-24</text><text x="481.9" y="307.3" font-family="Liberation Sans" font-size="10" fill="#fff" text-anchor="middle">-27</text><text x="510.6" y="307.3" font-family="Liberation Sans" font-size="10" fill="#fff" text-anchor="middle">-29</text><path d="M281 331h3v1h-3zM281 335h3v1h-3zM280 332h1v3h-1zM284 332h1v3h-1z" fill="#fff" shape-rendering="crispEdges"/><path d="M310 331h3v1h-3zM310 335h3v1h-3zM309 332h1v3h-1zM313 332h1v3h-1z" fill="#fff" shape-rendering="crispEdges"/><path d="M338 331h3v1h-3zM338 335h3v1h-3zM337 332h1v3h-1zM341 332h1v3h-1z" fill="#fff" shape-rendering="crispEdges"/><path d="M367 331h3v1h-3zM367 335h3v1h-3zM366 332h1v3h-1zM370 332h1v3h-1z" fill="#fff" shape-rendering="crispEdges"/><path d="M396 331h3v1h-3zM396 335h3v1h-3zM395 332h1v3h-1zM399 332h1v3h-1z" fill="#fff" shape-rendering="crispEdges"/><text x="424.5" y="335.9" font-family="Liberation Sans" font-size="10" fill="#fff" text-anchor="middle">-16</text><text x="453.2" y="335.9" font-family="Liberation Sans" font-size="10" fill="#fff" text-anchor="middle">-7</text><text x="481.9" y="335.9" font-family="Liberation Sans" font-size="10" fill="#fff" text-anchor="middle">-23</text><text x="510.6" y="335.9" font-family="Liberation Sans" font-size="10" fill="#fff" text-anchor="middle">-13</text><text x="539.2" y="335.9" font-family="Liberation Sans" font-size="10" fill="#fff" text-anchor="middle">-21</text><path d="M281 360h3v1h-3zM281 364h3v1h-3zM280 361h1v3h-1zM284 361h1v3h-1z" fill="#fff" shape-rendering="crispEdges"/><path d="M310 360h3v1h-3zM310 364h3v1h-3zM309 361h1v3h-1zM313 361h1v3h-1z" fill="#fff" shape-rendering="crispEdges"/><path d="M338 360h3v1h-3zM338 364h3v1h-3zM337 361h1v3h-1zM341 361h1v3h-1z" fill="#fff" shape-rendering="crispEdges"/><path d="M367 360h3v1h-3zM367 364h3v1h-3zM366 361h1v3h-1zM370 361h1v3h-1z" fill="#fff" shape-rendering="crispEdges"/><path d="M396 360h3v1h-3zM396 364h3v1h-3zM395 361h1v3h-1zM399 361h1v3h-1z" fill="#fff" shape-rendering="crispEdges"/><text x="424.5" y="364.6" font-family="Liberation Sans" font-size="10" fill="#fff" text-anchor="middle">-25</text><text x="453.2" y="364.6" font-family="Liberation Sans" font-size="10" fill="#fff" text-anchor="middle">-14</text><text x="481.9" y="364.6" font-family="Liberation Sans" font-size="10" fill="#fff" text-anchor="middle">-8</text><text x="510.6" y="364.6" font-family="Liberation Sans" font-size="10" fill="#fff" text-anchor="middle">-18</text><text x="539.2" y="364.6" font-family="Liberation Sans" font-size="10" fill="#fff" text-anchor="middle">-19</text><path d="M281 388h3v1h-3zM281 392h3v1h-3zM280 389h1v3h-1zM284 389h1v3h-1z" fill="#fff" shape-rendering="crispEdges"/><path d="M310 388h3v1h-3zM310 392h3v1h-3zM309 389h1v3h-1zM313 389h1v3h-1z" fill="#fff" shape-rendering="crispEdges"/><path d="M338 388h3v1h-3zM338 392h3v1h-3zM337 389h1v3h-1zM341 389h1v3h-1z" fill="#fff" shape-rendering="crispEdges"/><path d="M367 388h3v1h-3zM367 392h3v1h-3zM366 389h1v3h-1zM370 389h1v3h-1z" fill="#fff" shape-rendering="crispEdges"/><path d="M396 388h3v1h-3zM396 392h3v1h-3zM395 389h1v3h-1zM399 389h1v3h-1z" fill="#fff" shape-rendering="crispEdges"/><path d="M424 388h3v1h-3zM424 392h3v1h-3zM423 389h1v3h-1zM427 389h1v3h-1z" fill="#fff" shape-rendering="crispEdges"/><path d="M453 388h3v1h-3zM453 392h3v1h-3zM452 389h1v3h-1zM456 389h1v3h-1z" fill="#fff" shape-rendering="crispEdges"/><text x="481.9" y="393.2" font-family="Liberation Sans" font-size="10" fill="#fff" text-anchor="middle">30</text><text x="510.6" y="393.2" font-family="Liberation Sans" font-size="10" fill="#fff" text-anchor="middle">-10</text><text x="539.2" y="393.2" font-family="Liberation Sans" font-size="10" fill="#fff" text-anchor="middle">-9</text><path d="M281 417h3v1h-3zM281 421h3v1h-3zM280 418h1v3h-1zM284 418h1v3h-1z" fill="#fff" shape-rendering="crispEdges"/><path d="M310 417h3v1h-3zM310 421h3v1h-3zM309 418h1v3h-1zM313 418h1v3h-1z" fill="#fff" shape-rendering="crispEdges"/><path d="M338 417h3v1h-3zM338 421h3v1h-3zM337 418h1v3h-1zM341 418h1v3h-1z" fill="#fff" shape-rendering="crispEdges"/><path d="M367 417h3v1h-3zM367 421h3v1h-3zM366 418h1v3h-1zM370 418h1v3h-1z" fill="#fff" shape-rendering="crispEdges"/><path d="M396 417h3v1h-3zM396 421h3v1h-3zM395 418h1v3h-1zM399 418h1v3h-1z" fill="#fff" shape-rendering="crispEdges"/><path d="M424 417h3v1h-3zM424 421h3v1h-3zM423 418h1v3h-1zM427 418h1v3h-1z" fill="#fff" shape-rendering="crispEdges"/><path d="M453 417h3v1h-3zM453 421h3v1h-3zM452 418h1v3h-1zM456 418h1v3h-1z" fill="#fff" shape-rendering="crispEdges"/><path d="M482 417h3v1h-3zM482 421h3v1h-3zM481 418h1v3h-1zM485 418h1v3h-1z" fill="#fff" shape-rendering="crispEdges"/><path d="M511 417h3v1h-3zM511 421h3v1h-3zM510 418h1v3h-1zM514 418h1v3h-1z" fill="#fff" shape-rendering="crispEdges"/><text x="539.2" y="421.9" font-family="Liberation Sans" font-size="10" fill="#fff" text-anchor="middle">-6</text><path d="M310 446h3v1h-3zM310 450h3v1h-3zM309 447h1v3h-1zM313 447h1v3h-1z" fill="#fff" shape-rendering="crispEdges"/><path d="M338 446h3v1h-3zM338 450h3v1h-3zM337 447h1v3h-1zM341 447h1v3h-1z" fill="#fff" shape-rendering="crispEdges"/><path d="M367 446h3v1h-3zM367 450h3v1h-3zM366 447h1v3h-1zM370 447h1v3h-1z" fill="#fff" shape-rendering="crispEdges"/><path d="M396 446h3v1h-3zM396 450h3v1h-3zM395 447h1v3h-1zM399 447h1v3h-1z" fill="#fff" shape-rendering="crispEdges"/><path d="M424 446h3v1h-3zM424 450h3v1h-3zM423 447h1v3h-1zM427 447h1v3h-1z" fill="#fff" shape-rendering="crispEdges"/><path d="M453 446h3v1h-3zM453 450h3v1h-3zM452 447h1v3h-1zM456 447h1v3h-1z" fill="#fff" shape-rendering="crispEdges"/><path d="M482 446h3v1h-3zM482 450h3v1h-3zM481 447h1v3h-1zM485 447h1v3h-1z" fill="#fff" shape-rendering="crispEdges"/><text x="510.6" y="450.5" font-family="Liberation Sans" font-size="10" fill="#fff" text-anchor="middle">-5</text><path d="M338 474h3v1h-3zM338 478h3v1h-3zM337 475h1v3h-1zM341 475h1v3h-1z" fill="#fff" shape-rendering="crispEdges"/><path d="M367 474h3v1h-3zM367 478h3v1h-3zM366 475h1v3h-1zM370 475h1v3h-1z" fill="#fff" shape-rendering="crispEdges"/><path d="M396 474h3v1h-3zM396 478h3v1h-3zM395 475h1v3h-1zM399 475h1v3h-1z" fill="#fff" shape-rendering="crispEdges"/><path d="M424 474h3v1h-3zM424 478h3v1h-3zM423 475h1v3h-1zM427 475h1v3h-1z" fill="#fff" shape-rendering="crispEdges"/><path d="M453 474h3v1h-3zM453 478h3v1h-3zM452 475h1v3h-1zM456 475h1v3h-1z" fill="#fff" shape-rendering="crispEdges"/><path d="M482 474h3v1h-3zM482 478h3v1h-3zM481 475h1v3h-1zM485 475h1v3h-1z" fill="#fff" shape-rendering="crispEdges"/><path d="M367 503h3v1h-3zM367 507h3v1h-3zM366 504h1v3h-1zM370 504h1v3h-1z" fill="#fff" shape-rendering="crispEdges"/><path d="M396 503h3v1h-3zM396 507h3v1h-3zM395 504h1v3h-1zM399 504h1v3h-1z" fill="#fff" shape-rendering="crispEdges"/><path d="M424 503h3v1h-3zM424 507h3v1h-3zM423 504h1v3h-1zM427 504h1v3h-1z" fill="#fff" shape-rendering="crispEdges"/><path d="M453 503h3v1h-3zM453 507h3v1h-3zM452 504h1v3h-1zM456 504h1v3h-1z" fill="#fff" shape-rendering="crispEdges"/><path d="M481 382L486 390H476z" fill="none" stroke="#fff" stroke-width="1"/><circle cx="536.8" cy="500.3" r="22" fill="none" stroke="#808080" stroke-width="1"/><path d="M537 496v5M534 501.5h6" stroke="#00a000" stroke-width="1.6"/></svg><div class="t" style="left:396px;top:195px;font-size:32px;color:#008080;font-weight:normal;font-family:'Liberation Serif',serif;">30°</div><div class="t" style="left:548px;top:219.5px;font-size:29px;color:#008080;font-weight:bold;font-family:'Liberation Sans',sans-serif;">R</div><div class="t" style="left:243.5px;top:538.5px;font-size:11.7px;color:#008080;font-weight:bold;font-family:'Liberation Sans',sans-serif;">Color Defect Map</div><div class="t" style="left:497px;top:538.5px;font-size:11.7px;color:#008080;font-weight:bold;font-family:'Liberation Sans',sans-serif;">Total Deviation</div><svg class="a" style="left:612px;top:169px" width="170" height="183" viewBox="612 169 170 183"><rect x="646" y="183" width="122" height="144" fill="#808080"/><path d="M646 217.5H768" stroke="#c8c8c8" stroke-width="1" stroke-dasharray="4 3" shape-rendering="crispEdges"/><path d="M644 186.5H646" stroke="#000" stroke-width="1"/><path d="M644 217.5H646" stroke="#000" stroke-width="1"/><path d="M644 248.5H646" stroke="#000" stroke-width="1"/><path d="M644 279.5H646" stroke="#000" stroke-width="1"/><path d="M644 310.5H646" stroke="#000" stroke-width="1"/><path d="M646.5 327V330" stroke="#000" stroke-width="1"/><path d="M670.5 327V330" stroke="#000" stroke-width="1"/><path d="M695.5 327V330" stroke="#000" stroke-width="1"/><path d="M719.5 327V330" stroke="#000" stroke-width="1"/><path d="M743.5 327V330" stroke="#000" stroke-width="1"/><path d="M768.5 327V330" stroke="#000" stroke-width="1"/><polyline points="646.0,198.3 652.2,204.5 659.4,204.5 667.9,207.9 674.8,209.1 682.5,211.3 710.3,211.3 717.0,213.5 723.8,214.4 734.5,214.4 742.7,217.2 757.0,218.4 768.2,223.1" fill="none" stroke="#ffff00" stroke-width="1.1"/><polyline points="646.0,211.3 653.5,214.4 663.1,215.6 671.9,218.4 680.5,220.6 690.1,220.6 697.8,221.8 710.3,224.6 718.0,226.5 720.2,226.5 729.4,225.2 740.6,233.6 757.0,249.1 761.0,262.4 769.2,289.1" fill="none" stroke="#ffff00" stroke-width="1.1"/><polyline points="646.0,204.5 648.8,210.1 654.6,210.7 655.5,213.5 665.2,214.1 665.9,216.9 689.2,216.9 690.1,219.7 716.0,219.7 719.0,223.1 728.4,225.2" fill="none" stroke="#fff" stroke-width="2"/><polyline points="728.4,225.2 736.5,235.5 738.7,244.8 741.6,246.9 748.8,264.3 751.8,265.2 755.9,277.6 758.0,288.8 763.0,295.0 766.1,295.9 768.2,307.1" fill="none" stroke="#ff0000" stroke-width="2"/><path d="M664.5 213.2l1 3" stroke="#ff0000" stroke-width="2"/></svg><svg class="a" style="left:637px;top:184px;shape-rendering:crispEdges" width="7" height="5"><rect x="1" y="0" width="1" height="1" fill="#000"/><rect x="3" y="0" width="4" height="1" fill="#000"/><rect x="0" y="1" width="2" height="1" fill="#000"/><rect x="3" y="1" width="1" height="1" fill="#000"/><rect x="6" y="1" width="1" height="1" fill="#000"/><rect x="1" y="2" width="1" height="1" fill="#000"/><rect x="3" y="2" width="1" height="1" fill="#000"/><rect x="6" y="2" width="1" height="1" fill="#000"/><rect x="1" y="3" width="1" height="1" fill="#000"/><rect x="3" y="3" width="1" height="1" fill="#000"/><rect x="6" y="3" width="1" height="1" fill="#000"/><rect x="1" y="4" width="1" height="1" fill="#000"/><rect x="3" y="4" width="4" height="1" fill="#000"/></svg><svg class="a" style="left:640px;top:215px;shape-rendering:crispEdges" width="4" height="5"><rect x="0" y="0" width="4" height="1" fill="#000"/><rect x="0" y="1" width="1" height="1" fill="#000"/><rect x="3" y="1" width="1" height="1" fill="#000"/><rect x="0" y="2" width="1" height="1" fill="#000"/><rect x="3" y="2" width="1" height="1" fill="#000"/><rect x="0" y="3" width="1" height="1" fill="#000"/><rect x="3" y="3" width="1" height="1" fill="#000"/><rect x="0" y="4" width="4" height="1" fill="#000"/></svg><svg class="a" style="left:634px;top:246px;shape-rendering:crispEdges" width="10" height="5"><rect x="4" y="0" width="1" height="1" fill="#000"/><rect x="6" y="0" width="4" height="1" fill="#000"/><rect x="3" y="1" width="2" height="1" fill="#000"/><rect x="6" y="1" width="1" height="1" fill="#000"/><rect x="9" y="1" width="1" height="1" fill="#000"/><rect x="0" y="2" width="2" height="1" fill="#000"/><rect x="4" y="2" width="1" height="1" fill="#000"/><rect x="6" y="2" width="1" height="1" fill="#000"/><rect x="9" y="2" width="1" height="1" fill="#000"/><rect x="4" y="3" width="1" height="1" fill="#000"/><rect x="6" y="3" width="1" height="1" fill="#000"/><rect x="9" y="3" width="1" height="1" fill="#000"/><rect x="4" y="4" width="1" height="1" fill="#000"/><rect x="6" y="4" width="4" height="1" fill="#000"/></svg><svg class="a" style="left:632px;top:277px;shape-rendering:crispEdges" width="12" height="5"><rect x="3" y="0" width="4" height="1" fill="#000"/><rect x="8" y="0" width="4" height="1" fill="#000"/><rect x="6" y="1" width="1" height="1" fill="#000"/><rect x="8" y="1" width="1" height="1" fill="#000"/><rect x="11" y="1" width="1" height="1" fill="#000"/><rect x="0" y="2" width="2" height="1" fill="#000"/><rect x="3" y="2" width="4" height="1" fill="#000"/><rect x="8" y="2" width="1" height="1" fill="#000"/><rect x="11" y="2" width="1" height="1" fill="#000"/><rect x="3" y="3" width="1" height="1" fill="#000"/><rect x="8" y="3" width="1" height="1" fill="#000"/><rect x="11" y="3" width="1" height="1" fill="#000"/><rect x="3" y="4" width="4" height="1" fill="#000"/><rect x="8" y="4" width="4" height="1" fill="#000"/></svg><svg class="a" style="left:632px;top:308px;shape-rendering:crispEdges" width="12" height="5"><rect x="3" y="0" width="4" height="1" fill="#000"/><rect x="8" y="0" width="4" height="1" fill="#000"/><rect x="6" y="1" width="1" height="1" fill="#000"/><rect x="8" y="1" width="1" height="1" fill="#000"/><rect x="11" y="1" width="1" height="1" fill="#000"/><rect x="0" y="2" width="2" height="1" fill="#000"/><rect x="4" y="2" width="3" height="1" fill="#000"/><rect x="8" y="2" width="1" height="1" fill="#000"/><rect x="11" y="2" width="1" height="1" fill="#000"/><rect x="6" y="3" width="1" height="1" fill="#000"/><rect x="8" y="3" width="1" height="1" fill="#000"/><rect x="11" y="3" width="1" height="1" fill="#000"/><rect x="3" y="4" width="4" height="1" fill="#000"/><rect x="8" y="4" width="4" height="1" fill="#000"/></svg><svg class="a" style="left:624px;top:214px;shape-rendering:crispEdges" width="7" height="6"><rect x="0" y="0" width="2" height="1" fill="#000"/><rect x="6" y="0" width="1" height="1" fill="#000"/><rect x="0" y="1" width="1" height="1" fill="#000"/><rect x="6" y="1" width="1" height="1" fill="#000"/><rect x="0" y="2" width="1" height="1" fill="#000"/><rect x="3" y="2" width="4" height="1" fill="#000"/><rect x="0" y="3" width="1" height="1" fill="#000"/><rect x="3" y="3" width="1" height="1" fill="#000"/><rect x="6" y="3" width="1" height="1" fill="#000"/><rect x="0" y="4" width="1" height="1" fill="#000"/><rect x="3" y="4" width="1" height="1" fill="#000"/><rect x="6" y="4" width="1" height="1" fill="#000"/><rect x="0" y="5" width="2" height="1" fill="#000"/><rect x="3" y="5" width="4" height="1" fill="#000"/></svg><svg class="a" style="left:632px;top:214px;shape-rendering:crispEdges" width="7" height="6"><rect x="0" y="0" width="3" height="1" fill="#000"/><rect x="5" y="0" width="2" height="1" fill="#000"/><rect x="0" y="1" width="1" height="1" fill="#000"/><rect x="3" y="1" width="1" height="1" fill="#000"/><rect x="6" y="1" width="1" height="1" fill="#000"/><rect x="0" y="2" width="3" height="1" fill="#000"/><rect x="6" y="2" width="1" height="1" fill="#000"/><rect x="0" y="3" width="1" height="1" fill="#000"/><rect x="3" y="3" width="1" height="1" fill="#000"/><rect x="6" y="3" width="1" height="1" fill="#000"/><rect x="0" y="4" width="1" height="1" fill="#000"/><rect x="3" y="4" width="1" height="1" fill="#000"/><rect x="6" y="4" width="1" height="1" fill="#000"/><rect x="0" y="5" width="3" height="1" fill="#000"/><rect x="5" y="5" width="2" height="1" fill="#000"/></svg><svg class="a" style="left:644px;top:331px;shape-rendering:crispEdges" width="4" height="5"><rect x="0" y="0" width="4" height="1" fill="#000"/><rect x="0" y="1" width="1" height="1" fill="#000"/><rect x="3" y="1" width="1" height="1" fill="#000"/><rect x="0" y="2" width="1" height="1" fill="#000"/><rect x="3" y="2" width="1" height="1" fill="#000"/><rect x="0" y="3" width="1" height="1" fill="#000"/><rect x="3" y="3" width="1" height="1" fill="#000"/><rect x="0" y="4" width="4" height="1" fill="#000"/></svg><svg class="a" style="left:666px;top:331px;shape-rendering:crispEdges" width="9" height="5"><rect x="0" y="0" width="4" height="1" fill="#000"/><rect x="5" y="0" width="4" height="1" fill="#000"/><rect x="3" y="1" width="1" height="1" fill="#000"/><rect x="5" y="1" width="1" height="1" fill="#000"/><rect x="8" y="1" width="1" height="1" fill="#000"/><rect x="0" y="2" width="4" height="1" fill="#000"/><rect x="5" y="2" width="1" height="1" fill="#000"/><rect x="8" y="2" width="1" height="1" fill="#000"/><rect x="0" y="3" width="1" height="1" fill="#000"/><rect x="5" y="3" width="1" height="1" fill="#000"/><rect x="8" y="3" width="1" height="1" fill="#000"/><rect x="0" y="4" width="4" height="1" fill="#000"/><rect x="5" y="4" width="4" height="1" fill="#000"/></svg><svg class="a" style="left:691px;top:331px;shape-rendering:crispEdges" width="9" height="5"><rect x="0" y="0" width="1" height="1" fill="#000"/><rect x="2" y="0" width="1" height="1" fill="#000"/><rect x="5" y="0" width="4" height="1" fill="#000"/><rect x="0" y="1" width="1" height="1" fill="#000"/><rect x="2" y="1" width="1" height="1" fill="#000"/><rect x="5" y="1" width="1" height="1" fill="#000"/><rect x="8" y="1" width="1" height="1" fill="#000"/><rect x="0" y="2" width="4" height="1" fill="#000"/><rect x="5" y="2" width="1" height="1" fill="#000"/><rect x="8" y="2" width="1" height="1" fill="#000"/><rect x="2" y="3" width="1" height="1" fill="#000"/><rect x="5" y="3" width="1" height="1" fill="#000"/><rect x="8" y="3" width="1" height="1" fill="#000"/><rect x="2" y="4" width="1" height="1" fill="#000"/><rect x="5" y="4" width="4" height="1" fill="#000"/></svg><svg class="a" style="left:715px;top:331px;shape-rendering:crispEdges" width="9" height="5"><rect x="0" y="0" width="4" height="1" fill="#000"/><rect x="5" y="0" width="4" height="1" fill="#000"/><rect x="0" y="1" width="1" height="1" fill="#000"/><rect x="5" y="1" width="1" height="1" fill="#000"/><rect x="8" y="1" width="1" height="1" fill="#000"/><rect x="0" y="2" width="4" height="1" fill="#000"/><rect x="5" y="2" width="1" height="1" fill="#000"/><rect x="8" y="2" width="1" height="1" fill="#000"/><rect x="0" y="3" width="1" height="1" fill="#000"/><rect x="3" y="3" width="1" height="1" fill="#000"/><rect x="5" y="3" width="1" height="1" fill="#000"/><rect x="8" y="3" width="1" height="1" fill="#000"/><rect x="0" y="4" width="4" height="1" fill="#000"/><rect x="5" y="4" width="4" height="1" fill="#000"/></svg><svg class="a" style="left:739px;top:331px;shape-rendering:crispEdges" width="9" height="5"><rect x="0" y="0" width="4" height="1" fill="#000"/><rect x="5" y="0" width="4" height="1" fill="#000"/><rect x="0" y="1" width="1" height="1" fill="#000"/><rect x="3" y="1" width="1" height="1" fill="#000"/><rect x="5" y="1" width="1" height="1" fill="#000"/><rect x="8" y="1" width="1" height="1" fill="#000"/><rect x="0" y="2" width="4" height="1" fill="#000"/><rect x="5" y="2" width="1" height="1" fill="#000"/><rect x="8" y="2" width="1" height="1" fill="#000"/><rect x="0" y="3" width="1" height="1" fill="#000"/><rect x="3" y="3" width="1" height="1" fill="#000"/><rect x="5" y="3" width="1" height="1" fill="#000"/><rect x="8" y="3" width="1" height="1" fill="#000"/><rect x="0" y="4" width="4" height="1" fill="#000"/><rect x="5" y="4" width="4" height="1" fill="#000"/></svg><svg class="a" style="left:762px;top:331px;shape-rendering:crispEdges" width="12" height="5"><rect x="1" y="0" width="1" height="1" fill="#000"/><rect x="3" y="0" width="4" height="1" fill="#000"/><rect x="8" y="0" width="4" height="1" fill="#000"/><rect x="0" y="1" width="2" height="1" fill="#000"/><rect x="3" y="1" width="1" height="1" fill="#000"/><rect x="6" y="1" width="1" height="1" fill="#000"/><rect x="8" y="1" width="1" height="1" fill="#000"/><rect x="11" y="1" width="1" height="1" fill="#000"/><rect x="1" y="2" width="1" height="1" fill="#000"/><rect x="3" y="2" width="1" height="1" fill="#000"/><rect x="6" y="2" width="1" height="1" fill="#000"/><rect x="8" y="2" width="1" height="1" fill="#000"/><rect x="11" y="2" width="1" height="1" fill="#000"/><rect x="1" y="3" width="1" height="1" fill="#000"/><rect x="3" y="3" width="1" height="1" fill="#000"/><rect x="6" y="3" width="1" height="1" fill="#000"/><rect x="8" y="3" width="1" height="1" fill="#000"/><rect x="11" y="3" width="1" height="1" fill="#000"/><rect x="1" y="4" width="1" height="1" fill="#000"/><rect x="3" y="4" width="4" height="1" fill="#000"/><rect x="8" y="4" width="4" height="1" fill="#000"/></svg><svg class="a" style="left:740px;top:338px;shape-rendering:crispEdges" width="11" height="6"><rect x="0" y="0" width="2" height="1" fill="#000"/><rect x="3" y="0" width="1" height="1" fill="#000"/><rect x="7" y="0" width="1" height="1" fill="#000"/><rect x="9" y="0" width="2" height="1" fill="#000"/><rect x="0" y="1" width="1" height="1" fill="#000"/><rect x="6" y="1" width="1" height="1" fill="#000"/><rect x="10" y="1" width="1" height="1" fill="#000"/><rect x="0" y="2" width="1" height="1" fill="#000"/><rect x="5" y="2" width="1" height="1" fill="#000"/><rect x="10" y="2" width="1" height="1" fill="#000"/><rect x="0" y="3" width="1" height="1" fill="#000"/><rect x="4" y="3" width="1" height="1" fill="#000"/><rect x="10" y="3" width="1" height="1" fill="#000"/><rect x="0" y="4" width="1" height="1" fill="#000"/><rect x="3" y="4" width="1" height="1" fill="#000"/><rect x="7" y="4" width="1" height="1" fill="#000"/><rect x="10" y="4" width="1" height="1" fill="#000"/><rect x="0" y="5" width="2" height="1" fill="#000"/><rect x="9" y="5" width="2" height="1" fill="#000"/></svg><div class="t" style="left:612.5px;top:379px;font-size:10px;color:#000;font-weight:normal;font-family:'Liberation Sans',sans-serif;letter-spacing:-0.2px">MD</div><div class="t" style="left:644px;top:379px;font-size:10px;color:#000;font-weight:normal;font-family:'Liberation Sans',sans-serif;">:</div><div class="t" style="left:651.5px;top:379px;font-size:10px;color:#000;font-weight:normal;font-family:'Liberation Sans',sans-serif;letter-spacing:0.3px">-5.1 dB</div><div class="t" style="left:612.5px;top:393px;font-size:10px;color:#000;font-weight:normal;font-family:'Liberation Sans',sans-serif;letter-spacing:-0.2px">PSD</div><div class="t" style="left:644px;top:393px;font-size:10px;color:#000;font-weight:normal;font-family:'Liberation Sans',sans-serif;">:</div><div class="t" style="left:651.5px;top:393px;font-size:10px;color:#000;font-weight:normal;font-family:'Liberation Sans',sans-serif;letter-spacing:0.3px">8.5 dB</div><div class="t" style="left:612.5px;top:407px;font-size:10px;color:#000;font-weight:normal;font-family:'Liberation Sans',sans-serif;letter-spacing:-0.2px">CPSD</div><div class="t" style="left:644px;top:407px;font-size:10px;color:#000;font-weight:normal;font-family:'Liberation Sans',sans-serif;">:</div><div class="t" style="left:651.5px;top:407px;font-size:10px;color:#000;font-weight:normal;font-family:'Liberation Sans',sans-serif;letter-spacing:0.3px">8.1 dB</div><div class="t" style="left:612.5px;top:421px;font-size:10px;color:#000;font-weight:normal;font-family:'Liberation Sans',sans-serif;letter-spacing:-0.2px">FD</div><div class="t" style="left:644px;top:421px;font-size:10px;color:#000;font-weight:normal;font-family:'Liberation Sans',sans-serif;">:</div><div class="t" style="left:651.5px;top:421px;font-size:10px;color:#000;font-weight:normal;font-family:'Liberation Sans',sans-serif;letter-spacing:0.3px">-30 %</div><div class="t" style="left:612.5px;top:435px;font-size:10px;color:#000;font-weight:normal;font-family:'Liberation Sans',sans-serif;letter-spacing:-0.2px">SF</div><div class="t" style="left:644px;top:435px;font-size:10px;color:#000;font-weight:normal;font-family:'Liberation Sans',sans-serif;">:</div><div class="t" style="left:651.5px;top:435px;font-size:10px;color:#000;font-weight:normal;font-family:'Liberation Sans',sans-serif;letter-spacing:0.3px">2.5 dB</div><div class="t" style="left:612.5px;top:449px;font-size:10px;color:#000;font-weight:normal;font-family:'Liberation Sans',sans-serif;letter-spacing:-0.2px">N</div><div class="t" style="left:644px;top:449px;font-size:10px;color:#000;font-weight:normal;font-family:'Liberation Sans',sans-serif;">:</div><div class="t" style="left:651.5px;top:449px;font-size:10px;color:#000;font-weight:normal;font-family:'Liberation Sans',sans-serif;letter-spacing:0.3px">74</div><svg class="a" style="left:13px;top:158px" width="155" height="419" viewBox="13 158 155 419"><defs>
<pattern id="pDG" width="4" height="4" patternUnits="userSpaceOnUse"><rect width="4" height="4" fill="#00a000"/><rect x="1" y="1" width="2" height="1" fill="#000"/></pattern>
<pattern id="pLG" width="8" height="8" patternUnits="userSpaceOnUse"><rect width="8" height="8" fill="#80be1a"/><rect x="1" y="1" width="2" height="1" fill="#000"/><rect x="5" y="5" width="2" height="1" fill="#000"/></pattern>
<pattern id="pOR" width="4" height="2" patternUnits="userSpaceOnUse"><rect width="4" height="2" fill="#b85e00"/><rect x="1" y="1" width="2" height="1" fill="#000"/></pattern>
<pattern id="pRD" width="4" height="2" patternUnits="userSpaceOnUse"><rect width="4" height="2" fill="#000"/><rect x="3" y="0" width="2" height="1" fill="#b80000"/><rect x="-1" y="0" width="2" height="1" fill="#b80000"/><rect x="1" y="1" width="2" height="1" fill="#b80000"/></pattern>
<pattern id="pMB" width="8" height="4" patternUnits="userSpaceOnUse"><rect width="8" height="4" fill="#000"/><rect x="1" y="0" width="2" height="1" fill="#c00080"/><rect x="5" y="2" width="2" height="1" fill="#c00080"/></pattern>
<clipPath id="tc0"><circle cx="50.7" cy="197" r="28.2"/></clipPath><clipPath id="tc1"><circle cx="127.7" cy="197" r="28.2"/></clipPath><clipPath id="tc2"><circle cx="50.7" cy="274" r="28.2"/></clipPath><clipPath id="tc3"><circle cx="127.7" cy="274" r="28.2"/></clipPath><clipPath id="tc4"><circle cx="50.7" cy="351" r="28.2"/></clipPath><clipPath id="tc5"><circle cx="127.7" cy="351" r="28.2"/></clipPath><clipPath id="tc6"><circle cx="50.7" cy="428" r="28.2"/></clipPath><clipPath id="tc7"><circle cx="127.7" cy="428" r="28.2"/></clipPath></defs><g clip-path="url(#tc0)"><rect x="20.700000000000003" y="167" width="60" height="60" fill="url(#pDG)"/><path d="M20.2 184.3 L26.9 174.1 L35.0 168.0 L49.2 164.0 L55.3 164.3 L54.6 174.1 L49.4 178.2 L48.4 184.3 L44.3 188.4 L39.2 186.3 L38.2 191.4 L46.4 196.5 L44.3 203.6 L35.2 203.6 L33.1 198.5 L17.8 195.2Z" fill="url(#pOR)"/><path d="M33.1 189.4 L41.3 189.4 L42.3 196.5 L36.2 198.5 L32.1 195.5Z" fill="#000"/><path d="M62.7 185.3 L70.9 185.3 L74.9 193.5 L73.9 203.6 L67.9 203.6 L68.9 194.5 L63.7 190.4Z" fill="url(#pLG)"/><path d="M61.7 174.1 L70.0 170.2 L69.9 179.2 L63.7 179.2Z" fill="url(#pLG)"/><path d="M52.5 181.2 L55.1 181.2 L55.1 187.3 L52.5 187.3Z" fill="url(#pLG)"/><path d="M52.0 199.6 L57.7 199.6 L57.7 204.7 L52.0 204.7Z" fill="url(#pLG)"/><path d="M35.2 216.9 L53.6 216.9 L63.7 218.9 L61.8 228.1 L35.2 225.0Z" fill="url(#pLG)"/></g><circle cx="50.7" cy="197" r="9.4" fill="none" stroke="#808080" stroke-width="1"/><circle cx="50.7" cy="197" r="18.8" fill="none" stroke="#808080" stroke-width="1"/><circle cx="50.7" cy="197" r="28.2" fill="none" stroke="#808080" stroke-width="1"/><path d="M50.7 168V226M21.700000000000003 197H79.7" stroke="#808080" stroke-width="1"/><g clip-path="url(#tc1)"><rect x="97.7" y="167" width="60" height="60" fill="url(#pDG)"/><path d="M129.5 174.4 L136.2 165.1 L144.9 170.0 L153.7 176.7 L158.9 186.2 L146.1 188.7 L142.6 183.9 L140.2 188.7 L135.4 182.7 L129.5 178.0Z" fill="url(#pOR)"/><path d="M128.3 192.2 L135.4 192.2 L135.4 195.8 L128.3 195.8Z" fill="url(#pOR)"/><path d="M135.4 195.8 L144.9 195.8 L141.7 202.9 L136.7 202.9Z" fill="#000"/><path d="M97.7 182.7 L109.3 180.3 L109.3 194.6 L114.0 204.1 L115.2 211.3 L106.9 212.5 L95.6 204.6Z" fill="url(#pLG)"/><path d="M117.6 167.0 L127.0 164.0 L127.1 177.0 L121.2 172.0Z" fill="url(#pLG)"/><path d="M117.6 214.8 L125.9 214.8 L125.7 229.9 L117.6 227.0Z" fill="url(#pLG)"/><path d="M134.2 216.0 L142.6 216.0 L142.5 226.5 L134.2 222.0Z" fill="url(#pLG)"/></g><circle cx="127.7" cy="197" r="9.4" fill="none" stroke="#808080" stroke-width="1"/><circle cx="127.7" cy="197" r="18.8" fill="none" stroke="#808080" stroke-width="1"/><circle cx="127.7" cy="197" r="28.2" fill="none" stroke="#808080" stroke-width="1"/><path d="M127.7 168V226M98.7 197H156.7" stroke="#808080" stroke-width="1"/><g clip-path="url(#tc2)"><rect x="20.700000000000003" y="244" width="60" height="60" fill="url(#pDG)"/><path d="M20.7 259.7 L33.5 258.5 L41.8 264.5 L48.9 270.4 L41.8 275.2 L38.2 281.1 L31.1 274.0 L17.8 271.4Z" fill="url(#pRD)"/><path d="M32.3 247.8 L50.0 241.0 L50.1 264.5 L41.8 263.3 L33.5 259.7 L25.1 253.2Z" fill="#000"/><path d="M33.7 260.0 L41.7 264.0 L48.7 270.0 L41.7 275.0 L37.7 280.0 L31.7 273.0Z" fill="url(#pMB)"/><path d="M17.7 274.0 L31.1 274.0 L33.5 283.5 L29.9 290.7 L20.8 287.9Z" fill="url(#pOR)"/><path d="M56.4 241.5 L66.6 245.1 L76.7 253.7 L82.5 265.2 L82.8 281.6 L73.9 283.5 L73.9 272.8 L65.7 269.2 L57.2 262.1 L57.2 253.8 L53.7 251.4Z" fill="url(#pOR)"/><path d="M59.6 255.0 L76.8 253.8 L82.3 264.6 L77.5 271.6 L67.9 270.4 L59.6 262.1Z" fill="#000"/><path d="M60.7 261.0 L70.7 262.0 L74.7 270.0 L67.7 269.0 L60.7 264.0Z" fill="url(#pMB)"/><path d="M52.7 266.0 L55.7 266.0 L55.7 272.0 L52.7 272.0Z" fill="url(#pLG)"/><path d="M51.7 293.0 L62.7 293.0 L64.1 304.2 L51.9 307.0Z" fill="url(#pLG)"/></g><circle cx="50.7" cy="274" r="9.4" fill="none" stroke="#808080" stroke-width="1"/><circle cx="50.7" cy="274" r="18.8" fill="none" stroke="#808080" stroke-width="1"/><circle cx="50.7" cy="274" r="28.2" fill="none" stroke="#808080" stroke-width="1"/><path d="M50.7 245V303M21.700000000000003 274H79.7" stroke="#808080" stroke-width="1"/><g clip-path="url(#tc3)"><rect x="97.7" y="244" width="60" height="60" fill="url(#pDG)"/><path d="M111.9 245.1 L112.4 244.8 L116.0 243.1 L116.4 243.0 L119.5 242.0 L120.2 241.9 L126.3 241.0 L126.4 248.0 L125.5 248.0 L125.5 251.0 L124.5 251.0 L124.5 251.8 L118.8 251.8 L118.8 249.9 L116.1 249.9 L113.8 244.1Z" fill="url(#pLG)"/><path d="M124.5 257.5 L125.4 257.5 L125.4 265.0 L124.5 265.0Z" fill="url(#pLG)"/><path d="M124.5 271.6 L125.4 271.6 L125.4 274.3 L124.5 274.3Z" fill="url(#pLG)"/><path d="M95.4 267.4 L101.8 267.9 L101.8 268.8 L107.7 268.8 L107.7 265.9 L110.3 265.9 L110.3 271.5 L94.8 271.2Z" fill="url(#pLG)"/><path d="M111.4 280.8 L113.2 280.8 L113.2 279.8 L118.7 279.8 L118.7 282.7 L121.7 282.7 L121.7 283.6 L122.5 283.6 L122.5 285.3 L123.4 285.3 L123.4 288.2 L122.5 288.2 L122.5 289.1 L121.7 289.1 L121.7 290.1 L118.7 290.1 L118.7 289.1 L116.3 289.1 L115.1 288.2 L115.1 285.3 L113.2 285.3 L113.2 282.7 L111.4 282.7Z" fill="url(#pLG)"/><path d="M121.7 274.2 L125.4 274.2 L125.4 275.1 L126.4 275.1 L126.4 279.0 L124.5 279.0 L124.5 277.0 L121.7 277.0Z" fill="url(#pLG)"/><path d="M129.9 280.8 L135.6 280.8 L135.6 282.7 L129.9 282.7Z" fill="url(#pLG)"/><path d="M133.7 292.1 L135.6 292.1 L135.6 291.1 L141.1 291.1 L141.1 296.8 L135.6 296.8 L135.6 293.8 L133.7 293.8Z" fill="url(#pLG)"/><path d="M118.7 297.8 L121.7 297.8 L121.7 299.6 L122.5 299.6 L122.1 306.5 L120.4 306.2 L119.5 306.0 L117.1 305.3Z" fill="url(#pLG)"/><path d="M127.4 241.0 L164.4 243.5 L164.4 274.1 L127.4 274.1Z" fill="#000"/><path d="M138.9 274.1 L146.0 274.1 L145.7 277.0 L144.7 278.2 L142.9 279.1 L140.9 279.5 L140.4 278.5 L139.4 277.0 L138.9 275.2Z" fill="#000"/><path d="M130.1 241.1 L141.9 243.5 L143.5 245.1 L140.3 243.5 L138.4 250.8 L135.0 250.8 L135.0 252.4 L134.7 252.4 L134.7 259.2 L137.4 259.2 L137.4 261.2 L138.1 262.4 L138.9 263.6 L139.5 264.8 L140.1 265.9 L141.3 264.7 L142.9 264.7 L144.2 264.1 L145.6 262.9 L149.3 262.9 L151.5 264.3 L152.1 265.7 L159.7 265.8 L159.9 266.9 L164.4 267.8 L164.4 274.1 L139.4 274.1 L139.4 267.6 L138.7 265.8 L138.1 263.8 L137.1 263.2 L135.1 262.2 L132.7 261.8 L132.7 255.9 L131.7 255.9 L131.7 248.6 L130.0 248.6Z" fill="url(#pMB)"/><path d="M128.8 248.6 L131.7 248.6 L131.7 255.9 L132.7 255.9 L132.7 261.8 L135.1 262.2 L137.1 263.2 L138.1 263.8 L138.7 265.8 L139.5 267.8 L140.9 268.2 L140.9 274.1 L127.6 274.1 L127.6 248.6Z" fill="url(#pRD)"/><path d="M140.9 268.2 L142.3 268.6 L144.0 268.6 L145.7 269.8 L145.7 272.5 L140.9 272.5Z" fill="url(#pRD)"/><path d="M136.8 273.3 L164.4 273.3 L164.4 275.0 L153.6 275.0 L153.6 277.0 L146.7 277.0 L146.7 279.0 L144.7 279.8 L142.9 280.6 L141.9 281.0 L141.9 279.5 L140.4 278.5 L139.4 277.0 L139.4 274.1 L136.8 274.1Z" fill="url(#pRD)"/><path d="M128.8 266.1 L134.7 266.1 L134.7 267.6 L135.4 269.4 L134.7 272.9 L128.6 272.9 L128.6 269.8Z" fill="url(#pMB)"/><path d="M138.9 274.1 L146.0 274.1 L145.7 277.0 L144.7 278.2 L142.9 279.1 L140.9 279.5 L140.4 278.5 L139.4 277.0 L138.9 275.2Z" fill="#000"/><path d="M127.4 241.0 L130.1 241.1 L130.0 248.6 L128.8 248.6 L128.8 252.6 L130.0 252.6 L130.0 257.3 L130.9 257.3 L130.9 260.6 L130.0 260.6 L130.0 262.2 L128.8 262.2 L128.8 264.7 L127.8 264.7 L127.8 274.1 L126.6 274.1 L126.6 265.5 L127.2 265.5 L127.2 260.6 L128.0 260.6 L128.0 258.2 L127.4 258.2Z" fill="url(#pOR)"/><path d="M127.7 274.1 L137.4 274.1 L137.4 277.0 L138.9 278.8 L140.4 279.5 L141.4 280.3 L141.9 281.0 L141.9 281.8 L141.1 281.8 L138.4 280.8 L136.8 279.3 L136.3 277.5 L136.3 276.1 L127.7 276.1Z" fill="url(#pOR)"/><path d="M146.7 277.0 L153.6 277.0 L153.6 275.0 L164.4 275.0 L164.4 278.8 L159.8 281.5 L158.9 284.8 L157.3 288.7 L153.8 294.2 L153.3 294.8 L148.8 288.4 L146.7 288.4 L146.7 281.8 L140.9 281.8 L140.9 280.5 L142.9 280.5 L144.7 279.8 L146.7 279.0Z" fill="url(#pOR)"/></g><circle cx="127.7" cy="274" r="9.4" fill="none" stroke="#808080" stroke-width="1"/><circle cx="127.7" cy="274" r="18.8" fill="none" stroke="#808080" stroke-width="1"/><circle cx="127.7" cy="274" r="28.2" fill="none" stroke="#808080" stroke-width="1"/><path d="M127.7 245V303M98.7 274H156.7" stroke="#808080" stroke-width="1"/><g clip-path="url(#tc4)"><rect x="20.700000000000003" y="321" width="60" height="60" fill="url(#pDG)"/><path d="M24.4 331.0 L32.5 323.4 L50.0 318.0 L64.4 321.0 L74.4 328.0 L64.4 333.2 L58.4 328.4 L52.5 332.0 L47.7 328.4 L35.8 334.3Z" fill="url(#pLG)"/><path d="M64.4 336.7 L71.5 339.1 L71.5 345.0 L65.6 343.9Z" fill="url(#pOR)"/><path d="M41.7 345.0 L45.7 345.0 L45.7 350.0 L41.7 350.0Z" fill="url(#pLG)"/><path d="M63.7 356.0 L68.7 356.0 L68.7 360.0 L63.7 360.0Z" fill="url(#pLG)"/><path d="M41.7 373.0 L47.7 373.0 L47.4 383.8 L41.2 382.6Z" fill="url(#pLG)"/><path d="M51.7 372.0 L64.7 372.0 L64.7 381.0 L51.8 384.0Z" fill="url(#pLG)"/><path d="M74.7 347.0 L83.4 346.6 L83.7 351.0 L74.7 351.0Z" fill="url(#pLG)"/></g><circle cx="50.7" cy="351" r="9.4" fill="none" stroke="#808080" stroke-width="1"/><circle cx="50.7" cy="351" r="18.8" fill="none" stroke="#808080" stroke-width="1"/><circle cx="50.7" cy="351" r="28.2" fill="none" stroke="#808080" stroke-width="1"/><path d="M50.7 322V380M21.700000000000003 351H79.7" stroke="#808080" stroke-width="1"/><g clip-path="url(#tc5)"><rect x="97.7" y="321" width="60" height="60" fill="url(#pDG)"/><path d="M95.1 345.8 L99.8 333.3 L107.7 324.7 L118.3 319.4 L129.7 318.1 L144.6 322.7 L150.7 327.3 L140.2 332.0 L129.5 328.4 L118.8 330.8 L110.5 336.7 L108.1 346.2Z" fill="url(#pLG)"/><path d="M118.3 319.4 L127.0 318.0 L127.1 326.0 L118.8 326.0Z" fill="#e8e800"/><path d="M136.6 349.8 L144.9 349.8 L142.7 356.9 L137.7 356.9Z" fill="#000"/><path d="M118.8 371.2 L129.5 371.2 L129.7 383.9 L118.3 382.6Z" fill="url(#pLG)"/><path d="M148.7 353.0 L160.6 353.4 L159.3 360.4 L148.7 359.0Z" fill="url(#pLG)"/></g><circle cx="127.7" cy="351" r="9.4" fill="none" stroke="#808080" stroke-width="1"/><circle cx="127.7" cy="351" r="18.8" fill="none" stroke="#808080" stroke-width="1"/><circle cx="127.7" cy="351" r="28.2" fill="none" stroke="#808080" stroke-width="1"/><path d="M127.7 322V380M98.7 351H156.7" stroke="#808080" stroke-width="1"/><g clip-path="url(#tc6)"><rect x="20.700000000000003" y="398" width="60" height="60" fill="url(#pDG)"/><path d="M18.9 419.2 L25.6 406.5 L33.2 400.0 L41.8 405.4 L41.8 410.2 L35.8 413.7 L31.1 420.9 L28.7 425.6 L17.9 424.1Z" fill="url(#pLG)"/><path d="M40.6 396.6 L47.2 395.2 L47.7 408.0 L41.7 408.0Z" fill="url(#pLG)"/><path d="M51.9 395.0 L56.5 395.5 L55.7 405.0 L51.7 405.0Z" fill="url(#pLG)"/><path d="M40.7 415.0 L49.7 414.0 L50.7 422.0 L57.7 420.0 L65.7 425.0 L65.7 434.0 L57.7 436.0 L50.7 442.0 L41.7 440.0 L35.7 436.0 L39.7 426.0Z" fill="url(#pLG)"/><path d="M28.7 435.0 L37.7 436.0 L42.7 442.0 L42.7 452.0 L35.1 457.1 L30.7 446.0Z" fill="url(#pLG)"/><path d="M67.9 407.8 L76.2 407.1 L75.1 417.3 L69.7 417.3Z" fill="url(#pOR)"/><path d="M35.2 426.8 L40.6 426.8 L40.6 433.9 L35.2 433.9Z" fill="#000"/></g><circle cx="50.7" cy="428" r="9.4" fill="none" stroke="#808080" stroke-width="1"/><circle cx="50.7" cy="428" r="18.8" fill="none" stroke="#808080" stroke-width="1"/><circle cx="50.7" cy="428" r="28.2" fill="none" stroke="#808080" stroke-width="1"/><path d="M50.7 399V457M21.700000000000003 428H79.7" stroke="#808080" stroke-width="1"/><g clip-path="url(#tc7)"><rect x="97.7" y="398" width="60" height="60" fill="url(#pDG)"/><path d="M97.7 412.5 L110.5 412.5 L110.5 425.6 L94.8 425.4Z" fill="url(#pLG)"/><path d="M111.9 399.0 L125.7 395.1 L125.9 409.0 L112.8 409.0Z" fill="url(#pLG)"/><path d="M112.8 416.1 L123.5 416.1 L123.5 422.0 L115.2 424.4Z" fill="url(#pLG)"/><path d="M109.3 430.4 L117.6 430.4 L117.6 438.7 L109.3 438.7Z" fill="url(#pLG)"/><path d="M134.2 420.9 L139.0 420.9 L139.0 425.6 L134.2 425.6Z" fill="url(#pLG)"/><path d="M141.4 435.1 L146.1 435.1 L146.1 441.1 L141.4 441.1Z" fill="url(#pLG)"/><path d="M119.7 448.0 L122.7 448.0 L122.3 460.6 L119.2 459.9Z" fill="url(#pLG)"/><path d="M134.7 448.0 L137.7 448.0 L137.7 458.0 L135.2 460.1Z" fill="url(#pLG)"/><path d="M135.4 426.8 L144.9 426.8 L142.7 433.9 L136.7 433.9Z" fill="#000"/></g><circle cx="127.7" cy="428" r="9.4" fill="none" stroke="#808080" stroke-width="1"/><circle cx="127.7" cy="428" r="18.8" fill="none" stroke="#808080" stroke-width="1"/><circle cx="127.7" cy="428" r="28.2" fill="none" stroke="#808080" stroke-width="1"/><path d="M127.7 399V457M98.7 428H156.7" stroke="#808080" stroke-width="1"/></svg><div class="t" style="left:36.7px;top:159.5px;width:30px;text-align:center;font-size:9px;color:#008080">30°</div><div class="t" style="left:19.700000000000003px;top:167.5px;font-size:9px;color:#c00000;font-weight:normal;font-family:'Liberation Sans',sans-serif;">L</div><div class="t" style="left:113.7px;top:159.5px;width:30px;text-align:center;font-size:9px;color:#008080">30°</div><div class="t" style="left:151.7px;top:167.5px;font-size:9px;color:#008080;font-weight:normal;font-family:'Liberation Sans',sans-serif;">R</div><div class="t" style="left:36.7px;top:236.5px;width:30px;text-align:center;font-size:9px;color:#008080">30°</div><div class="t" style="left:19.700000000000003px;top:244.5px;font-size:9px;color:#c00000;font-weight:normal;font-family:'Liberation Sans',sans-serif;">L</div><div class="t" style="left:113.7px;top:236.5px;width:30px;text-align:center;font-size:9px;color:#008080">30°</div><div class="t" style="left:151.7px;top:244.5px;font-size:9px;color:#008080;font-weight:normal;font-family:'Liberation Sans',sans-serif;">R</div><div class="t" style="left:36.7px;top:313.5px;width:30px;text-align:center;font-size:9px;color:#008080">30°</div><div class="t" style="left:19.700000000000003px;top:321.5px;font-size:9px;color:#c00000;font-weight:normal;font-family:'Liberation Sans',sans-serif;">L</div><div class="t" style="left:113.7px;top:313.5px;width:30px;text-align:center;font-size:9px;color:#008080">30°</div><div class="t" style="left:151.7px;top:321.5px;font-size:9px;color:#008080;font-weight:normal;font-family:'Liberation Sans',sans-serif;">R</div><div class="t" style="left:36.7px;top:390.5px;width:30px;text-align:center;font-size:9px;color:#008080">30°</div><div class="t" style="left:19.700000000000003px;top:398.5px;font-size:9px;color:#c00000;font-weight:normal;font-family:'Liberation Sans',sans-serif;">L</div><div class="t" style="left:113.7px;top:390.5px;width:30px;text-align:center;font-size:9px;color:#008080">30°</div><div class="t" style="left:151.7px;top:398.5px;font-size:9px;color:#008080;font-weight:normal;font-family:'Liberation Sans',sans-serif;">R</div><div class="a" style="left:66px;top:215px;width:51px;height:15px;background:#fff;border:1px solid #000"></div><div class="t" style="left:69px;top:216.5px;font-size:11.5px;color:#000;font-weight:normal;font-family:'Liberation Sans',sans-serif;">25-07-85</div><div class="a" style="left:66px;top:292px;width:51px;height:15px;background:#fff;border:1px solid #000"></div><div class="t" style="left:69px;top:293.5px;font-size:11.5px;color:#000;font-weight:normal;font-family:'Liberation Sans',sans-serif;">06-11-85</div><div class="a" style="left:66px;top:369px;width:51px;height:15px;background:#fff;border:1px solid #000"></div><div class="t" style="left:69px;top:370.5px;font-size:11.5px;color:#000;font-weight:normal;font-family:'Liberation Sans',sans-serif;">20-12-85</div><div class="a" style="left:66px;top:446px;width:51px;height:15px;background:#fff;border:1px solid #000"></div><div class="t" style="left:69px;top:447.5px;font-size:11.5px;color:#000;font-weight:normal;font-family:'Liberation Sans',sans-serif;">17-04-86</div><div class="a" style="left:91px;top:236px;width:76px;height:76px;border:2px solid #ff0000"></div></body></html>
